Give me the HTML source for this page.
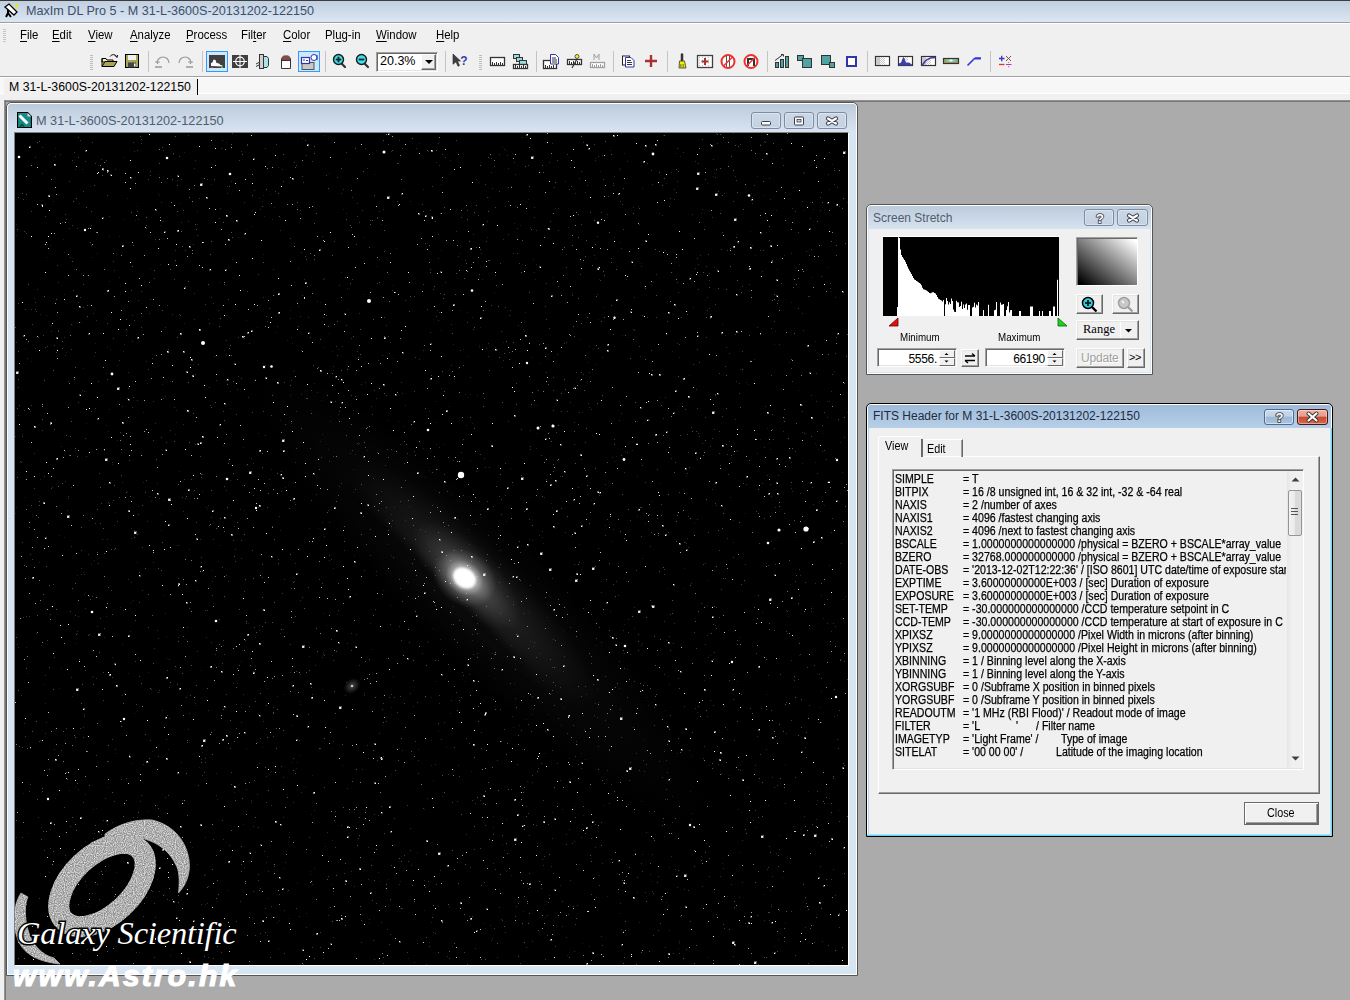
<!DOCTYPE html><html><head><meta charset="utf-8"><style>
*{margin:0;padding:0;box-sizing:border-box}
html,body{width:1350px;height:1000px;overflow:hidden;background:#ababab;font-family:"Liberation Sans",sans-serif;position:relative}
.a{position:absolute}
.t{position:absolute;white-space:nowrap;line-height:1}
#title{left:0;top:0;width:1350px;height:23px;background:linear-gradient(#c0cfe1,#dbe6f2);border-top:1px solid #3e3c3a;border-bottom:1px solid #a0a0a0}
#menu{left:0;top:23px;width:1350px;height:24px;background:#f0f0f0;border-top:1px solid #fff}
#tool{left:0;top:47px;width:1350px;height:30px;background:#f0f0f0;border-bottom:1px solid #a0a0a0}
#tabs{left:0;top:77px;width:1350px;height:23px;background:#f0f0f0;border-top:1px solid #fff}
.menu{font-size:12px;color:#000;transform:scaleX(.95);transform-origin:0 0}
.menu u{text-decoration:underline;text-decoration-thickness:1px;text-underline-offset:1.5px}
.sep{position:absolute;width:2px;background:linear-gradient(90deg,#c8c8c8 50%,#fff 50%)}
.grip{position:absolute;width:3px;background:repeating-linear-gradient(#c5c5c5 0 1px,transparent 1px 2px)}
.fx{font-size:12px;color:#000;transform:scaleX(.882);transform-origin:0 0;-webkit-text-stroke:.25px #000}
.btn{position:absolute;background:linear-gradient(#f7f7f7,#e2e2e2);border:1px solid #707070;border-radius:2px}
</style></head><body>
<div id="title" class="a"></div>
<svg class="a" style="left:2px;top:2px" width="18" height="18" viewBox="0 0 18 18">
<path d="M3 5 L7 2 L15 10 L12 13 Z" fill="#fff" stroke="#000" stroke-width="1.3"/>
<path d="M6 11 L4 15 M6 11 L9 15 M6 11 L6 8" stroke="#000" stroke-width="2"/>
<rect x="13" y="2" width="3" height="3" fill="#e8e800"/></svg>
<div class="t" style="left:26px;top:5px;font-size:12.6px;color:#3e4e68">MaxIm DL Pro 5 - M 31-L-3600S-20131202-122150</div>
<div id="menu" class="a"></div>
<div class="grip" style="left:3px;top:29px;height:14px"></div>
<div class="t menu" style="left:20px;top:29px"><u>F</u>ile</div>
<div class="t menu" style="left:52px;top:29px"><u>E</u>dit</div>
<div class="t menu" style="left:88px;top:29px"><u>V</u>iew</div>
<div class="t menu" style="left:130px;top:29px"><u>A</u>nalyze</div>
<div class="t menu" style="left:186px;top:29px"><u>P</u>rocess</div>
<div class="t menu" style="left:241px;top:29px">Fil<u>t</u>er</div>
<div class="t menu" style="left:283px;top:29px"><u>C</u>olor</div>
<div class="t menu" style="left:325px;top:29px">Pl<u>u</u>g-in</div>
<div class="t menu" style="left:376px;top:29px"><u>W</u>indow</div>
<div class="t menu" style="left:436px;top:29px"><u>H</u>elp</div>
<div id="tool" class="a"></div>
<div id="tabs" class="a"></div>
<svg class="a" style="left:0;top:47px" width="1350" height="30" viewBox="0 47 1350 30"><path d="M148.5 51V72" stroke="#c4c4c4" stroke-width="1"/><path d="M202.5 51V72" stroke="#c4c4c4" stroke-width="1"/><path d="M325.5 51V72" stroke="#c4c4c4" stroke-width="1"/><path d="M445.5 51V72" stroke="#c4c4c4" stroke-width="1"/><path d="M536.5 51V72" stroke="#c4c4c4" stroke-width="1"/><path d="M613.5 51V72" stroke="#c4c4c4" stroke-width="1"/><path d="M667.5 51V72" stroke="#c4c4c4" stroke-width="1"/><path d="M767.5 51V72" stroke="#c4c4c4" stroke-width="1"/><path d="M867.5 51V72" stroke="#c4c4c4" stroke-width="1"/><path d="M990.5 51V72" stroke="#c4c4c4" stroke-width="1"/><path d="M90 55.5h3" stroke="#bdbdbd" stroke-width="1"/><path d="M90 57.5h3" stroke="#bdbdbd" stroke-width="1"/><path d="M90 59.5h3" stroke="#bdbdbd" stroke-width="1"/><path d="M90 61.5h3" stroke="#bdbdbd" stroke-width="1"/><path d="M90 63.5h3" stroke="#bdbdbd" stroke-width="1"/><path d="M90 65.5h3" stroke="#bdbdbd" stroke-width="1"/><path d="M90 67.5h3" stroke="#bdbdbd" stroke-width="1"/><path d="M90 69.5h3" stroke="#bdbdbd" stroke-width="1"/><path d="M479 55.5h3" stroke="#bdbdbd" stroke-width="1"/><path d="M479 57.5h3" stroke="#bdbdbd" stroke-width="1"/><path d="M479 59.5h3" stroke="#bdbdbd" stroke-width="1"/><path d="M479 61.5h3" stroke="#bdbdbd" stroke-width="1"/><path d="M479 63.5h3" stroke="#bdbdbd" stroke-width="1"/><path d="M479 65.5h3" stroke="#bdbdbd" stroke-width="1"/><path d="M479 67.5h3" stroke="#bdbdbd" stroke-width="1"/><path d="M479 69.5h3" stroke="#bdbdbd" stroke-width="1"/><path d="M102 58.5h4l1 1.5h6v2h-11z" fill="#f4f2a0" stroke="#000" stroke-width="1"/><path d="M102 66.5l3-5h12l-3 5z" fill="#a8a458" stroke="#000" stroke-width="1"/><path d="M102 58.5v8" stroke="#000"/><path d="M110 56.5c2-2.5 5-2.5 6.5 0" stroke="#000" fill="none" stroke-width="1"/><path d="M115 55.5l2 2 .5-2.5" stroke="#000" fill="none"/><rect x="125.5" y="54.5" width="13" height="13" fill="#a8a458" stroke="#000"/><rect x="128" y="55" width="8" height="5" fill="#f0f0f0"/><rect x="128" y="62.5" width="8" height="5" fill="#444"/><rect x="134" y="63.5" width="1.5" height="3" fill="#fff"/><path d="M157 63a6 6 0 1 1 12 0" stroke="#9a9a9a" stroke-width="1.2" fill="none"/><path d="M155 62h5M157.5 62v2" stroke="#9a9a9a" stroke-width="1.2"/><path d="M155 67h7" stroke="#9a9a9a" stroke-width="1.5"/><path d="M179 63a6 6 0 1 1 12 0" stroke="#9a9a9a" stroke-width="1.2" fill="none"/><path d="M188 62h5M190.5 62v2" stroke="#9a9a9a" stroke-width="1.2"/><path d="M186 67h7" stroke="#9a9a9a" stroke-width="1.5"/><rect x="206.5" y="51.5" width="21" height="20" fill="#cce8ff" stroke="#3399ff"/><rect x="298.5" y="51.5" width="21" height="20" fill="#cce8ff" stroke="#3399ff"/><rect x="209" y="55" width="16" height="13" fill="#404040"/><path d="M211 66v-3l1.5-.5 1-3 2 .5 1 3 2.5.5 1.5 1.5 2 .5v1z" fill="#fff"/><path d="M211 67.5h2" stroke="#e33" /><path d="M221 67.5h2" stroke="#3c3"/><rect x="232" y="55" width="16" height="13" fill="#404040"/><circle cx="240" cy="61.5" r="4.3" stroke="#fff" fill="none" stroke-width="1.2"/><path d="M233 61.5h14M240 55v13" stroke="#fff" stroke-width="1"/><rect x="259.5" y="54.5" width="4" height="14" fill="#d0d0d0" stroke="#333"/><path d="M263.5 56.5h3.5l1.5 2v7l-1.5 2h-3.5z" fill="#a8e4ea" stroke="#333"/><path d="M256 64l3-1.5M256 66.5l3-1.5" stroke="#333"/><path d="M281.5 68.5v-10l2-2.5h5l2 2.5v10z" fill="#fff" stroke="#333"/><path d="M283.5 56h5l1.5 2v2h-8v-2z" fill="#8a4848"/><path d="M282 60.5h8" stroke="#333"/><rect x="302" y="62.5" width="12" height="7" fill="#c8c8c8" stroke="#555"/><rect x="301.5" y="57.5" width="8" height="6" fill="#fff" stroke="#3333aa" stroke-width="1.2"/><path d="M303 60h2M306 60.5h2" stroke="#3333aa"/><circle cx="314" cy="57.5" r="3" fill="#fff" stroke="#3333aa"/><path d="M317 55v5" stroke="#3333aa"/><path d="M341.5 63.5l3.5 3.5" stroke="#333" stroke-width="2.2" stroke-linecap="round"/><circle cx="338.5" cy="59.5" r="5" fill="#3ae0ee" stroke="#1a1a1a" stroke-width="1.4"/><path d="M335.7 59.5h5.6" stroke="#222" stroke-width="1.8"/><path d="M338.5 56.7v5.6" stroke="#222" stroke-width="1.8"/><path d="M364.5 63.5l3.5 3.5" stroke="#333" stroke-width="2.2" stroke-linecap="round"/><circle cx="361.5" cy="59.5" r="5" fill="#3ae0ee" stroke="#1a1a1a" stroke-width="1.4"/><path d="M358.7 59.5h5.6" stroke="#222" stroke-width="1.8"/><path d="M453 54l7.5 7h-3l2 4.5-1.5.8-2-4.5-3 2.5z" fill="#404040" stroke="#222" stroke-width=".6"/><text x="464" y="64.5" text-anchor="middle" font-family="Liberation Sans" font-weight="bold" font-size="12" fill="#3a3ab0">?</text><rect x="490.5" y="57.5" width="14" height="8" fill="#fff" stroke="#333" stroke-width="1.3"/><path d="M492.5 65v-3" stroke="#333"/><path d="M494.5 65v-2" stroke="#333"/><path d="M496.5 65v-3" stroke="#333"/><path d="M498.5 65v-2" stroke="#333"/><path d="M500.5 65v-3" stroke="#333"/><path d="M502.5 65v-2" stroke="#333"/><rect x="513.5" y="54.5" width="6" height="4" fill="#9adada" stroke="#333"/><rect x="516.5" y="57.5" width="6" height="4" fill="#9adada" stroke="#333"/><rect x="519.5" y="60.5" width="7" height="4" fill="#9adada" stroke="#333"/><rect x="513.5" y="64.5" width="14" height="4" fill="#fff" stroke="#333" stroke-width="1.3"/><path d="M515.5 68v-3" stroke="#333"/><path d="M517.5 68v-2" stroke="#333"/><path d="M519.5 68v-3" stroke="#333"/><path d="M521.5 68v-2" stroke="#333"/><path d="M523.5 68v-3" stroke="#333"/><path d="M525.5 68v-2" stroke="#333"/><rect x="543.5" y="60.5" width="13" height="8" fill="#fff" stroke="#333" stroke-width="1.3"/><path d="M545.5 68v-3" stroke="#333"/><path d="M547.5 68v-2" stroke="#333"/><path d="M549.5 68v-3" stroke="#333"/><path d="M551.5 68v-2" stroke="#333"/><path d="M553.5 68v-3" stroke="#333"/><path d="M550.5 54.5h5l3 3v6.5h-8z" fill="#fff" stroke="#3333aa"/><path d="M552 58h4M552 60h5M552 62h5" stroke="#333"/><rect x="567.5" y="59.5" width="14" height="5" fill="#fff" stroke="#333" stroke-width="1.3"/><path d="M569.5 64v-3" stroke="#333"/><path d="M571.5 64v-2" stroke="#333"/><path d="M573.5 64v-3" stroke="#333"/><path d="M575.5 64v-2" stroke="#333"/><path d="M577.5 64v-3" stroke="#333"/><path d="M579.5 64v-2" stroke="#333"/><path d="M572 68l5-9" stroke="#333" stroke-width="1.2"/><circle cx="577" cy="56.5" r="2" fill="#f0f030" stroke="#333" stroke-width=".8"/><rect x="590.5" y="62.5" width="14" height="5" fill="#fff" stroke="#a0a0a0" stroke-width="1.3"/><path d="M592.5 67v-3" stroke="#a0a0a0"/><path d="M594.5 67v-2" stroke="#a0a0a0"/><path d="M596.5 67v-3" stroke="#a0a0a0"/><path d="M598.5 67v-2" stroke="#a0a0a0"/><path d="M600.5 67v-3" stroke="#a0a0a0"/><path d="M602.5 67v-2" stroke="#a0a0a0"/><path d="M594 60v-6l2.5 4 2.5-4v6" stroke="#a0a0a0" fill="none"/><rect x="622.5" y="56" width="7" height="9" fill="#fff" stroke="#222"/><path d="M625.5 57.5h5.5l3 3v6.5h-8.5z" fill="#fff" stroke="#3333aa"/><path d="M627 60.5h4M627 62.5h5M627 64.5h5" stroke="#333"/><path d="M645 61h12M651 55v12" stroke="#a83232" stroke-width="2.4"/><path d="M682 54.5v6" stroke="#333" stroke-width="2.5" stroke-linecap="round"/><path d="M679.5 61h5l1.5 7h-7z" fill="#f0f000" stroke="#333" stroke-width=".8"/><path d="M680.5 64v3.5M682 64v3.5M683.5 64v3.5" stroke="#555" stroke-width=".6"/><rect x="697.5" y="55.5" width="15" height="12" fill="#fff" stroke="#404040" stroke-width="1.3"/><path d="M699 57.5h12M699 60h12M699 63h12M699 65.5h12" stroke="#aaa" stroke-dasharray="1 2" stroke-width=".8"/><path d="M701.5 61.5h7M705 58v7" stroke="#a83232" stroke-width="2"/><circle cx="728" cy="61.5" r="6.5" fill="#fff" stroke="#ee3030" stroke-width="2"/><path d="M726.5 56v11M729.5 56v11" stroke="#555" stroke-width="1"/><path d="M723.5 66l9-9" stroke="#ee3030" stroke-width="1.5"/><circle cx="751" cy="61.5" r="6.5" fill="#fff" stroke="#ee3030" stroke-width="2"/><path d="M748 66v-7h6v7" stroke="#333" stroke-width="2" fill="none"/><path d="M746.5 66l9-9" stroke="#ee3030" stroke-width="1.5"/><rect x="775.5" y="62.5" width="3" height="5" fill="#4fa3a3" stroke="#333"/><rect x="780.5" y="59.5" width="3" height="8" fill="#4fa3a3" stroke="#333"/><rect x="785.5" y="56.5" width="3" height="11" fill="#4fa3a3" stroke="#333"/><path d="M775 60.5l8-6M781 54.5h2.5v2" stroke="#333" fill="none"/><rect x="797.5" y="55.5" width="6" height="5" fill="#4fa3a3" stroke="#333"/><rect x="802.5" y="58.5" width="9" height="9" fill="#4fa3a3" stroke="#333"/><rect x="821.5" y="55.5" width="9" height="9" fill="#4fa3a3" stroke="#333"/><rect x="829.5" y="62.5" width="5" height="5" fill="#4fa3a3" stroke="#333"/><rect x="847" y="57" width="9" height="9" fill="#fff" stroke="#3333aa" stroke-width="2"/><defs><pattern id="chk" width="2" height="2" patternUnits="userSpaceOnUse"><rect width="2" height="2" fill="#fff"/><rect width="1" height="1" fill="#c8c8c8"/><rect x="1" y="1" width="1" height="1" fill="#c8c8c8"/></pattern></defs><rect x="875.5" y="56.5" width="14" height="9" fill="#fff" stroke="#333" stroke-width="1.2"/><rect x="876" y="57" width="4" height="8" fill="#c8c8c8"/><rect x="880" y="57" width="5" height="8" fill="url(#chk)"/><rect x="898.5" y="56.5" width="14" height="9" fill="#fff" stroke="#333" stroke-width="1.2"/><rect x="903" y="57" width="5" height="4" fill="url(#chk)"/><path d="M899 65.5v-2l2-1 2-5h1l2 5h3l3 2v1z" fill="#3e3ea8"/><rect x="921.5" y="56.5" width="14" height="9" fill="#fff" stroke="#333" stroke-width="1.2"/><rect x="922" y="57" width="4" height="8" fill="#c8c8c8"/><rect x="926" y="59" width="5" height="6" fill="url(#chk)"/><path d="M922 65.5c3-5 6-8 13-8" stroke="#3e3ea8" stroke-width="1.6" fill="none"/><rect x="943.5" y="58.5" width="15" height="5" fill="#a8a060" stroke="#333" stroke-width="1.2"/><path d="M946 59.5h3l1 2h-3z M953 59.5h3l-1 2h-3z" fill="#50e0f0"/><rect x="949.5" y="59.5" width="3" height="2" fill="#fff"/><path d="M967.5 65.5l7-7h6" stroke="#3535e0" stroke-width="1.6" fill="none"/><path d="M975 58.3h6" stroke="#3535e0" stroke-width="2"/><path d="M999 58.5h5.5M1001.7 55.7v5.5" stroke="#3535d0" stroke-width="1.3"/><path d="M1006 56l5 5M1011 56l-5 5" stroke="#8a4848" stroke-width="1"/><path d="M999 64.5h5.5" stroke="#e83030" stroke-width="1.3"/><path d="M1006 64.5h5.5" stroke="#a040c0" stroke-width="1"/><circle cx="1008.7" cy="62.5" r=".6" fill="#a040c0"/><circle cx="1008.7" cy="66.6" r=".6" fill="#a040c0"/></svg>
<div class="a" style="left:376px;top:52px;width:62px;height:20px;background:#fff;border:1px solid;border-color:#a0a0a0 #fff #fff #a0a0a0;box-shadow:inset 1px 1px #696969,inset -1px -1px #e3e3e3"></div>
<div class="t" style="left:380px;top:55px;font-size:12.5px;color:#000">20.3%</div>
<div class="a" style="left:421px;top:54px;width:15px;height:16px;background:#f0f0f0;border:1px solid;border-color:#fff #696969 #696969 #fff;box-shadow:inset -1px -1px #a0a0a0"></div>
<svg class="a" style="left:424px;top:59px" width="10" height="6"><path d="M1 1h8L5 5z" fill="#000"/></svg>
<div class="a" style="left:0;top:78px;width:1350px;height:16px;background:#f7f7f7;border-bottom:1px solid #fff"></div>
<div class="a" style="left:4px;top:78px;width:193px;height:17px;background:#f0f0f0"></div>
<div class="t" style="left:9px;top:81px;font-size:12.3px;color:#000">M 31-L-3600S-20131202-122150</div>
<div class="a" style="left:197px;top:79px;width:1px;height:16px;background:#000"></div>
<div class="a" style="left:0;top:95px;width:1350px;height:5px;background:#f0f0f0"></div>
<div class="a" style="left:0;top:95px;width:4px;height:905px;background:#f0f0f0"></div>
<div class="a" style="left:4px;top:100px;width:1346px;height:2px;background:linear-gradient(#a0a0a0,#696969)"></div>
<div class="a" style="left:4px;top:100px;width:2px;height:900px;background:linear-gradient(90deg,#a0a0a0,#696969)"></div>
<div class="a" style="left:6px;top:102px;width:852px;height:874px;border:1px solid #555;border-radius:5px 5px 0 0;background:#d7e4f2;box-shadow:inset 1px 1px 0 #fff,inset -1px -1px 0 #fff"></div>
<div class="a" style="left:8px;top:104px;width:848px;height:28px;border-radius:3px 3px 0 0;background:linear-gradient(#bccbdc,#d9e4f1)"></div>
<div class="a" style="left:14px;top:132px;width:835px;height:834px;border:1px solid;border-color:#808080 #fff #fff #808080"></div>
<div class="a" id="img" style="left:15px;top:133px;width:833px;height:832px;background:#000;overflow:hidden"><svg width="833" height="832" viewBox="0 0 833 832" style="display:block"><defs>
<radialGradient id="g1"><stop offset="0" stop-color="#fff" stop-opacity=".065"/><stop offset=".5" stop-color="#fff" stop-opacity=".025"/><stop offset="1" stop-color="#fff" stop-opacity="0"/></radialGradient>
<radialGradient id="g5"><stop offset="0" stop-color="#fff" stop-opacity=".32"/><stop offset=".45" stop-color="#fff" stop-opacity=".1"/><stop offset="1" stop-color="#fff" stop-opacity="0"/></radialGradient>
<radialGradient id="g2"><stop offset="0" stop-color="#fff" stop-opacity=".14"/><stop offset=".4" stop-color="#fff" stop-opacity=".055"/><stop offset="1" stop-color="#fff" stop-opacity="0"/></radialGradient>
<radialGradient id="g3"><stop offset="0" stop-color="#fff" stop-opacity="1"/><stop offset=".3" stop-color="#fff" stop-opacity=".6"/><stop offset=".6" stop-color="#fff" stop-opacity=".18"/><stop offset="1" stop-color="#fff" stop-opacity="0"/></radialGradient>
<radialGradient id="g4"><stop offset="0" stop-color="#fff" stop-opacity=".28"/><stop offset="1" stop-color="#fff" stop-opacity="0"/></radialGradient>
<filter id="bl2" x="-50%" y="-50%" width="200%" height="200%"><feGaussianBlur stdDeviation="3"/></filter><filter id="bl" x="-50%" y="-50%" width="200%" height="200%"><feGaussianBlur stdDeviation="1.2"/></filter>
</defs><g transform="translate(449.5 445) rotate(45)"><ellipse cx="25" cy="0" rx="320" ry="68" fill="url(#g1)"/><ellipse cx="10" cy="-3" rx="170" ry="40" fill="url(#g2)"/><ellipse cx="0" cy="-3" rx="70" ry="30" fill="url(#g5)"/><ellipse cx="-15" cy="22" rx="130" ry="5" fill="#000" opacity=".55" filter="url(#bl2)"/></g><g transform="translate(449.5 445) rotate(35)"><ellipse cx="0" cy="0" rx="34" ry="27" fill="url(#g3)"/><ellipse cx="0" cy="0" rx="12" ry="9.5" fill="#fff" filter="url(#bl)"/></g><circle cx="337" cy="553" r="1.3" fill="#fff" opacity=".7"/><ellipse cx="337" cy="553" rx="9" ry="7" fill="url(#g4)" transform="rotate(-40 337 553)"/><path fill="#fff" fill-opacity="0.118" d="M145 92h1v1h-1zM638 15h1v1h-1zM247 614h1v1h-1zM511 4h1v1h-1zM416 564h1v1h-1zM30 71h1v1h-1zM395 68h1v1h-1zM252 723h1v1h-1zM403 616h1v1h-1zM452 264h1v1h-1zM303 395h1v1h-1zM48 106h1v1h-1zM233 490h1v1h-1zM766 16h1v1h-1zM255 61h1v1h-1zM604 35h1v1h-1zM34 21h1v1h-1zM326 139h1v1h-1zM79 427h1v1h-1zM511 586h1v1h-1zM388 596h1v1h-1zM623 73h1v1h-1zM92 654h1v1h-1zM451 473h1v1h-1zM531 768h1v1h-1zM317 615h1v1h-1zM359 41h1v1h-1zM283 173h1v1h-1zM328 76h1v1h-1zM284 622h1v1h-1zM664 810h1v1h-1zM465 194h1v1h-1zM797 144h1v1h-1zM182 731h1v1h-1zM773 483h1v1h-1zM201 640h1v1h-1zM101 739h1v1h-1zM268 735h1v1h-1zM356 516h1v1h-1zM504 592h1v1h-1zM420 548h1v1h-1zM28 551h1v1h-1zM528 410h1v1h-1zM132 718h1v1h-1zM107 511h1v1h-1zM135 744h1v1h-1zM265 397h1v1h-1zM205 412h1v1h-1zM108 24h1v1h-1zM161 289h1v1h-1zM697 473h1v1h-1zM13 649h1v1h-1zM97 524h1v1h-1zM308 480h1v1h-1zM10 364h1v1h-1zM583 186h1v1h-1zM657 218h1v1h-1zM780 404h1v1h-1zM117 630h1v1h-1zM454 411h1v1h-1zM533 581h1v1h-1zM653 455h1v1h-1zM562 611h1v1h-1zM554 625h1v1h-1zM46 535h1v1h-1zM147 251h1v1h-1zM244 492h1v1h-1zM699 40h1v1h-1zM435 27h1v1h-1zM74 773h1v1h-1zM762 136h1v1h-1zM331 80h1v1h-1zM794 9h1v1h-1zM317 218h1v1h-1zM288 831h1v1h-1zM226 528h1v1h-1zM806 558h1v1h-1zM499 550h1v1h-1zM725 632h1v1h-1zM91 475h1v1h-1zM536 370h1v1h-1zM350 676h1v1h-1zM528 547h1v1h-1zM276 629h1v1h-1zM426 197h1v1h-1zM478 683h1v1h-1zM692 472h1v1h-1zM669 455h1v1h-1zM243 300h1v1h-1zM469 790h1v1h-1zM568 682h1v1h-1zM385 748h1v1h-1zM457 391h1v1h-1zM104 144h1v1h-1zM37 474h1v1h-1zM102 232h1v1h-1zM416 789h1v1h-1zM339 422h1v1h-1zM676 623h1v1h-1zM807 300h1v1h-1zM582 556h1v1h-1zM169 190h1v1h-1zM629 606h1v1h-1zM540 395h1v1h-1zM54 657h1v1h-1zM412 509h1v1h-1zM444 120h1v1h-1zM514 406h1v1h-1zM487 711h1v1h-1zM580 125h1v1h-1zM745 306h1v1h-1zM332 176h1v1h-1zM46 313h1v1h-1zM196 51h1v1h-1zM228 314h1v1h-1zM823 677h1v1h-1zM283 135h1v1h-1zM540 75h1v1h-1zM822 582h1v1h-1zM751 561h1v1h-1zM2 511h1v1h-1zM611 731h1v1h-1zM332 155h1v1h-1zM817 31h1v1h-1zM638 149h1v1h-1zM318 435h1v1h-1zM534 762h1v1h-1zM538 144h1v1h-1zM483 434h1v1h-1zM302 259h1v1h-1zM625 223h1v1h-1zM164 412h1v1h-1zM390 387h1v1h-1zM429 74h1v1h-1zM281 635h1v1h-1zM740 122h1v1h-1zM262 789h1v1h-1zM143 41h1v1h-1zM676 686h1v1h-1zM123 373h1v1h-1zM414 278h1v1h-1zM259 74h1v1h-1zM789 77h1v1h-1zM627 425h1v1h-1zM240 533h1v1h-1zM556 403h1v1h-1zM665 783h1v1h-1zM270 354h1v1h-1zM64 70h1v1h-1zM721 317h1v1h-1zM49 161h1v1h-1zM365 748h1v1h-1zM414 337h1v1h-1zM452 179h1v1h-1zM686 80h1v1h-1zM418 495h1v1h-1zM584 742h1v1h-1zM551 121h1v1h-1zM277 367h1v1h-1zM10 215h1v1h-1zM408 315h1v1h-1zM256 638h1v1h-1zM181 355h1v1h-1zM68 772h1v1h-1zM832 279h1v1h-1zM516 581h1v1h-1zM384 615h1v1h-1zM457 290h1v1h-1zM564 411h1v1h-1zM117 816h1v1h-1zM66 189h1v1h-1zM464 212h1v1h-1zM57 789h1v1h-1zM500 73h1v1h-1zM314 200h1v1h-1zM204 149h1v1h-1zM518 126h1v1h-1zM240 504h1v1h-1zM299 677h1v1h-1zM349 104h1v1h-1zM559 673h1v1h-1zM464 214h1v1h-1zM809 372h1v1h-1zM491 686h1v1h-1zM443 235h1v1h-1zM527 404h1v1h-1zM759 813h1v1h-1zM479 159h1v1h-1zM379 374h1v1h-1zM548 574h1v1h-1zM794 808h1v1h-1zM308 519h1v1h-1zM132 678h1v1h-1zM416 632h1v1h-1zM157 816h1v1h-1zM160 301h1v1h-1zM307 556h1v1h-1zM581 512h1v1h-1zM225 376h1v1h-1zM341 461h1v1h-1zM50 318h1v1h-1zM228 691h1v1h-1zM730 380h1v1h-1zM416 607h1v1h-1zM308 214h1v1h-1zM91 292h1v1h-1zM256 336h1v1h-1zM49 404h1v1h-1zM654 734h1v1h-1zM593 559h1v1h-1zM343 695h1v1h-1zM176 800h1v1h-1zM693 447h1v1h-1zM455 327h1v1h-1zM118 364h1v1h-1zM317 707h1v1h-1zM483 417h1v1h-1zM443 632h1v1h-1zM190 771h1v1h-1zM825 309h1v1h-1zM268 496h1v1h-1zM237 77h1v1h-1zM588 672h1v1h-1zM309 2h1v1h-1zM144 62h1v1h-1zM584 146h1v1h-1zM30 570h1v1h-1zM437 813h1v1h-1zM32 111h1v1h-1zM305 308h1v1h-1zM190 704h1v1h-1zM0 380h1v1h-1zM318 237h1v1h-1zM553 94h1v1h-1zM452 223h1v1h-1zM388 293h1v1h-1zM487 14h1v1h-1zM376 381h1v1h-1zM279 149h1v1h-1zM692 50h1v1h-1zM164 338h1v1h-1zM150 480h1v1h-1zM626 668h1v1h-1zM290 654h1v1h-1zM649 703h1v1h-1zM355 490h1v1h-1zM597 408h1v1h-1zM260 199h1v1h-1zM436 361h1v1h-1zM731 249h1v1h-1zM767 744h1v1h-1zM804 769h1v1h-1zM236 669h1v1h-1zM707 191h1v1h-1zM663 273h1v1h-1zM338 336h1v1h-1zM475 792h1v1h-1zM67 36h1v1h-1zM722 548h1v1h-1zM808 485h1v1h-1zM12 540h1v1h-1zM193 186h1v1h-1zM274 785h1v1h-1zM62 442h1v1h-1zM57 563h1v1h-1zM747 479h1v1h-1zM601 323h1v1h-1zM343 311h1v1h-1zM263 34h1v1h-1zM323 216h1v1h-1zM421 311h1v1h-1zM231 615h1v1h-1zM61 510h1v1h-1zM557 160h1v1h-1zM829 744h1v1h-1zM100 620h1v1h-1zM361 442h1v1h-1zM149 367h1v1h-1zM211 182h1v1h-1zM120 87h1v1h-1zM21 500h1v1h-1zM712 596h1v1h-1zM718 321h1v1h-1zM735 684h1v1h-1zM712 763h1v1h-1zM785 696h1v1h-1zM97 331h1v1h-1zM64 812h1v1h-1zM567 279h1v1h-1zM226 574h1v1h-1zM306 267h1v1h-1zM275 177h1v1h-1zM308 401h1v1h-1zM663 815h1v1h-1zM77 544h1v1h-1zM732 654h1v1h-1zM605 780h1v1h-1zM591 646h1v1h-1zM181 572h1v1h-1zM776 169h1v1h-1zM809 206h1v1h-1zM650 117h1v1h-1zM425 506h1v1h-1zM276 204h1v1h-1zM296 681h1v1h-1zM49 119h1v1h-1zM208 512h1v1h-1zM742 43h1v1h-1zM166 629h1v1h-1zM148 88h1v1h-1zM142 350h1v1h-1zM581 764h1v1h-1zM314 40h1v1h-1zM723 110h1v1h-1zM299 250h1v1h-1zM783 257h1v1h-1zM413 508h1v1h-1zM134 795h1v1h-1zM751 1h1v1h-1zM1 704h1v1h-1zM480 519h1v1h-1zM381 115h1v1h-1zM657 663h1v1h-1zM487 234h1v1h-1zM522 272h1v1h-1zM621 374h1v1h-1zM82 120h1v1h-1zM718 409h1v1h-1zM745 11h1v1h-1zM116 767h1v1h-1zM187 619h1v1h-1zM798 76h1v1h-1zM793 658h1v1h-1zM474 64h1v1h-1zM294 395h1v1h-1zM653 543h1v1h-1zM231 96h1v1h-1zM508 196h1v1h-1zM122 429h1v1h-1zM84 811h1v1h-1zM136 368h1v1h-1zM128 349h1v1h-1zM180 570h1v1h-1zM94 148h1v1h-1zM95 216h1v1h-1zM438 473h1v1h-1zM599 213h1v1h-1zM236 93h1v1h-1zM447 467h1v1h-1zM576 367h1v1h-1zM229 377h1v1h-1zM107 349h1v1h-1zM190 741h1v1h-1zM322 481h1v1h-1zM754 310h1v1h-1zM91 483h1v1h-1zM812 268h1v1h-1zM829 522h1v1h-1zM64 793h1v1h-1zM94 276h1v1h-1zM609 20h1v1h-1zM24 429h1v1h-1zM546 592h1v1h-1zM770 631h1v1h-1zM749 62h1v1h-1zM128 279h1v1h-1zM610 318h1v1h-1zM92 214h1v1h-1zM674 242h1v1h-1zM248 121h1v1h-1zM269 561h1v1h-1zM178 231h1v1h-1zM671 342h1v1h-1zM749 761h1v1h-1zM44 402h1v1h-1zM60 654h1v1h-1zM462 452h1v1h-1zM692 824h1v1h-1zM679 55h1v1h-1zM470 795h1v1h-1zM607 202h1v1h-1zM323 281h1v1h-1zM762 404h1v1h-1zM365 821h1v1h-1zM231 332h1v1h-1zM253 765h1v1h-1zM71 752h1v1h-1zM366 91h1v1h-1zM229 734h1v1h-1zM812 134h1v1h-1zM457 507h1v1h-1zM40 665h1v1h-1zM478 694h1v1h-1zM1 102h1v1h-1zM278 238h1v1h-1zM105 474h1v1h-1zM364 623h1v1h-1zM515 508h1v1h-1zM698 43h1v1h-1zM228 203h1v1h-1zM426 51h1v1h-1zM574 213h1v1h-1zM426 117h1v1h-1zM631 564h1v1h-1zM568 582h1v1h-1zM375 472h1v1h-1zM213 757h1v1h-1zM814 56h1v1h-1zM122 520h1v1h-1zM669 435h1v1h-1zM140 108h1v1h-1zM282 629h1v1h-1zM209 217h1v1h-1zM421 29h1v1h-1zM569 596h1v1h-1zM263 815h1v1h-1zM317 751h1v1h-1zM247 68h1v1h-1zM193 372h1v1h-1zM530 620h1v1h-1zM182 808h1v1h-1zM282 750h1v1h-1zM393 449h1v1h-1zM92 691h1v1h-1zM305 169h1v1h-1zM451 292h1v1h-1zM349 560h1v1h-1zM760 198h1v1h-1zM364 126h1v1h-1zM13 700h1v1h-1zM604 109h1v1h-1zM491 738h1v1h-1zM279 237h1v1h-1zM517 407h1v1h-1zM257 86h1v1h-1zM35 112h1v1h-1zM44 555h1v1h-1zM19 798h1v1h-1zM264 787h1v1h-1zM564 731h1v1h-1zM609 491h1v1h-1zM586 644h1v1h-1zM678 174h1v1h-1zM477 520h1v1h-1zM599 104h1v1h-1zM310 713h1v1h-1zM68 439h1v1h-1zM372 287h1v1h-1zM462 262h1v1h-1zM491 388h1v1h-1zM534 299h1v1h-1zM247 477h1v1h-1zM182 91h1v1h-1zM409 676h1v1h-1zM438 211h1v1h-1zM637 368h1v1h-1zM772 500h1v1h-1zM814 432h1v1h-1zM496 742h1v1h-1zM248 62h1v1h-1zM707 730h1v1h-1zM383 288h1v1h-1zM694 545h1v1h-1zM7 301h1v1h-1zM1 374h1v1h-1zM800 310h1v1h-1zM552 822h1v1h-1zM238 538h1v1h-1zM81 675h1v1h-1zM294 523h1v1h-1zM42 661h1v1h-1zM467 146h1v1h-1zM71 290h1v1h-1zM765 702h1v1h-1zM651 769h1v1h-1zM373 746h1v1h-1zM81 263h1v1h-1zM514 479h1v1h-1zM354 790h1v1h-1zM752 295h1v1h-1zM488 209h1v1h-1zM51 219h1v1h-1zM662 620h1v1h-1zM53 248h1v1h-1zM25 346h1v1h-1zM694 632h1v1h-1zM644 80h1v1h-1zM93 298h1v1h-1zM611 146h1v1h-1zM295 738h1v1h-1zM409 777h1v1h-1zM122 73h1v1h-1zM761 77h1v1h-1zM402 719h1v1h-1zM297 642h1v1h-1zM587 224h1v1h-1zM244 497h1v1h-1zM595 478h1v1h-1zM149 462h1v1h-1zM491 17h1v1h-1zM429 437h1v1h-1zM299 735h1v1h-1zM815 828h1v1h-1zM612 536h1v1h-1zM242 194h1v1h-1zM651 507h1v1h-1zM739 226h1v1h-1zM133 629h1v1h-1zM378 152h1v1h-1zM217 126h1v1h-1zM279 369h1v1h-1zM547 676h1v1h-1zM151 503h1v1h-1zM577 302h1v1h-1zM613 204h1v1h-1zM599 328h1v1h-1zM588 174h1v1h-1zM8 660h1v1h-1zM448 216h1v1h-1zM573 229h1v1h-1zM715 364h1v1h-1zM532 484h1v1h-1zM112 790h1v1h-1zM78 543h1v1h-1zM42 216h1v1h-1zM215 258h1v1h-1zM590 392h1v1h-1zM36 192h1v1h-1zM182 78h1v1h-1zM626 130h1v1h-1zM622 343h1v1h-1zM40 15h1v1h-1zM677 680h1v1h-1zM499 90h1v1h-1zM450 261h1v1h-1zM158 21h1v1h-1zM586 448h1v1h-1zM774 325h1v1h-1zM62 500h1v1h-1zM146 381h1v1h-1zM249 83h1v1h-1zM420 268h1v1h-1zM827 339h1v1h-1zM517 777h1v1h-1zM285 568h1v1h-1zM363 739h1v1h-1zM104 103h1v1h-1zM630 390h1v1h-1zM645 350h1v1h-1zM644 264h1v1h-1zM80 210h1v1h-1zM613 671h1v1h-1zM285 571h1v1h-1zM89 504h1v1h-1zM784 522h1v1h-1zM17 817h1v1h-1zM118 467h1v1h-1zM79 223h1v1h-1zM31 124h1v1h-1zM565 206h1v1h-1zM34 739h1v1h-1zM585 38h1v1h-1zM774 229h1v1h-1zM94 103h1v1h-1zM814 665h1v1h-1zM757 819h1v1h-1zM348 161h1v1h-1zM660 20h1v1h-1zM819 238h1v1h-1zM327 632h1v1h-1zM740 694h1v1h-1zM68 235h1v1h-1zM116 395h1v1h-1zM675 658h1v1h-1zM805 378h1v1h-1zM410 344h1v1h-1zM606 0h1v1h-1zM519 139h1v1h-1zM423 598h1v1h-1zM271 0h1v1h-1zM775 451h1v1h-1zM76 431h1v1h-1zM453 396h1v1h-1zM732 793h1v1h-1zM427 663h1v1h-1zM802 667h1v1h-1zM211 9h1v1h-1zM115 498h1v1h-1zM74 463h1v1h-1zM276 592h1v1h-1zM108 728h1v1h-1zM650 780h1v1h-1zM378 225h1v1h-1zM208 312h1v1h-1zM485 480h1v1h-1zM187 358h1v1h-1zM108 218h1v1h-1zM116 469h1v1h-1zM307 389h1v1h-1zM130 725h1v1h-1zM368 457h1v1h-1zM240 246h1v1h-1zM434 273h1v1h-1zM530 771h1v1h-1zM650 577h1v1h-1zM361 17h1v1h-1zM755 757h1v1h-1zM137 618h1v1h-1zM66 140h1v1h-1zM102 307h1v1h-1zM444 569h1v1h-1zM498 468h1v1h-1zM373 691h1v1h-1zM295 741h1v1h-1zM311 492h1v1h-1zM525 520h1v1h-1zM664 224h1v1h-1zM262 563h1v1h-1zM580 231h1v1h-1zM530 784h1v1h-1zM753 672h1v1h-1zM548 497h1v1h-1zM404 10h1v1h-1zM735 98h1v1h-1zM202 666h1v1h-1zM781 134h1v1h-1zM733 251h1v1h-1zM182 457h1v1h-1zM456 638h1v1h-1zM570 626h1v1h-1zM390 272h1v1h-1zM388 56h1v1h-1zM830 463h1v1h-1zM695 522h1v1h-1zM170 506h1v1h-1zM485 417h1v1h-1zM495 335h1v1h-1zM472 104h1v1h-1zM793 29h1v1h-1zM513 66h1v1h-1zM755 316h1v1h-1zM759 211h1v1h-1zM797 473h1v1h-1zM537 679h1v1h-1zM118 788h1v1h-1zM550 48h1v1h-1zM376 574h1v1h-1zM806 462h1v1h-1zM690 167h1v1h-1zM150 715h1v1h-1zM517 224h1v1h-1zM38 68h1v1h-1zM145 131h1v1h-1zM184 634h1v1h-1zM496 512h1v1h-1zM25 181h1v1h-1zM100 379h1v1h-1zM31 182h1v1h-1zM538 807h1v1h-1zM109 773h1v1h-1zM654 797h1v1h-1zM109 86h1v1h-1zM751 99h1v1h-1zM508 778h1v1h-1zM479 545h1v1h-1zM682 579h1v1h-1zM186 537h1v1h-1zM701 136h1v1h-1zM445 177h1v1h-1zM78 676h1v1h-1zM714 642h1v1h-1zM725 236h1v1h-1zM275 262h1v1h-1zM521 131h1v1h-1zM800 208h1v1h-1zM277 210h1v1h-1zM426 255h1v1h-1zM518 576h1v1h-1zM330 750h1v1h-1zM70 661h1v1h-1zM724 719h1v1h-1zM219 659h1v1h-1zM622 383h1v1h-1zM664 132h1v1h-1zM112 65h1v1h-1zM19 165h1v1h-1zM26 512h1v1h-1zM77 124h1v1h-1zM196 437h1v1h-1zM658 181h1v1h-1zM275 539h1v1h-1zM164 70h1v1h-1zM803 316h1v1h-1zM203 428h1v1h-1zM507 131h1v1h-1zM142 746h1v1h-1zM134 363h1v1h-1zM521 315h1v1h-1zM768 396h1v1h-1zM378 543h1v1h-1zM307 301h1v1h-1zM63 826h1v1h-1zM177 714h1v1h-1zM324 243h1v1h-1zM518 513h1v1h-1zM313 316h1v1h-1zM429 311h1v1h-1zM408 56h1v1h-1zM11 514h1v1h-1zM758 25h1v1h-1zM334 156h1v1h-1zM563 431h1v1h-1zM604 555h1v1h-1zM665 23h1v1h-1zM398 573h1v1h-1zM438 417h1v1h-1zM571 561h1v1h-1zM828 466h1v1h-1zM761 720h1v1h-1zM70 459h1v1h-1zM153 616h1v1h-1zM726 679h1v1h-1zM718 0h1v1h-1zM519 272h1v1h-1zM133 539h1v1h-1zM498 594h1v1h-1zM709 573h1v1h-1zM340 321h1v1h-1zM265 287h1v1h-1zM393 825h1v1h-1zM223 104h1v1h-1zM222 550h1v1h-1zM68 275h1v1h-1zM510 179h1v1h-1zM710 202h1v1h-1zM567 810h1v1h-1zM58 760h1v1h-1zM240 719h1v1h-1zM574 813h1v1h-1zM455 261h1v1h-1zM315 288h1v1h-1zM689 547h1v1h-1zM572 361h1v1h-1zM161 277h1v1h-1zM832 69h1v1h-1zM376 422h1v1h-1zM421 426h1v1h-1zM633 572h1v1h-1zM75 53h1v1h-1zM545 752h1v1h-1zM706 640h1v1h-1zM434 773h1v1h-1zM718 387h1v1h-1zM124 819h1v1h-1zM201 497h1v1h-1zM112 358h1v1h-1zM770 790h1v1h-1zM244 65h1v1h-1zM317 522h1v1h-1zM435 580h1v1h-1zM554 24h1v1h-1zM352 317h1v1h-1zM192 376h1v1h-1zM74 387h1v1h-1zM252 555h1v1h-1zM197 31h1v1h-1zM628 557h1v1h-1zM778 54h1v1h-1zM15 581h1v1h-1zM763 806h1v1h-1zM505 92h1v1h-1zM16 228h1v1h-1zM387 775h1v1h-1zM699 134h1v1h-1zM507 655h1v1h-1zM648 2h1v1h-1zM151 525h1v1h-1zM592 763h1v1h-1zM500 526h1v1h-1zM155 822h1v1h-1zM1 91h1v1h-1zM654 551h1v1h-1zM555 447h1v1h-1zM376 641h1v1h-1zM457 184h1v1h-1zM272 207h1v1h-1zM338 359h1v1h-1zM522 300h1v1h-1zM450 548h1v1h-1zM622 759h1v1h-1zM362 133h1v1h-1zM3 282h1v1h-1zM146 397h1v1h-1zM44 774h1v1h-1zM595 17h1v1h-1zM135 135h1v1h-1zM302 168h1v1h-1zM514 0h1v1h-1zM99 392h1v1h-1zM212 53h1v1h-1zM787 330h1v1h-1zM756 771h1v1h-1zM169 19h1v1h-1zM523 445h1v1h-1zM566 620h1v1h-1zM812 752h1v1h-1zM804 574h1v1h-1zM580 25h1v1h-1zM91 240h1v1h-1zM143 60h1v1h-1zM769 122h1v1h-1zM215 275h1v1h-1zM520 146h1v1h-1zM109 211h1v1h-1zM619 132h1v1h-1zM39 518h1v1h-1zM737 112h1v1h-1zM373 141h1v1h-1zM109 672h1v1h-1zM736 60h1v1h-1zM291 780h1v1h-1zM723 676h1v1h-1zM627 721h1v1h-1zM627 55h1v1h-1zM679 390h1v1h-1zM421 289h1v1h-1zM636 748h1v1h-1zM456 131h1v1h-1zM525 230h1v1h-1zM635 741h1v1h-1zM100 620h1v1h-1zM725 504h1v1h-1zM583 569h1v1h-1zM431 614h1v1h-1zM174 416h1v1h-1zM132 250h1v1h-1zM647 768h1v1h-1zM512 648h1v1h-1zM356 726h1v1h-1zM372 411h1v1h-1zM274 699h1v1h-1zM149 761h1v1h-1zM514 364h1v1h-1zM418 647h1v1h-1zM113 540h1v1h-1zM489 717h1v1h-1zM619 495h1v1h-1zM800 329h1v1h-1zM423 773h1v1h-1zM203 177h1v1h-1zM231 187h1v1h-1zM624 789h1v1h-1zM617 317h1v1h-1zM742 320h1v1h-1zM119 580h1v1h-1zM651 50h1v1h-1zM414 809h1v1h-1zM394 373h1v1h-1z"/><path fill="#fff" fill-opacity="0.176" d="M462 520h1v1h-1zM644 628h1v1h-1zM669 756h1v1h-1zM60 36h1v1h-1zM451 605h1v1h-1zM701 0h1v1h-1zM429 74h1v1h-1zM776 120h1v1h-1zM816 498h1v1h-1zM698 572h1v1h-1zM458 521h1v1h-1zM749 787h1v1h-1zM20 215h1v1h-1zM43 149h1v1h-1zM76 92h1v1h-1zM596 651h1v1h-1zM187 642h1v1h-1zM318 233h1v1h-1zM742 194h1v1h-1zM757 644h1v1h-1zM300 532h1v1h-1zM737 70h1v1h-1zM286 217h1v1h-1zM543 585h1v1h-1zM94 370h1v1h-1zM461 338h1v1h-1zM754 45h1v1h-1zM492 22h1v1h-1zM308 146h1v1h-1zM681 256h1v1h-1zM649 441h1v1h-1zM219 393h1v1h-1zM597 324h1v1h-1zM787 272h1v1h-1zM79 700h1v1h-1zM797 354h1v1h-1zM402 810h1v1h-1zM474 334h1v1h-1zM499 29h1v1h-1zM819 35h1v1h-1zM545 343h1v1h-1zM746 575h1v1h-1zM586 509h1v1h-1zM502 95h1v1h-1zM36 198h1v1h-1zM542 630h1v1h-1zM551 209h1v1h-1zM542 221h1v1h-1zM199 223h1v1h-1zM99 137h1v1h-1zM445 431h1v1h-1zM514 702h1v1h-1zM150 194h1v1h-1zM117 208h1v1h-1zM593 63h1v1h-1zM415 199h1v1h-1zM583 613h1v1h-1zM286 119h1v1h-1zM785 442h1v1h-1zM415 211h1v1h-1zM27 14h1v1h-1zM599 43h1v1h-1zM75 816h1v1h-1zM256 773h1v1h-1zM466 120h1v1h-1zM53 365h1v1h-1zM372 796h1v1h-1zM297 751h1v1h-1zM281 278h1v1h-1zM648 285h1v1h-1zM194 254h1v1h-1zM692 164h1v1h-1zM490 362h1v1h-1zM828 638h1v1h-1zM399 829h1v1h-1zM297 561h1v1h-1zM289 146h1v1h-1zM469 325h1v1h-1zM409 747h1v1h-1zM598 396h1v1h-1zM816 399h1v1h-1zM605 576h1v1h-1zM86 26h1v1h-1zM251 729h1v1h-1zM430 149h1v1h-1zM663 159h1v1h-1zM111 202h1v1h-1zM367 222h1v1h-1zM609 520h1v1h-1zM50 222h1v1h-1zM806 59h1v1h-1zM460 815h1v1h-1zM730 431h1v1h-1zM148 265h1v1h-1zM154 585h1v1h-1zM1 209h1v1h-1zM19 808h1v1h-1zM800 450h1v1h-1zM538 506h1v1h-1zM368 76h1v1h-1zM818 736h1v1h-1zM262 193h1v1h-1zM134 693h1v1h-1zM349 437h1v1h-1zM662 210h1v1h-1zM807 808h1v1h-1zM266 338h1v1h-1zM626 730h1v1h-1zM626 512h1v1h-1zM587 730h1v1h-1zM528 732h1v1h-1zM580 27h1v1h-1zM795 85h1v1h-1zM747 138h1v1h-1zM573 270h1v1h-1zM763 342h1v1h-1zM701 372h1v1h-1zM184 801h1v1h-1zM479 33h1v1h-1zM583 415h1v1h-1zM344 532h1v1h-1zM738 687h1v1h-1zM607 71h1v1h-1zM127 457h1v1h-1zM672 405h1v1h-1zM559 431h1v1h-1zM100 532h1v1h-1zM0 303h1v1h-1zM144 365h1v1h-1zM332 510h1v1h-1zM709 60h1v1h-1zM16 176h1v1h-1zM545 647h1v1h-1zM280 430h1v1h-1zM425 80h1v1h-1zM727 707h1v1h-1zM275 185h1v1h-1zM604 528h1v1h-1zM308 184h1v1h-1zM168 291h1v1h-1zM190 809h1v1h-1zM517 649h1v1h-1zM608 798h1v1h-1zM805 733h1v1h-1zM265 500h1v1h-1zM267 36h1v1h-1zM586 459h1v1h-1zM117 182h1v1h-1zM90 665h1v1h-1zM387 260h1v1h-1zM478 373h1v1h-1zM720 43h1v1h-1zM501 773h1v1h-1zM35 696h1v1h-1zM472 88h1v1h-1zM755 351h1v1h-1zM473 402h1v1h-1zM252 188h1v1h-1zM457 501h1v1h-1zM524 402h1v1h-1zM140 784h1v1h-1zM309 403h1v1h-1zM500 41h1v1h-1zM154 526h1v1h-1zM557 710h1v1h-1zM682 386h1v1h-1zM529 364h1v1h-1zM353 625h1v1h-1zM720 286h1v1h-1zM162 412h1v1h-1zM486 786h1v1h-1zM359 681h1v1h-1zM432 823h1v1h-1zM268 684h1v1h-1zM31 589h1v1h-1zM39 823h1v1h-1zM484 21h1v1h-1zM233 264h1v1h-1zM19 320h1v1h-1zM712 405h1v1h-1zM196 164h1v1h-1zM242 661h1v1h-1zM370 332h1v1h-1zM526 755h1v1h-1zM187 341h1v1h-1zM656 723h1v1h-1zM820 164h1v1h-1zM236 667h1v1h-1zM14 483h1v1h-1zM395 695h1v1h-1zM555 494h1v1h-1zM691 710h1v1h-1zM559 289h1v1h-1zM443 123h1v1h-1zM579 582h1v1h-1zM280 329h1v1h-1zM82 493h1v1h-1zM572 52h1v1h-1zM143 807h1v1h-1zM570 59h1v1h-1zM180 27h1v1h-1zM9 590h1v1h-1zM342 218h1v1h-1zM216 48h1v1h-1zM559 311h1v1h-1zM97 329h1v1h-1zM418 799h1v1h-1zM537 10h1v1h-1zM659 56h1v1h-1zM429 393h1v1h-1zM113 239h1v1h-1zM664 808h1v1h-1zM286 659h1v1h-1zM37 354h1v1h-1zM674 617h1v1h-1zM711 214h1v1h-1zM784 131h1v1h-1zM70 708h1v1h-1zM285 467h1v1h-1zM688 625h1v1h-1zM23 684h1v1h-1zM671 410h1v1h-1zM530 598h1v1h-1zM509 378h1v1h-1zM69 581h1v1h-1zM301 361h1v1h-1zM477 55h1v1h-1zM603 462h1v1h-1zM140 106h1v1h-1zM147 577h1v1h-1zM423 10h1v1h-1zM336 500h1v1h-1zM669 573h1v1h-1zM54 95h1v1h-1zM87 406h1v1h-1zM324 152h1v1h-1zM631 699h1v1h-1zM451 701h1v1h-1zM331 549h1v1h-1zM442 386h1v1h-1zM107 562h1v1h-1zM366 789h1v1h-1zM386 249h1v1h-1zM498 120h1v1h-1zM695 313h1v1h-1zM341 501h1v1h-1zM252 802h1v1h-1zM123 167h1v1h-1zM258 574h1v1h-1zM812 284h1v1h-1zM399 163h1v1h-1zM624 91h1v1h-1zM798 371h1v1h-1zM353 746h1v1h-1zM579 122h1v1h-1zM447 539h1v1h-1zM627 510h1v1h-1zM142 497h1v1h-1zM154 554h1v1h-1zM173 88h1v1h-1zM424 32h1v1h-1zM401 15h1v1h-1zM465 667h1v1h-1zM424 179h1v1h-1zM462 490h1v1h-1zM802 340h1v1h-1zM587 22h1v1h-1zM757 743h1v1h-1zM690 35h1v1h-1zM701 781h1v1h-1zM424 570h1v1h-1zM138 429h1v1h-1zM346 809h1v1h-1zM66 435h1v1h-1zM146 69h1v1h-1zM163 504h1v1h-1zM326 350h1v1h-1zM43 197h1v1h-1zM138 718h1v1h-1zM314 328h1v1h-1zM94 83h1v1h-1zM778 693h1v1h-1zM476 39h1v1h-1zM166 46h1v1h-1zM410 754h1v1h-1zM20 24h1v1h-1zM476 25h1v1h-1zM350 15h1v1h-1zM170 365h1v1h-1zM238 693h1v1h-1zM63 656h1v1h-1zM819 51h1v1h-1zM201 662h1v1h-1zM683 131h1v1h-1zM829 304h1v1h-1zM659 66h1v1h-1zM725 637h1v1h-1zM654 503h1v1h-1zM40 23h1v1h-1zM511 814h1v1h-1zM484 774h1v1h-1zM220 416h1v1h-1zM629 153h1v1h-1zM586 803h1v1h-1zM412 665h1v1h-1zM47 89h1v1h-1zM756 408h1v1h-1zM687 76h1v1h-1zM825 430h1v1h-1zM559 708h1v1h-1zM706 372h1v1h-1zM673 414h1v1h-1zM807 318h1v1h-1zM228 561h1v1h-1zM179 186h1v1h-1zM427 21h1v1h-1zM426 606h1v1h-1zM693 524h1v1h-1zM708 735h1v1h-1zM454 541h1v1h-1zM92 406h1v1h-1zM594 670h1v1h-1zM76 112h1v1h-1zM596 726h1v1h-1zM70 475h1v1h-1zM690 511h1v1h-1zM12 225h1v1h-1zM618 74h1v1h-1zM192 815h1v1h-1zM352 35h1v1h-1zM396 732h1v1h-1zM67 257h1v1h-1zM151 606h1v1h-1zM511 673h1v1h-1zM555 34h1v1h-1zM606 115h1v1h-1zM293 184h1v1h-1zM205 75h1v1h-1zM680 135h1v1h-1zM716 751h1v1h-1zM191 374h1v1h-1zM555 269h1v1h-1zM66 441h1v1h-1zM820 493h1v1h-1zM551 701h1v1h-1zM801 671h1v1h-1zM128 631h1v1h-1zM423 187h1v1h-1zM100 36h1v1h-1zM30 600h1v1h-1zM436 567h1v1h-1zM615 521h1v1h-1zM100 616h1v1h-1zM376 393h1v1h-1zM172 494h1v1h-1zM135 166h1v1h-1zM580 691h1v1h-1zM481 411h1v1h-1zM46 617h1v1h-1zM314 427h1v1h-1zM813 41h1v1h-1zM690 430h1v1h-1zM521 97h1v1h-1zM78 180h1v1h-1zM621 620h1v1h-1zM574 274h1v1h-1zM582 103h1v1h-1zM651 119h1v1h-1zM515 94h1v1h-1zM420 631h1v1h-1zM685 122h1v1h-1zM116 449h1v1h-1zM356 273h1v1h-1zM422 336h1v1h-1zM109 560h1v1h-1zM676 450h1v1h-1zM580 714h1v1h-1zM318 804h1v1h-1zM344 180h1v1h-1zM454 783h1v1h-1zM543 97h1v1h-1zM336 205h1v1h-1zM73 421h1v1h-1zM160 117h1v1h-1zM548 538h1v1h-1zM811 714h1v1h-1zM613 486h1v1h-1zM384 7h1v1h-1zM576 276h1v1h-1zM254 346h1v1h-1zM537 445h1v1h-1zM753 542h1v1h-1zM724 250h1v1h-1zM668 19h1v1h-1zM759 654h1v1h-1zM150 263h1v1h-1zM473 210h1v1h-1zM250 232h1v1h-1zM226 425h1v1h-1zM686 723h1v1h-1zM749 314h1v1h-1zM615 629h1v1h-1zM790 614h1v1h-1zM347 636h1v1h-1zM291 794h1v1h-1zM56 354h1v1h-1zM547 793h1v1h-1zM619 474h1v1h-1zM265 97h1v1h-1zM680 575h1v1h-1zM493 101h1v1h-1zM336 738h1v1h-1zM736 790h1v1h-1zM375 209h1v1h-1zM63 483h1v1h-1zM226 18h1v1h-1zM249 718h1v1h-1zM238 330h1v1h-1zM250 302h1v1h-1zM52 377h1v1h-1zM244 630h1v1h-1zM450 127h1v1h-1zM493 288h1v1h-1zM737 399h1v1h-1zM140 290h1v1h-1zM658 820h1v1h-1zM534 29h1v1h-1zM191 504h1v1h-1zM324 353h1v1h-1zM484 449h1v1h-1zM787 299h1v1h-1zM692 583h1v1h-1zM737 64h1v1h-1zM566 696h1v1h-1zM441 98h1v1h-1zM162 47h1v1h-1zM826 410h1v1h-1zM590 351h1v1h-1zM190 629h1v1h-1zM269 777h1v1h-1zM264 761h1v1h-1zM563 354h1v1h-1zM789 40h1v1h-1zM195 795h1v1h-1zM643 743h1v1h-1zM618 594h1v1h-1zM170 737h1v1h-1zM680 28h1v1h-1zM694 175h1v1h-1zM207 7h1v1h-1zM677 81h1v1h-1zM536 733h1v1h-1zM482 627h1v1h-1zM537 705h1v1h-1zM562 772h1v1h-1zM752 736h1v1h-1zM531 346h1v1h-1zM605 770h1v1h-1zM157 181h1v1h-1zM174 580h1v1h-1zM6 562h1v1h-1zM163 453h1v1h-1zM213 448h1v1h-1zM650 814h1v1h-1zM410 432h1v1h-1zM574 239h1v1h-1zM30 807h1v1h-1zM502 631h1v1h-1zM689 613h1v1h-1zM229 205h1v1h-1zM93 628h1v1h-1zM200 521h1v1h-1zM695 567h1v1h-1zM455 734h1v1h-1zM804 541h1v1h-1zM131 84h1v1h-1zM307 524h1v1h-1zM413 18h1v1h-1zM756 363h1v1h-1zM404 226h1v1h-1zM767 25h1v1h-1zM69 461h1v1h-1zM20 797h1v1h-1zM819 583h1v1h-1zM537 534h1v1h-1zM229 69h1v1h-1zM204 85h1v1h-1zM676 294h1v1h-1zM651 627h1v1h-1zM439 245h1v1h-1zM551 804h1v1h-1zM814 19h1v1h-1zM657 689h1v1h-1zM757 296h1v1h-1zM582 584h1v1h-1zM234 210h1v1h-1zM697 356h1v1h-1zM377 387h1v1h-1zM248 164h1v1h-1zM270 729h1v1h-1zM647 82h1v1h-1zM682 326h1v1h-1zM703 631h1v1h-1zM637 51h1v1h-1zM385 311h1v1h-1zM26 694h1v1h-1zM81 545h1v1h-1zM692 502h1v1h-1zM540 552h1v1h-1zM269 446h1v1h-1zM750 273h1v1h-1zM488 106h1v1h-1zM460 670h1v1h-1zM721 248h1v1h-1zM173 277h1v1h-1zM111 186h1v1h-1zM471 215h1v1h-1zM179 35h1v1h-1zM423 125h1v1h-1zM718 823h1v1h-1zM36 756h1v1h-1zM384 751h1v1h-1zM601 448h1v1h-1zM634 678h1v1h-1zM328 56h1v1h-1zM131 228h1v1h-1zM264 383h1v1h-1zM641 141h1v1h-1zM314 389h1v1h-1zM476 807h1v1h-1zM519 74h1v1h-1zM649 488h1v1h-1zM485 431h1v1h-1zM242 609h1v1h-1zM71 323h1v1h-1zM407 520h1v1h-1zM186 626h1v1h-1zM655 645h1v1h-1zM618 196h1v1h-1zM612 28h1v1h-1zM308 825h1v1h-1zM787 68h1v1h-1zM144 758h1v1h-1zM359 826h1v1h-1zM327 213h1v1h-1zM628 627h1v1h-1zM824 73h1v1h-1zM606 796h1v1h-1zM608 497h1v1h-1zM156 810h1v1h-1zM307 103h1v1h-1zM519 84h1v1h-1zM37 807h1v1h-1zM649 618h1v1h-1zM192 770h1v1h-1zM694 140h1v1h-1zM429 589h1v1h-1zM117 274h1v1h-1zM635 413h1v1h-1zM777 358h1v1h-1zM695 185h1v1h-1zM702 10h1v1h-1zM326 60h1v1h-1zM225 768h1v1h-1zM68 594h1v1h-1zM285 183h1v1h-1zM403 627h1v1h-1zM818 490h1v1h-1zM592 637h1v1h-1zM814 268h1v1h-1zM364 600h1v1h-1zM375 801h1v1h-1zM69 583h1v1h-1zM722 318h1v1h-1zM509 198h1v1h-1zM658 510h1v1h-1zM364 78h1v1h-1zM182 518h1v1h-1zM731 351h1v1h-1zM236 325h1v1h-1zM552 278h1v1h-1zM566 635h1v1h-1zM337 64h1v1h-1zM168 378h1v1h-1zM796 478h1v1h-1zM519 509h1v1h-1zM759 415h1v1h-1zM231 656h1v1h-1zM250 15h1v1h-1zM211 222h1v1h-1zM724 764h1v1h-1zM168 742h1v1h-1zM673 383h1v1h-1zM36 473h1v1h-1zM197 448h1v1h-1zM15 278h1v1h-1zM513 755h1v1h-1zM554 696h1v1h-1zM801 240h1v1h-1zM515 297h1v1h-1zM169 346h1v1h-1zM330 562h1v1h-1zM335 320h1v1h-1zM354 786h1v1h-1zM816 258h1v1h-1zM656 39h1v1h-1zM755 66h1v1h-1zM354 298h1v1h-1zM549 523h1v1h-1zM697 84h1v1h-1zM514 209h1v1h-1zM56 544h1v1h-1zM361 265h1v1h-1zM590 587h1v1h-1zM422 177h1v1h-1zM560 60h1v1h-1zM69 441h1v1h-1zM527 398h1v1h-1zM764 777h1v1h-1zM166 89h1v1h-1zM705 743h1v1h-1zM789 683h1v1h-1zM751 616h1v1h-1zM239 57h1v1h-1zM749 8h1v1h-1zM776 329h1v1h-1zM815 150h1v1h-1zM30 542h1v1h-1zM517 808h1v1h-1zM258 136h1v1h-1zM320 678h1v1h-1zM473 223h1v1h-1zM39 616h1v1h-1zM346 251h1v1h-1zM766 16h1v1h-1zM425 737h1v1h-1zM801 686h1v1h-1zM439 417h1v1h-1zM771 600h1v1h-1zM164 181h1v1h-1zM652 639h1v1h-1zM192 46h1v1h-1zM373 389h1v1h-1zM376 18h1v1h-1zM119 397h1v1h-1zM122 267h1v1h-1zM63 169h1v1h-1zM218 550h1v1h-1zM687 753h1v1h-1zM371 192h1v1h-1zM186 771h1v1h-1zM342 70h1v1h-1zM496 53h1v1h-1zM820 762h1v1h-1zM251 643h1v1h-1zM727 153h1v1h-1zM490 73h1v1h-1zM650 666h1v1h-1zM198 170h1v1h-1zM647 644h1v1h-1zM700 492h1v1h-1zM170 153h1v1h-1zM116 405h1v1h-1zM108 477h1v1h-1zM395 560h1v1h-1zM286 261h1v1h-1zM414 418h1v1h-1zM106 646h1v1h-1zM193 577h1v1h-1zM694 743h1v1h-1zM630 759h1v1h-1zM670 409h1v1h-1zM482 216h1v1h-1zM285 77h1v1h-1zM566 704h1v1h-1zM25 607h1v1h-1zM349 562h1v1h-1zM438 327h1v1h-1zM361 438h1v1h-1zM788 39h1v1h-1zM77 760h1v1h-1zM180 241h1v1h-1zM637 721h1v1h-1zM609 339h1v1h-1zM455 244h1v1h-1zM80 275h1v1h-1zM754 713h1v1h-1zM825 526h1v1h-1zM363 682h1v1h-1zM139 515h1v1h-1zM353 714h1v1h-1zM279 448h1v1h-1zM695 181h1v1h-1zM329 417h1v1h-1zM477 805h1v1h-1zM45 21h1v1h-1zM423 101h1v1h-1zM500 565h1v1h-1zM138 268h1v1h-1zM154 746h1v1h-1zM461 46h1v1h-1zM132 388h1v1h-1zM747 350h1v1h-1zM201 247h1v1h-1zM526 322h1v1h-1zM552 459h1v1h-1zM278 669h1v1h-1zM62 95h1v1h-1zM564 45h1v1h-1zM3 239h1v1h-1zM493 35h1v1h-1zM719 114h1v1h-1zM796 262h1v1h-1zM805 77h1v1h-1zM470 334h1v1h-1zM598 50h1v1h-1zM488 227h1v1h-1zM424 314h1v1h-1zM784 462h1v1h-1zM276 290h1v1h-1zM555 747h1v1h-1zM559 818h1v1h-1zM527 726h1v1h-1zM123 86h1v1h-1zM484 434h1v1h-1zM222 256h1v1h-1zM253 738h1v1h-1zM178 111h1v1h-1zM55 124h1v1h-1zM243 581h1v1h-1zM790 794h1v1h-1zM27 40h1v1h-1zM649 541h1v1h-1zM350 249h1v1h-1zM152 172h1v1h-1zM727 749h1v1h-1zM698 26h1v1h-1zM49 204h1v1h-1zM173 825h1v1h-1zM355 422h1v1h-1zM436 191h1v1h-1zM626 133h1v1h-1zM663 545h1v1h-1zM97 689h1v1h-1zM751 576h1v1h-1zM478 730h1v1h-1zM8 484h1v1h-1zM173 596h1v1h-1zM62 498h1v1h-1zM662 48h1v1h-1zM799 809h1v1h-1zM405 396h1v1h-1zM812 490h1v1h-1zM387 617h1v1h-1zM734 151h1v1h-1zM411 831h1v1h-1zM489 16h1v1h-1zM458 101h1v1h-1zM503 192h1v1h-1zM332 655h1v1h-1zM776 527h1v1h-1zM673 319h1v1h-1zM287 5h1v1h-1zM771 477h1v1h-1zM699 296h1v1h-1zM542 327h1v1h-1zM318 608h1v1h-1zM107 273h1v1h-1zM226 589h1v1h-1zM245 76h1v1h-1zM339 753h1v1h-1zM785 360h1v1h-1zM196 384h1v1h-1zM374 168h1v1h-1zM384 493h1v1h-1zM611 750h1v1h-1zM541 482h1v1h-1zM802 226h1v1h-1zM91 27h1v1h-1zM604 287h1v1h-1zM159 274h1v1h-1zM3 514h1v1h-1zM122 684h1v1h-1zM543 75h1v1h-1zM793 163h1v1h-1zM753 432h1v1h-1zM662 754h1v1h-1zM566 326h1v1h-1zM81 187h1v1h-1zM374 220h1v1h-1zM605 36h1v1h-1zM69 258h1v1h-1zM760 374h1v1h-1zM248 588h1v1h-1zM787 180h1v1h-1zM173 2h1v1h-1zM768 298h1v1h-1zM148 17h1v1h-1zM714 220h1v1h-1zM185 406h1v1h-1zM561 608h1v1h-1zM770 59h1v1h-1zM256 672h1v1h-1zM198 406h1v1h-1zM215 347h1v1h-1zM776 355h1v1h-1zM408 217h1v1h-1zM211 247h1v1h-1zM592 81h1v1h-1zM313 782h1v1h-1zM344 310h1v1h-1zM568 9h1v1h-1zM480 214h1v1h-1zM656 325h1v1h-1zM497 583h1v1h-1zM752 342h1v1h-1zM125 668h1v1h-1zM764 211h1v1h-1zM517 563h1v1h-1zM580 570h1v1h-1zM550 399h1v1h-1zM193 753h1v1h-1zM714 308h1v1h-1zM208 706h1v1h-1zM179 160h1v1h-1zM143 505h1v1h-1zM56 413h1v1h-1zM508 480h1v1h-1zM87 789h1v1h-1zM553 781h1v1h-1zM760 431h1v1h-1zM88 687h1v1h-1zM777 75h1v1h-1zM456 428h1v1h-1zM338 277h1v1h-1zM466 599h1v1h-1zM619 164h1v1h-1zM794 572h1v1h-1zM113 446h1v1h-1zM214 712h1v1h-1zM285 541h1v1h-1zM442 668h1v1h-1zM212 60h1v1h-1zM545 554h1v1h-1zM740 632h1v1h-1zM482 824h1v1h-1zM134 180h1v1h-1zM629 638h1v1h-1zM606 280h1v1h-1zM742 603h1v1h-1zM309 145h1v1h-1zM507 4h1v1h-1zM589 650h1v1h-1zM313 377h1v1h-1zM22 156h1v1h-1zM806 712h1v1h-1zM582 161h1v1h-1zM211 357h1v1h-1zM268 644h1v1h-1zM250 775h1v1h-1zM119 18h1v1h-1zM684 303h1v1h-1zM276 247h1v1h-1zM788 197h1v1h-1zM495 177h1v1h-1zM694 147h1v1h-1zM659 490h1v1h-1zM196 509h1v1h-1zM385 455h1v1h-1zM436 232h1v1h-1zM410 398h1v1h-1zM687 310h1v1h-1zM352 612h1v1h-1zM150 664h1v1h-1zM446 319h1v1h-1zM326 692h1v1h-1zM366 358h1v1h-1zM436 491h1v1h-1zM801 268h1v1h-1zM634 287h1v1h-1zM287 162h1v1h-1zM806 589h1v1h-1zM791 118h1v1h-1zM312 699h1v1h-1zM770 670h1v1h-1zM50 348h1v1h-1zM316 426h1v1h-1zM532 782h1v1h-1zM490 799h1v1h-1zM650 264h1v1h-1zM363 227h1v1h-1zM284 783h1v1h-1z"/><path fill="#fff" fill-opacity="0.235" d="M96 457h1v1h-1zM796 475h1v1h-1zM531 239h1v1h-1zM468 670h1v1h-1zM724 260h1v1h-1zM776 235h1v1h-1zM410 110h1v1h-1zM797 691h1v1h-1zM344 89h1v1h-1zM217 0h1v1h-1zM822 606h1v1h-1zM791 624h1v1h-1zM15 615h1v1h-1zM39 524h1v1h-1zM180 288h1v1h-1zM486 366h1v1h-1zM493 68h1v1h-1zM77 463h1v1h-1zM812 349h1v1h-1zM263 426h1v1h-1zM261 11h1v1h-1zM530 173h1v1h-1zM461 482h1v1h-1zM694 725h1v1h-1zM584 362h1v1h-1zM111 645h1v1h-1zM204 486h1v1h-1zM183 231h1v1h-1zM385 563h1v1h-1zM89 317h1v1h-1zM38 451h1v1h-1zM563 431h1v1h-1zM539 572h1v1h-1zM535 526h1v1h-1zM624 213h1v1h-1zM144 557h1v1h-1zM504 130h1v1h-1zM444 487h1v1h-1zM632 30h1v1h-1zM232 12h1v1h-1zM329 740h1v1h-1zM522 638h1v1h-1zM238 758h1v1h-1zM185 323h1v1h-1zM98 205h1v1h-1zM369 118h1v1h-1zM783 99h1v1h-1zM215 615h1v1h-1zM464 368h1v1h-1zM516 598h1v1h-1zM824 780h1v1h-1zM415 136h1v1h-1zM551 711h1v1h-1zM72 816h1v1h-1zM237 279h1v1h-1zM756 242h1v1h-1zM11 100h1v1h-1zM256 282h1v1h-1zM612 319h1v1h-1zM670 276h1v1h-1zM679 733h1v1h-1zM51 595h1v1h-1zM466 615h1v1h-1zM515 316h1v1h-1zM9 277h1v1h-1zM104 227h1v1h-1zM455 434h1v1h-1zM377 157h1v1h-1zM437 669h1v1h-1zM701 474h1v1h-1zM742 782h1v1h-1zM366 673h1v1h-1zM375 120h1v1h-1zM726 451h1v1h-1zM448 542h1v1h-1zM86 370h1v1h-1zM756 577h1v1h-1zM557 162h1v1h-1zM65 595h1v1h-1zM342 83h1v1h-1zM754 107h1v1h-1zM500 783h1v1h-1zM358 345h1v1h-1zM420 775h1v1h-1zM700 171h1v1h-1zM541 299h1v1h-1zM60 482h1v1h-1zM748 117h1v1h-1zM819 37h1v1h-1zM452 189h1v1h-1zM412 176h1v1h-1zM540 813h1v1h-1zM11 483h1v1h-1zM425 160h1v1h-1zM652 759h1v1h-1zM131 84h1v1h-1zM84 766h1v1h-1zM318 323h1v1h-1zM415 77h1v1h-1zM630 155h1v1h-1zM642 385h1v1h-1zM337 317h1v1h-1zM576 481h1v1h-1zM744 410h1v1h-1zM209 521h1v1h-1zM259 784h1v1h-1zM561 239h1v1h-1zM713 341h1v1h-1zM93 369h1v1h-1zM125 3h1v1h-1zM776 587h1v1h-1zM269 249h1v1h-1zM430 24h1v1h-1zM749 385h1v1h-1zM769 808h1v1h-1zM538 244h1v1h-1zM70 748h1v1h-1zM465 321h1v1h-1zM211 207h1v1h-1zM313 743h1v1h-1zM513 680h1v1h-1zM809 279h1v1h-1zM7 614h1v1h-1zM251 183h1v1h-1zM184 65h1v1h-1zM801 32h1v1h-1zM560 791h1v1h-1zM515 452h1v1h-1zM712 321h1v1h-1zM402 569h1v1h-1zM372 316h1v1h-1zM220 428h1v1h-1zM707 283h1v1h-1zM531 186h1v1h-1zM275 105h1v1h-1zM58 157h1v1h-1zM85 390h1v1h-1zM32 213h1v1h-1zM529 723h1v1h-1zM105 299h1v1h-1zM579 11h1v1h-1zM221 571h1v1h-1zM682 125h1v1h-1zM240 802h1v1h-1zM532 95h1v1h-1zM489 596h1v1h-1zM718 566h1v1h-1zM386 507h1v1h-1zM480 736h1v1h-1zM36 355h1v1h-1zM382 579h1v1h-1zM630 349h1v1h-1zM699 519h1v1h-1zM316 506h1v1h-1zM619 197h1v1h-1zM639 574h1v1h-1zM824 577h1v1h-1zM378 424h1v1h-1zM493 54h1v1h-1zM259 733h1v1h-1zM376 732h1v1h-1zM637 758h1v1h-1zM205 385h1v1h-1zM274 704h1v1h-1zM43 198h1v1h-1zM382 68h1v1h-1zM449 819h1v1h-1zM331 19h1v1h-1zM374 564h1v1h-1zM65 7h1v1h-1zM563 631h1v1h-1zM283 193h1v1h-1zM771 569h1v1h-1zM373 11h1v1h-1zM741 378h1v1h-1zM362 319h1v1h-1zM68 669h1v1h-1zM608 96h1v1h-1zM159 146h1v1h-1zM21 178h1v1h-1zM693 399h1v1h-1zM187 796h1v1h-1zM631 631h1v1h-1zM608 55h1v1h-1zM336 262h1v1h-1zM523 257h1v1h-1zM728 350h1v1h-1zM530 826h1v1h-1zM815 155h1v1h-1zM182 102h1v1h-1zM664 211h1v1h-1zM387 15h1v1h-1zM716 322h1v1h-1zM42 132h1v1h-1zM118 264h1v1h-1zM624 637h1v1h-1zM753 734h1v1h-1zM291 126h1v1h-1zM655 65h1v1h-1zM429 341h1v1h-1zM598 451h1v1h-1zM15 421h1v1h-1zM135 607h1v1h-1zM397 430h1v1h-1zM383 30h1v1h-1zM480 74h1v1h-1zM174 475h1v1h-1zM3 170h1v1h-1zM521 524h1v1h-1zM399 426h1v1h-1zM80 219h1v1h-1zM403 640h1v1h-1zM273 757h1v1h-1zM750 9h1v1h-1zM7 704h1v1h-1zM252 374h1v1h-1zM120 528h1v1h-1zM258 603h1v1h-1zM807 292h1v1h-1zM565 141h1v1h-1zM126 158h1v1h-1zM791 599h1v1h-1zM206 15h1v1h-1zM167 667h1v1h-1zM239 647h1v1h-1zM588 46h1v1h-1zM65 821h1v1h-1zM35 715h1v1h-1zM457 783h1v1h-1zM223 204h1v1h-1zM596 172h1v1h-1zM705 332h1v1h-1zM111 806h1v1h-1zM622 744h1v1h-1zM113 255h1v1h-1zM20 176h1v1h-1zM683 300h1v1h-1zM279 29h1v1h-1zM547 768h1v1h-1zM492 463h1v1h-1zM655 517h1v1h-1zM579 744h1v1h-1zM376 316h1v1h-1zM88 539h1v1h-1zM138 307h1v1h-1zM343 224h1v1h-1zM623 501h1v1h-1zM237 417h1v1h-1zM343 224h1v1h-1zM268 48h1v1h-1zM538 740h1v1h-1zM533 691h1v1h-1zM153 216h1v1h-1zM243 694h1v1h-1zM609 535h1v1h-1zM308 521h1v1h-1zM379 685h1v1h-1zM139 145h1v1h-1zM189 742h1v1h-1zM596 125h1v1h-1zM780 822h1v1h-1zM16 78h1v1h-1zM556 53h1v1h-1zM311 42h1v1h-1zM266 633h1v1h-1zM704 484h1v1h-1zM638 760h1v1h-1zM479 521h1v1h-1zM783 175h1v1h-1zM161 718h1v1h-1zM57 92h1v1h-1zM51 86h1v1h-1zM155 297h1v1h-1zM681 515h1v1h-1zM706 456h1v1h-1zM816 746h1v1h-1zM120 487h1v1h-1zM828 23h1v1h-1zM112 265h1v1h-1zM399 318h1v1h-1zM190 625h1v1h-1zM393 728h1v1h-1zM323 477h1v1h-1zM27 297h1v1h-1zM341 111h1v1h-1zM295 204h1v1h-1zM247 444h1v1h-1zM407 71h1v1h-1zM53 363h1v1h-1zM780 644h1v1h-1zM564 279h1v1h-1zM486 198h1v1h-1zM445 217h1v1h-1zM552 600h1v1h-1zM17 426h1v1h-1zM784 436h1v1h-1zM226 407h1v1h-1zM68 604h1v1h-1zM139 770h1v1h-1zM281 775h1v1h-1zM540 507h1v1h-1zM679 499h1v1h-1zM583 23h1v1h-1zM77 9h1v1h-1zM389 722h1v1h-1zM756 195h1v1h-1zM681 298h1v1h-1zM216 639h1v1h-1zM716 329h1v1h-1zM452 831h1v1h-1zM623 517h1v1h-1zM616 634h1v1h-1zM153 662h1v1h-1zM484 363h1v1h-1zM221 788h1v1h-1zM231 490h1v1h-1zM683 156h1v1h-1zM55 478h1v1h-1zM364 255h1v1h-1zM3 254h1v1h-1zM16 372h1v1h-1zM423 399h1v1h-1zM291 22h1v1h-1zM635 467h1v1h-1zM534 195h1v1h-1zM527 569h1v1h-1zM39 296h1v1h-1zM457 667h1v1h-1zM780 318h1v1h-1zM652 188h1v1h-1zM660 329h1v1h-1zM759 188h1v1h-1zM700 44h1v1h-1zM392 672h1v1h-1zM245 605h1v1h-1zM124 543h1v1h-1zM368 623h1v1h-1zM763 167h1v1h-1zM739 52h1v1h-1zM68 151h1v1h-1zM198 825h1v1h-1zM296 554h1v1h-1zM392 819h1v1h-1zM270 291h1v1h-1zM643 402h1v1h-1zM700 370h1v1h-1zM239 494h1v1h-1zM585 147h1v1h-1zM444 643h1v1h-1zM683 30h1v1h-1zM389 570h1v1h-1zM642 336h1v1h-1zM688 431h1v1h-1zM586 689h1v1h-1zM661 59h1v1h-1zM470 692h1v1h-1zM65 164h1v1h-1zM131 95h1v1h-1zM123 381h1v1h-1zM55 693h1v1h-1zM293 454h1v1h-1zM551 134h1v1h-1zM811 746h1v1h-1zM698 491h1v1h-1zM665 302h1v1h-1zM288 49h1v1h-1zM566 38h1v1h-1zM481 506h1v1h-1zM632 184h1v1h-1zM143 559h1v1h-1zM254 175h1v1h-1zM172 609h1v1h-1zM777 248h1v1h-1zM373 203h1v1h-1zM416 242h1v1h-1zM420 800h1v1h-1zM126 662h1v1h-1zM360 476h1v1h-1zM257 393h1v1h-1zM206 819h1v1h-1zM434 825h1v1h-1zM30 214h1v1h-1zM613 499h1v1h-1zM448 362h1v1h-1zM306 324h1v1h-1zM135 796h1v1h-1zM164 796h1v1h-1zM476 172h1v1h-1zM643 797h1v1h-1zM485 130h1v1h-1zM92 246h1v1h-1zM663 737h1v1h-1zM479 795h1v1h-1zM812 466h1v1h-1zM684 229h1v1h-1zM30 83h1v1h-1zM462 500h1v1h-1zM305 615h1v1h-1zM124 469h1v1h-1zM452 77h1v1h-1zM51 302h1v1h-1zM413 748h1v1h-1zM314 422h1v1h-1zM578 551h1v1h-1zM690 46h1v1h-1zM7 303h1v1h-1zM115 753h1v1h-1zM441 7h1v1h-1zM709 795h1v1h-1zM620 720h1v1h-1zM672 301h1v1h-1zM131 764h1v1h-1zM785 521h1v1h-1zM537 617h1v1h-1zM691 204h1v1h-1zM710 445h1v1h-1zM362 85h1v1h-1zM654 73h1v1h-1zM626 374h1v1h-1zM63 4h1v1h-1zM725 11h1v1h-1zM707 99h1v1h-1zM590 543h1v1h-1zM704 298h1v1h-1zM500 536h1v1h-1zM714 547h1v1h-1zM66 417h1v1h-1zM392 320h1v1h-1zM621 437h1v1h-1zM763 733h1v1h-1zM459 716h1v1h-1zM718 424h1v1h-1zM423 527h1v1h-1zM294 704h1v1h-1zM50 722h1v1h-1zM636 399h1v1h-1zM376 561h1v1h-1zM68 174h1v1h-1zM362 84h1v1h-1zM98 367h1v1h-1zM101 827h1v1h-1zM590 402h1v1h-1zM566 91h1v1h-1zM24 608h1v1h-1zM787 278h1v1h-1zM23 204h1v1h-1zM605 68h1v1h-1zM662 15h1v1h-1zM765 541h1v1h-1zM745 621h1v1h-1zM772 478h1v1h-1zM637 237h1v1h-1zM102 388h1v1h-1zM139 824h1v1h-1zM319 108h1v1h-1zM710 233h1v1h-1zM599 306h1v1h-1zM295 315h1v1h-1zM122 17h1v1h-1zM759 497h1v1h-1zM683 573h1v1h-1zM523 635h1v1h-1zM167 364h1v1h-1zM331 192h1v1h-1zM432 358h1v1h-1zM242 634h1v1h-1zM700 262h1v1h-1zM539 54h1v1h-1zM20 169h1v1h-1zM486 381h1v1h-1zM56 191h1v1h-1zM232 11h1v1h-1zM768 32h1v1h-1zM189 639h1v1h-1zM290 7h1v1h-1zM504 408h1v1h-1zM127 414h1v1h-1zM704 417h1v1h-1zM70 537h1v1h-1zM400 224h1v1h-1zM469 749h1v1h-1zM532 802h1v1h-1zM503 503h1v1h-1zM570 309h1v1h-1zM420 472h1v1h-1zM562 446h1v1h-1zM528 667h1v1h-1zM321 213h1v1h-1zM76 78h1v1h-1zM70 305h1v1h-1zM230 507h1v1h-1zM612 564h1v1h-1zM152 766h1v1h-1zM143 623h1v1h-1zM674 334h1v1h-1zM342 310h1v1h-1zM297 814h1v1h-1zM722 507h1v1h-1zM70 28h1v1h-1zM248 278h1v1h-1zM340 356h1v1h-1zM186 429h1v1h-1zM712 117h1v1h-1zM304 446h1v1h-1zM490 330h1v1h-1zM245 800h1v1h-1zM533 769h1v1h-1zM99 668h1v1h-1zM487 787h1v1h-1zM421 183h1v1h-1zM190 171h1v1h-1zM682 216h1v1h-1zM764 716h1v1h-1zM119 187h1v1h-1zM10 176h1v1h-1zM780 448h1v1h-1zM183 652h1v1h-1zM221 281h1v1h-1zM805 64h1v1h-1zM473 24h1v1h-1zM535 88h1v1h-1zM584 494h1v1h-1zM375 491h1v1h-1zM818 645h1v1h-1zM811 326h1v1h-1zM4 272h1v1h-1zM348 383h1v1h-1zM389 330h1v1h-1zM463 82h1v1h-1zM484 58h1v1h-1zM645 790h1v1h-1zM408 151h1v1h-1zM806 143h1v1h-1zM433 641h1v1h-1zM147 14h1v1h-1zM506 597h1v1h-1zM494 182h1v1h-1zM809 317h1v1h-1zM260 58h1v1h-1zM662 149h1v1h-1zM369 184h1v1h-1zM361 770h1v1h-1zM796 116h1v1h-1zM546 375h1v1h-1zM513 591h1v1h-1zM226 731h1v1h-1zM517 642h1v1h-1zM708 445h1v1h-1zM68 58h1v1h-1zM771 498h1v1h-1zM515 313h1v1h-1zM534 96h1v1h-1zM757 281h1v1h-1zM292 265h1v1h-1zM24 765h1v1h-1zM92 62h1v1h-1zM186 424h1v1h-1zM526 630h1v1h-1zM669 409h1v1h-1zM245 755h1v1h-1zM221 595h1v1h-1zM419 457h1v1h-1zM297 28h1v1h-1zM28 202h1v1h-1zM223 243h1v1h-1zM57 27h1v1h-1zM187 438h1v1h-1zM6 329h1v1h-1zM307 450h1v1h-1zM98 128h1v1h-1zM754 787h1v1h-1zM39 212h1v1h-1zM697 305h1v1h-1zM179 357h1v1h-1zM63 269h1v1h-1zM514 386h1v1h-1zM133 494h1v1h-1zM704 320h1v1h-1zM305 799h1v1h-1zM730 790h1v1h-1zM417 53h1v1h-1zM549 210h1v1h-1zM50 81h1v1h-1zM813 812h1v1h-1zM442 729h1v1h-1zM789 300h1v1h-1zM400 608h1v1h-1zM614 647h1v1h-1zM362 150h1v1h-1zM243 747h1v1h-1zM29 717h1v1h-1zM495 550h1v1h-1zM399 258h1v1h-1zM298 232h1v1h-1zM799 532h1v1h-1zM82 751h1v1h-1zM229 458h1v1h-1zM114 327h1v1h-1zM706 116h1v1h-1zM194 190h1v1h-1zM59 19h1v1h-1zM505 830h1v1h-1zM164 23h1v1h-1zM226 245h1v1h-1zM686 470h1v1h-1zM568 475h1v1h-1zM465 715h1v1h-1zM267 460h1v1h-1zM505 419h1v1h-1zM208 507h1v1h-1zM753 779h1v1h-1zM379 564h1v1h-1zM678 231h1v1h-1zM626 403h1v1h-1zM819 556h1v1h-1zM368 570h1v1h-1zM97 544h1v1h-1zM171 564h1v1h-1zM287 464h1v1h-1zM81 622h1v1h-1zM309 654h1v1h-1zM829 632h1v1h-1zM359 257h1v1h-1zM251 669h1v1h-1zM677 599h1v1h-1zM682 275h1v1h-1zM32 507h1v1h-1zM275 511h1v1h-1zM673 757h1v1h-1zM243 741h1v1h-1zM783 546h1v1h-1zM480 142h1v1h-1zM59 246h1v1h-1zM362 627h1v1h-1zM584 752h1v1h-1zM809 670h1v1h-1zM485 576h1v1h-1zM15 651h1v1h-1zM281 315h1v1h-1zM346 787h1v1h-1zM290 123h1v1h-1zM494 219h1v1h-1zM441 559h1v1h-1zM576 705h1v1h-1zM276 455h1v1h-1zM780 78h1v1h-1zM97 606h1v1h-1zM324 278h1v1h-1zM704 240h1v1h-1zM802 658h1v1h-1zM281 538h1v1h-1zM193 824h1v1h-1zM619 548h1v1h-1zM817 385h1v1h-1zM418 156h1v1h-1zM170 117h1v1h-1zM566 563h1v1h-1zM703 58h1v1h-1zM625 374h1v1h-1zM350 528h1v1h-1zM421 751h1v1h-1zM207 434h1v1h-1zM743 462h1v1h-1zM832 546h1v1h-1zM627 738h1v1h-1zM513 32h1v1h-1zM331 594h1v1h-1zM371 588h1v1h-1zM251 595h1v1h-1zM63 24h1v1h-1zM414 813h1v1h-1zM756 773h1v1h-1zM636 37h1v1h-1zM54 48h1v1h-1zM793 830h1v1h-1zM216 382h1v1h-1zM320 714h1v1h-1zM439 614h1v1h-1zM651 656h1v1h-1zM741 520h1v1h-1zM454 610h1v1h-1zM829 528h1v1h-1zM84 340h1v1h-1zM135 42h1v1h-1zM646 371h1v1h-1zM181 389h1v1h-1zM133 236h1v1h-1zM727 218h1v1h-1zM180 311h1v1h-1zM472 368h1v1h-1zM309 522h1v1h-1zM552 21h1v1h-1zM137 225h1v1h-1zM75 828h1v1h-1zM587 812h1v1h-1zM390 347h1v1h-1zM207 687h1v1h-1zM146 304h1v1h-1zM606 322h1v1h-1zM19 355h1v1h-1zM538 257h1v1h-1zM627 332h1v1h-1zM47 215h1v1h-1zM698 526h1v1h-1zM692 177h1v1h-1zM368 830h1v1h-1zM660 736h1v1h-1zM133 46h1v1h-1zM652 666h1v1h-1zM390 167h1v1h-1zM792 534h1v1h-1zM672 181h1v1h-1zM448 306h1v1h-1zM337 146h1v1h-1zM806 545h1v1h-1zM538 277h1v1h-1zM17 191h1v1h-1zM118 684h1v1h-1zM30 824h1v1h-1zM174 733h1v1h-1zM371 262h1v1h-1zM322 44h1v1h-1zM472 64h1v1h-1zM85 485h1v1h-1zM376 239h1v1h-1zM41 219h1v1h-1zM188 817h1v1h-1zM7 409h1v1h-1zM641 184h1v1h-1zM374 811h1v1h-1zM287 43h1v1h-1zM121 721h1v1h-1zM718 68h1v1h-1zM719 607h1v1h-1zM506 296h1v1h-1zM269 820h1v1h-1zM501 250h1v1h-1zM92 190h1v1h-1zM128 783h1v1h-1zM687 6h1v1h-1zM322 222h1v1h-1zM546 278h1v1h-1zM382 30h1v1h-1zM722 511h1v1h-1zM78 705h1v1h-1zM531 150h1v1h-1zM243 374h1v1h-1zM137 758h1v1h-1zM568 241h1v1h-1zM671 816h1v1h-1zM238 362h1v1h-1zM720 201h1v1h-1zM653 399h1v1h-1zM664 359h1v1h-1zM685 324h1v1h-1zM89 495h1v1h-1zM35 481h1v1h-1zM652 611h1v1h-1zM318 527h1v1h-1zM151 309h1v1h-1zM745 117h1v1h-1zM408 675h1v1h-1zM126 194h1v1h-1zM560 684h1v1h-1zM76 278h1v1h-1zM198 706h1v1h-1zM73 502h1v1h-1zM496 656h1v1h-1zM9 98h1v1h-1zM592 386h1v1h-1zM560 623h1v1h-1zM218 407h1v1h-1zM208 278h1v1h-1zM305 814h1v1h-1zM576 761h1v1h-1zM638 802h1v1h-1zM284 607h1v1h-1zM664 820h1v1h-1zM790 449h1v1h-1zM190 477h1v1h-1zM823 615h1v1h-1zM762 652h1v1h-1zM708 791h1v1h-1zM394 509h1v1h-1zM80 390h1v1h-1zM570 553h1v1h-1zM192 477h1v1h-1zM209 353h1v1h-1zM5 328h1v1h-1zM465 116h1v1h-1zM99 416h1v1h-1zM83 248h1v1h-1zM122 78h1v1h-1zM293 581h1v1h-1zM136 556h1v1h-1zM675 788h1v1h-1zM417 339h1v1h-1zM470 51h1v1h-1zM822 54h1v1h-1zM558 592h1v1h-1zM278 625h1v1h-1zM175 562h1v1h-1zM130 722h1v1h-1zM439 450h1v1h-1zM56 216h1v1h-1zM627 182h1v1h-1zM446 84h1v1h-1zM740 677h1v1h-1zM296 367h1v1h-1zM42 799h1v1h-1zM340 263h1v1h-1zM96 775h1v1h-1zM647 692h1v1h-1zM116 157h1v1h-1zM118 9h1v1h-1zM280 371h1v1h-1zM29 343h1v1h-1zM296 257h1v1h-1zM636 217h1v1h-1zM10 603h1v1h-1zM723 636h1v1h-1zM478 566h1v1h-1zM163 445h1v1h-1zM691 133h1v1h-1zM424 562h1v1h-1zM33 390h1v1h-1zM367 576h1v1h-1zM821 204h1v1h-1zM126 10h1v1h-1zM49 674h1v1h-1zM8 66h1v1h-1zM615 387h1v1h-1zM243 141h1v1h-1zM515 754h1v1h-1zM655 481h1v1h-1zM420 442h1v1h-1zM216 651h1v1h-1zM343 705h1v1h-1zM564 429h1v1h-1zM131 347h1v1h-1zM38 820h1v1h-1zM598 201h1v1h-1zM121 819h1v1h-1zM514 740h1v1h-1zM195 272h1v1h-1zM135 38h1v1h-1zM420 88h1v1h-1zM639 592h1v1h-1zM320 268h1v1h-1zM794 163h1v1h-1zM457 483h1v1h-1zM207 530h1v1h-1zM458 196h1v1h-1zM721 47h1v1h-1zM336 517h1v1h-1zM766 150h1v1h-1zM371 374h1v1h-1zM398 547h1v1h-1zM80 30h1v1h-1zM369 700h1v1h-1zM181 799h1v1h-1zM197 462h1v1h-1zM347 77h1v1h-1zM16 272h1v1h-1zM726 561h1v1h-1zM796 303h1v1h-1zM464 141h1v1h-1zM152 537h1v1h-1zM14 394h1v1h-1zM251 572h1v1h-1zM358 807h1v1h-1zM490 174h1v1h-1zM176 346h1v1h-1zM72 769h1v1h-1zM435 427h1v1h-1zM702 613h1v1h-1zM690 284h1v1h-1zM606 604h1v1h-1zM558 773h1v1h-1zM385 368h1v1h-1zM502 120h1v1h-1zM824 794h1v1h-1zM542 27h1v1h-1zM632 552h1v1h-1zM521 692h1v1h-1zM498 471h1v1h-1zM743 831h1v1h-1zM576 530h1v1h-1zM211 561h1v1h-1zM417 372h1v1h-1zM106 696h1v1h-1zM446 564h1v1h-1zM642 749h1v1h-1zM224 27h1v1h-1zM27 658h1v1h-1zM83 430h1v1h-1zM213 166h1v1h-1zM108 765h1v1h-1zM195 798h1v1h-1zM735 575h1v1h-1zM211 442h1v1h-1zM758 306h1v1h-1zM598 52h1v1h-1zM749 824h1v1h-1zM357 767h1v1h-1zM357 281h1v1h-1zM478 701h1v1h-1zM281 32h1v1h-1zM817 241h1v1h-1zM266 358h1v1h-1zM471 108h1v1h-1zM355 396h1v1h-1zM820 220h1v1h-1zM824 688h1v1h-1zM693 121h1v1h-1zM649 436h1v1h-1zM469 265h1v1h-1zM779 547h1v1h-1zM776 778h1v1h-1zM88 567h1v1h-1zM655 582h1v1h-1zM14 658h1v1h-1zM395 717h1v1h-1zM672 340h1v1h-1zM586 79h1v1h-1zM581 505h1v1h-1zM232 158h1v1h-1zM121 571h1v1h-1z"/><path fill="#fff" fill-opacity="0.275" d="M795 349h2v2h-2zM387 219h2v2h-2zM721 161h2v2h-2zM287 816h2v2h-2zM210 136h2v2h-2zM425 138h2v2h-2zM545 311h2v2h-2zM794 239h2v2h-2zM380 261h2v2h-2zM584 359h2v2h-2zM606 811h2v2h-2zM530 305h2v2h-2zM828 714h2v2h-2zM194 136h2v2h-2zM329 180h2v2h-2zM541 266h2v2h-2zM384 808h2v2h-2zM524 133h2v2h-2zM229 100h2v2h-2zM706 372h2v2h-2zM323 509h2v2h-2zM140 76h2v2h-2zM209 270h2v2h-2zM70 17h2v2h-2zM636 472h2v2h-2zM671 416h2v2h-2zM558 366h2v2h-2zM416 84h2v2h-2zM348 323h2v2h-2zM180 447h2v2h-2zM591 469h2v2h-2zM204 291h2v2h-2zM808 752h2v2h-2zM717 556h2v2h-2zM162 42h2v2h-2zM229 599h2v2h-2zM265 341h2v2h-2zM616 128h2v2h-2zM702 260h2v2h-2zM722 108h2v2h-2zM424 406h2v2h-2zM82 285h2v2h-2zM674 145h2v2h-2zM566 629h2v2h-2zM245 711h2v2h-2zM736 66h2v2h-2zM373 0h2v2h-2zM87 84h2v2h-2zM573 15h2v2h-2zM281 606h2v2h-2zM658 279h2v2h-2zM169 154h2v2h-2zM549 338h2v2h-2zM583 134h2v2h-2zM315 810h2v2h-2zM756 128h2v2h-2zM682 202h2v2h-2zM803 744h2v2h-2zM666 616h2v2h-2zM150 710h2v2h-2zM823 781h2v2h-2zM821 367h2v2h-2zM292 593h2v2h-2zM761 162h2v2h-2zM653 646h2v2h-2zM451 466h2v2h-2zM95 41h2v2h-2zM256 423h2v2h-2zM115 44h2v2h-2zM212 246h2v2h-2zM234 719h2v2h-2zM615 178h2v2h-2zM603 60h2v2h-2zM426 541h2v2h-2zM114 623h2v2h-2zM812 69h2v2h-2zM502 502h2v2h-2zM794 95h2v2h-2zM26 71h2v2h-2zM497 443h2v2h-2zM621 310h2v2h-2zM64 261h2v2h-2zM759 819h2v2h-2zM8 202h2v2h-2zM326 269h2v2h-2zM632 286h2v2h-2zM366 679h2v2h-2zM178 787h2v2h-2zM471 775h2v2h-2zM759 441h2v2h-2zM398 288h2v2h-2zM162 639h2v2h-2zM661 742h2v2h-2zM640 571h2v2h-2zM401 482h2v2h-2zM158 768h2v2h-2zM539 756h2v2h-2zM651 298h2v2h-2zM416 83h2v2h-2zM670 335h2v2h-2zM415 210h2v2h-2zM813 348h2v2h-2zM124 442h2v2h-2zM265 691h2v2h-2zM73 200h2v2h-2zM696 527h2v2h-2zM392 525h2v2h-2zM91 687h2v2h-2zM298 340h2v2h-2zM507 692h2v2h-2zM293 199h2v2h-2zM745 99h2v2h-2zM30 404h2v2h-2zM756 789h2v2h-2zM185 433h2v2h-2zM652 593h2v2h-2zM96 717h2v2h-2zM99 530h2v2h-2zM827 158h2v2h-2zM264 744h2v2h-2zM743 596h2v2h-2zM603 727h2v2h-2zM822 200h2v2h-2zM326 246h2v2h-2zM320 243h2v2h-2zM559 254h2v2h-2zM150 316h2v2h-2zM625 274h2v2h-2zM461 797h2v2h-2zM486 536h2v2h-2zM209 573h2v2h-2zM735 783h2v2h-2zM244 582h2v2h-2zM113 266h2v2h-2zM219 230h2v2h-2zM786 618h2v2h-2zM83 698h2v2h-2zM375 698h2v2h-2zM238 25h2v2h-2zM658 451h2v2h-2zM702 137h2v2h-2zM161 784h2v2h-2zM578 370h2v2h-2zM665 538h2v2h-2zM386 60h2v2h-2zM149 98h2v2h-2zM467 91h2v2h-2zM502 413h2v2h-2z"/><path fill="#fff" fill-opacity="0.314" d="M463 573h1v1h-1zM189 823h1v1h-1zM609 405h1v1h-1zM214 53h1v1h-1zM384 725h1v1h-1zM340 15h1v1h-1zM11 61h1v1h-1zM429 659h1v1h-1zM119 404h1v1h-1zM380 637h1v1h-1zM130 601h1v1h-1zM588 138h1v1h-1zM703 397h1v1h-1zM618 80h1v1h-1zM244 757h1v1h-1zM263 430h1v1h-1zM275 421h1v1h-1zM86 701h1v1h-1zM639 678h1v1h-1zM397 752h1v1h-1zM715 115h1v1h-1zM798 629h1v1h-1zM675 452h1v1h-1zM247 334h1v1h-1zM139 137h1v1h-1zM219 423h1v1h-1zM640 532h1v1h-1zM688 322h1v1h-1zM656 139h1v1h-1zM644 118h1v1h-1zM89 420h1v1h-1zM133 461h1v1h-1zM218 248h1v1h-1zM828 65h1v1h-1zM481 152h1v1h-1zM776 226h1v1h-1zM319 687h1v1h-1zM515 5h1v1h-1zM67 551h1v1h-1zM423 819h1v1h-1zM275 252h1v1h-1zM111 196h1v1h-1zM250 634h1v1h-1zM734 202h1v1h-1zM23 384h1v1h-1zM822 72h1v1h-1zM780 564h1v1h-1zM400 478h1v1h-1zM527 363h1v1h-1zM205 185h1v1h-1zM331 86h1v1h-1zM345 221h1v1h-1zM398 527h1v1h-1zM779 200h1v1h-1zM563 553h1v1h-1zM395 163h1v1h-1zM483 173h1v1h-1zM439 506h1v1h-1zM291 539h1v1h-1zM543 292h1v1h-1zM418 772h1v1h-1zM54 322h1v1h-1zM439 736h1v1h-1zM829 740h1v1h-1zM51 639h1v1h-1zM127 372h1v1h-1zM143 683h1v1h-1zM654 596h1v1h-1zM646 382h1v1h-1zM346 351h1v1h-1zM821 122h1v1h-1zM594 99h1v1h-1zM442 577h1v1h-1zM711 311h1v1h-1zM24 372h1v1h-1zM180 91h1v1h-1zM22 666h1v1h-1zM99 763h1v1h-1zM783 470h1v1h-1zM688 139h1v1h-1zM3 825h1v1h-1zM821 112h1v1h-1zM759 166h1v1h-1zM209 398h1v1h-1zM63 771h1v1h-1zM17 598h1v1h-1zM614 734h1v1h-1zM641 561h1v1h-1zM266 496h1v1h-1zM494 226h1v1h-1zM820 817h1v1h-1zM491 710h1v1h-1zM38 556h1v1h-1zM108 683h1v1h-1zM386 728h1v1h-1zM345 773h1v1h-1zM184 197h1v1h-1zM160 127h1v1h-1zM707 395h1v1h-1zM350 314h1v1h-1zM108 570h1v1h-1zM250 489h1v1h-1zM474 127h1v1h-1zM465 32h1v1h-1zM315 774h1v1h-1zM162 204h1v1h-1zM481 353h1v1h-1zM638 705h1v1h-1zM769 288h1v1h-1zM474 706h1v1h-1zM538 338h1v1h-1zM55 303h1v1h-1zM227 665h1v1h-1zM126 550h1v1h-1zM451 460h1v1h-1zM795 795h1v1h-1zM323 362h1v1h-1zM342 712h1v1h-1zM473 78h1v1h-1zM550 256h1v1h-1zM34 636h1v1h-1zM768 598h1v1h-1zM328 674h1v1h-1zM114 622h1v1h-1zM240 684h1v1h-1zM594 617h1v1h-1zM623 508h1v1h-1zM783 602h1v1h-1zM163 508h1v1h-1zM62 323h1v1h-1zM148 762h1v1h-1zM3 246h1v1h-1zM565 247h1v1h-1zM491 208h1v1h-1zM219 608h1v1h-1zM777 315h1v1h-1zM498 209h1v1h-1zM329 393h1v1h-1zM420 434h1v1h-1zM321 742h1v1h-1zM209 287h1v1h-1zM415 139h1v1h-1zM765 645h1v1h-1zM92 818h1v1h-1zM122 401h1v1h-1zM61 501h1v1h-1zM336 291h1v1h-1zM716 23h1v1h-1zM657 480h1v1h-1zM635 555h1v1h-1zM282 69h1v1h-1zM460 391h1v1h-1zM245 560h1v1h-1zM341 636h1v1h-1zM375 766h1v1h-1zM462 524h1v1h-1zM41 166h1v1h-1zM259 406h1v1h-1zM577 132h1v1h-1zM429 258h1v1h-1zM229 401h1v1h-1zM783 145h1v1h-1zM569 257h1v1h-1zM280 640h1v1h-1zM186 344h1v1h-1zM424 359h1v1h-1zM255 824h1v1h-1zM64 526h1v1h-1zM829 250h1v1h-1zM493 411h1v1h-1zM232 331h1v1h-1zM830 373h1v1h-1zM358 186h1v1h-1zM22 9h1v1h-1zM514 53h1v1h-1zM592 329h1v1h-1zM484 224h1v1h-1zM747 649h1v1h-1zM450 731h1v1h-1zM124 756h1v1h-1zM446 681h1v1h-1zM527 32h1v1h-1zM155 549h1v1h-1zM192 754h1v1h-1zM129 770h1v1h-1zM437 200h1v1h-1zM75 109h1v1h-1zM806 775h1v1h-1zM247 73h1v1h-1zM295 120h1v1h-1zM186 629h1v1h-1zM31 698h1v1h-1zM745 201h1v1h-1zM710 594h1v1h-1zM317 788h1v1h-1zM646 272h1v1h-1zM383 627h1v1h-1zM354 526h1v1h-1zM80 692h1v1h-1zM231 488h1v1h-1zM203 761h1v1h-1zM615 225h1v1h-1zM227 21h1v1h-1zM58 68h1v1h-1zM679 830h1v1h-1zM794 122h1v1h-1zM111 359h1v1h-1zM252 604h1v1h-1zM571 107h1v1h-1zM752 754h1v1h-1zM414 112h1v1h-1zM549 114h1v1h-1zM439 810h1v1h-1zM393 367h1v1h-1zM167 540h1v1h-1zM560 330h1v1h-1zM321 368h1v1h-1zM235 532h1v1h-1zM322 188h1v1h-1zM827 814h1v1h-1zM662 382h1v1h-1zM58 781h1v1h-1zM754 490h1v1h-1zM386 775h1v1h-1zM719 121h1v1h-1zM216 99h1v1h-1zM690 719h1v1h-1zM505 447h1v1h-1zM523 797h1v1h-1zM386 605h1v1h-1zM463 588h1v1h-1zM492 720h1v1h-1zM335 92h1v1h-1zM359 747h1v1h-1zM572 184h1v1h-1zM543 466h1v1h-1zM581 163h1v1h-1zM313 55h1v1h-1zM144 30h1v1h-1zM721 104h1v1h-1zM80 710h1v1h-1zM813 221h1v1h-1zM71 74h1v1h-1zM510 33h1v1h-1zM743 684h1v1h-1zM539 534h1v1h-1zM301 495h1v1h-1zM358 617h1v1h-1zM449 781h1v1h-1zM434 818h1v1h-1zM593 594h1v1h-1zM439 553h1v1h-1zM262 340h1v1h-1zM240 568h1v1h-1zM509 763h1v1h-1zM702 1h1v1h-1zM410 275h1v1h-1zM587 647h1v1h-1zM509 654h1v1h-1zM27 286h1v1h-1zM74 501h1v1h-1zM482 810h1v1h-1zM446 417h1v1h-1zM582 270h1v1h-1zM711 156h1v1h-1zM222 535h1v1h-1zM539 654h1v1h-1zM124 439h1v1h-1zM487 702h1v1h-1zM600 554h1v1h-1zM722 59h1v1h-1zM2 275h1v1h-1zM711 629h1v1h-1zM130 435h1v1h-1zM697 630h1v1h-1zM251 56h1v1h-1zM412 17h1v1h-1zM74 760h1v1h-1zM212 251h1v1h-1zM226 738h1v1h-1zM725 274h1v1h-1zM212 374h1v1h-1zM209 463h1v1h-1zM466 752h1v1h-1zM640 563h1v1h-1zM675 385h1v1h-1zM303 234h1v1h-1zM576 728h1v1h-1zM92 628h1v1h-1zM201 765h1v1h-1zM220 667h1v1h-1zM764 373h1v1h-1zM257 262h1v1h-1zM171 640h1v1h-1zM471 473h1v1h-1zM552 383h1v1h-1zM831 223h1v1h-1zM806 450h1v1h-1zM60 234h1v1h-1zM607 361h1v1h-1zM614 546h1v1h-1zM166 98h1v1h-1zM319 558h1v1h-1zM516 271h1v1h-1zM570 700h1v1h-1zM708 380h1v1h-1zM547 343h1v1h-1zM13 151h1v1h-1zM458 575h1v1h-1zM757 167h1v1h-1zM711 242h1v1h-1zM648 685h1v1h-1zM734 327h1v1h-1zM7 60h1v1h-1zM503 602h1v1h-1zM570 337h1v1h-1zM459 194h1v1h-1zM194 392h1v1h-1zM230 446h1v1h-1zM29 247h1v1h-1zM461 114h1v1h-1zM72 172h1v1h-1zM419 153h1v1h-1zM397 5h1v1h-1zM9 432h1v1h-1zM570 123h1v1h-1zM213 330h1v1h-1zM196 274h1v1h-1zM739 474h1v1h-1zM325 575h1v1h-1zM247 320h1v1h-1zM701 36h1v1h-1zM700 261h1v1h-1zM648 434h1v1h-1zM216 11h1v1h-1zM487 269h1v1h-1zM75 466h1v1h-1zM823 286h1v1h-1zM701 495h1v1h-1zM694 154h1v1h-1zM152 582h1v1h-1zM781 151h1v1h-1zM218 340h1v1h-1zM722 147h1v1h-1zM429 161h1v1h-1zM61 741h1v1h-1zM173 249h1v1h-1zM508 659h1v1h-1zM131 92h1v1h-1zM309 605h1v1h-1zM546 260h1v1h-1zM361 716h1v1h-1zM312 746h1v1h-1zM247 464h1v1h-1zM326 35h1v1h-1zM301 80h1v1h-1zM661 36h1v1h-1zM531 542h1v1h-1zM825 527h1v1h-1zM106 342h1v1h-1zM1 504h1v1h-1zM263 60h1v1h-1zM610 202h1v1h-1zM3 218h1v1h-1zM641 162h1v1h-1zM719 774h1v1h-1zM374 168h1v1h-1zM157 46h1v1h-1zM563 81h1v1h-1zM60 604h1v1h-1zM204 193h1v1h-1zM208 89h1v1h-1zM299 825h1v1h-1zM408 78h1v1h-1zM448 232h1v1h-1zM559 298h1v1h-1zM377 17h1v1h-1zM595 503h1v1h-1zM30 823h1v1h-1zM368 7h1v1h-1zM411 804h1v1h-1zM99 352h1v1h-1zM769 276h1v1h-1zM690 307h1v1h-1zM771 778h1v1h-1zM230 750h1v1h-1zM82 419h1v1h-1zM34 452h1v1h-1zM106 593h1v1h-1zM473 127h1v1h-1zM186 341h1v1h-1zM420 527h1v1h-1zM470 658h1v1h-1zM455 284h1v1h-1zM38 718h1v1h-1zM524 748h1v1h-1zM48 598h1v1h-1zM779 387h1v1h-1zM160 3h1v1h-1zM683 478h1v1h-1zM827 75h1v1h-1zM639 503h1v1h-1zM473 649h1v1h-1zM359 62h1v1h-1zM93 612h1v1h-1zM536 308h1v1h-1zM318 758h1v1h-1zM580 111h1v1h-1zM60 450h1v1h-1zM174 309h1v1h-1zM788 751h1v1h-1zM357 87h1v1h-1zM769 795h1v1h-1zM29 163h1v1h-1zM594 430h1v1h-1zM313 193h1v1h-1zM221 554h1v1h-1zM47 208h1v1h-1zM57 128h1v1h-1zM3 557h1v1h-1zM549 246h1v1h-1zM145 711h1v1h-1zM52 646h1v1h-1zM174 64h1v1h-1zM248 129h1v1h-1zM85 354h1v1h-1zM599 311h1v1h-1zM147 409h1v1h-1zM698 827h1v1h-1zM57 455h1v1h-1zM296 280h1v1h-1zM774 427h1v1h-1zM387 468h1v1h-1zM583 636h1v1h-1zM148 696h1v1h-1zM624 75h1v1h-1zM572 352h1v1h-1zM524 211h1v1h-1zM253 657h1v1h-1zM375 120h1v1h-1zM299 126h1v1h-1zM21 588h1v1h-1zM530 464h1v1h-1zM599 658h1v1h-1zM302 518h1v1h-1zM781 442h1v1h-1zM364 149h1v1h-1zM801 784h1v1h-1zM438 491h1v1h-1zM762 170h1v1h-1zM299 90h1v1h-1zM459 79h1v1h-1zM628 552h1v1h-1zM566 3h1v1h-1zM663 243h1v1h-1zM352 294h1v1h-1zM477 634h1v1h-1zM369 260h1v1h-1zM729 447h1v1h-1zM391 448h1v1h-1zM535 561h1v1h-1zM507 107h1v1h-1zM400 322h1v1h-1zM424 437h1v1h-1zM503 770h1v1h-1zM247 493h1v1h-1zM200 269h1v1h-1zM335 150h1v1h-1zM719 768h1v1h-1zM443 750h1v1h-1zM6 809h1v1h-1zM327 611h1v1h-1zM731 700h1v1h-1zM773 305h1v1h-1zM745 12h1v1h-1zM561 785h1v1h-1zM294 537h1v1h-1zM471 427h1v1h-1zM141 326h1v1h-1zM321 518h1v1h-1zM786 566h1v1h-1zM459 693h1v1h-1zM427 238h1v1h-1zM829 284h1v1h-1zM516 96h1v1h-1zM594 616h1v1h-1zM613 376h1v1h-1zM47 350h1v1h-1zM261 595h1v1h-1zM360 564h1v1h-1zM195 121h1v1h-1zM27 655h1v1h-1zM755 719h1v1h-1zM200 443h1v1h-1zM159 308h1v1h-1zM393 463h1v1h-1zM172 607h1v1h-1zM580 335h1v1h-1zM423 590h1v1h-1zM337 648h1v1h-1zM689 96h1v1h-1zM705 35h1v1h-1zM196 108h1v1h-1zM728 76h1v1h-1zM657 467h1v1h-1zM815 781h1v1h-1zM346 401h1v1h-1zM718 37h1v1h-1zM591 446h1v1h-1zM501 501h1v1h-1zM751 526h1v1h-1zM389 405h1v1h-1zM26 706h1v1h-1zM84 519h1v1h-1zM828 630h1v1h-1zM202 813h1v1h-1zM528 39h1v1h-1zM666 184h1v1h-1zM468 273h1v1h-1zM747 683h1v1h-1zM664 555h1v1h-1zM644 39h1v1h-1zM264 83h1v1h-1zM399 768h1v1h-1zM162 78h1v1h-1zM579 87h1v1h-1zM472 421h1v1h-1zM278 449h1v1h-1zM304 615h1v1h-1zM172 682h1v1h-1zM367 461h1v1h-1zM501 574h1v1h-1zM197 621h1v1h-1zM608 517h1v1h-1zM181 96h1v1h-1zM779 543h1v1h-1zM590 8h1v1h-1zM401 442h1v1h-1zM12 615h1v1h-1zM59 602h1v1h-1zM201 395h1v1h-1zM492 610h1v1h-1zM147 177h1v1h-1zM97 659h1v1h-1zM226 713h1v1h-1zM74 652h1v1h-1zM566 239h1v1h-1zM433 392h1v1h-1zM459 624h1v1h-1zM326 237h1v1h-1zM204 511h1v1h-1zM257 489h1v1h-1zM743 380h1v1h-1zM758 10h1v1h-1zM608 830h1v1h-1zM634 818h1v1h-1zM509 696h1v1h-1zM354 114h1v1h-1zM336 94h1v1h-1zM832 683h1v1h-1zM38 237h1v1h-1zM88 395h1v1h-1zM558 193h1v1h-1zM56 288h1v1h-1zM537 557h1v1h-1zM196 357h1v1h-1zM493 656h1v1h-1zM630 226h1v1h-1zM86 738h1v1h-1zM320 580h1v1h-1zM583 215h1v1h-1zM540 49h1v1h-1zM557 112h1v1h-1zM790 764h1v1h-1zM748 48h1v1h-1zM649 2h1v1h-1zM96 416h1v1h-1zM762 818h1v1h-1zM509 809h1v1h-1zM737 580h1v1h-1zM123 740h1v1h-1zM724 389h1v1h-1zM330 751h1v1h-1zM754 93h1v1h-1zM440 161h1v1h-1zM626 819h1v1h-1zM727 236h1v1h-1zM574 390h1v1h-1zM663 38h1v1h-1zM639 707h1v1h-1zM34 534h1v1h-1zM43 353h1v1h-1zM462 664h1v1h-1zM433 771h1v1h-1zM494 487h1v1h-1zM452 86h1v1h-1zM410 563h1v1h-1zM78 551h1v1h-1zM489 220h1v1h-1zM437 717h1v1h-1zM93 454h1v1h-1zM329 408h1v1h-1zM66 570h1v1h-1zM22 482h1v1h-1zM417 784h1v1h-1zM97 481h1v1h-1zM411 532h1v1h-1zM61 697h1v1h-1zM396 618h1v1h-1zM163 762h1v1h-1zM581 212h1v1h-1zM262 576h1v1h-1zM465 381h1v1h-1zM85 500h1v1h-1zM28 461h1v1h-1zM730 696h1v1h-1zM596 129h1v1h-1zM607 747h1v1h-1zM201 722h1v1h-1zM289 475h1v1h-1zM663 605h1v1h-1zM168 77h1v1h-1zM605 584h1v1h-1zM790 693h1v1h-1zM431 422h1v1h-1zM312 262h1v1h-1zM400 406h1v1h-1zM715 133h1v1h-1zM631 484h1v1h-1zM722 588h1v1h-1zM561 503h1v1h-1zM163 351h1v1h-1zM134 689h1v1h-1zM332 236h1v1h-1zM241 499h1v1h-1zM371 751h1v1h-1zM757 127h1v1h-1zM391 311h1v1h-1zM135 555h1v1h-1zM600 463h1v1h-1zM778 154h1v1h-1zM517 392h1v1h-1zM563 104h1v1h-1zM338 203h1v1h-1zM331 302h1v1h-1zM486 608h1v1h-1zM601 136h1v1h-1zM568 673h1v1h-1zM563 291h1v1h-1zM258 580h1v1h-1zM611 743h1v1h-1zM160 533h1v1h-1zM4 613h1v1h-1zM816 679h1v1h-1zM491 621h1v1h-1zM100 415h1v1h-1zM268 21h1v1h-1zM830 110h1v1h-1zM740 749h1v1h-1zM373 324h1v1h-1zM480 519h1v1h-1zM155 136h1v1h-1zM764 591h1v1h-1zM816 670h1v1h-1zM802 298h1v1h-1zM421 17h1v1h-1zM259 469h1v1h-1zM668 825h1v1h-1zM11 535h1v1h-1zM726 159h1v1h-1zM703 155h1v1h-1zM158 20h1v1h-1zM483 657h1v1h-1zM459 295h1v1h-1zM511 683h1v1h-1zM480 576h1v1h-1zM538 549h1v1h-1zM304 336h1v1h-1zM88 37h1v1h-1zM274 375h1v1h-1zM238 445h1v1h-1zM433 531h1v1h-1zM754 496h1v1h-1zM514 780h1v1h-1zM651 201h1v1h-1zM355 91h1v1h-1zM714 796h1v1h-1zM156 708h1v1h-1zM369 203h1v1h-1zM620 269h1v1h-1zM157 766h1v1h-1zM28 698h1v1h-1zM61 65h1v1h-1zM214 215h1v1h-1zM199 46h1v1h-1zM575 722h1v1h-1zM818 643h1v1h-1zM134 625h1v1h-1zM507 790h1v1h-1zM171 363h1v1h-1zM696 500h1v1h-1zM384 446h1v1h-1zM428 165h1v1h-1zM323 450h1v1h-1zM538 331h1v1h-1zM691 184h1v1h-1zM711 275h1v1h-1zM299 20h1v1h-1zM330 792h1v1h-1zM720 12h1v1h-1zM167 113h1v1h-1zM224 476h1v1h-1zM776 349h1v1h-1zM168 503h1v1h-1zM224 532h1v1h-1zM571 295h1v1h-1zM737 399h1v1h-1zM215 212h1v1h-1zM9 825h1v1h-1zM24 8h1v1h-1zM470 826h1v1h-1zM566 190h1v1h-1zM449 145h1v1h-1zM117 133h1v1h-1zM723 13h1v1h-1zM286 295h1v1h-1zM497 349h1v1h-1zM178 280h1v1h-1zM554 56h1v1h-1zM202 747h1v1h-1zM503 823h1v1h-1zM691 577h1v1h-1zM118 112h1v1h-1zM621 831h1v1h-1zM454 108h1v1h-1zM162 551h1v1h-1zM175 709h1v1h-1zM82 376h1v1h-1zM681 812h1v1h-1zM489 793h1v1h-1zM72 183h1v1h-1zM617 483h1v1h-1zM305 206h1v1h-1zM358 482h1v1h-1zM330 730h1v1h-1zM312 379h1v1h-1zM784 510h1v1h-1zM138 530h1v1h-1zM222 389h1v1h-1zM24 368h1v1h-1zM605 398h1v1h-1zM1 687h1v1h-1zM344 702h1v1h-1zM751 824h1v1h-1zM485 741h1v1h-1zM345 196h1v1h-1zM559 203h1v1h-1zM451 130h1v1h-1zM368 824h1v1h-1zM501 271h1v1h-1zM2 96h1v1h-1zM237 62h1v1h-1zM389 308h1v1h-1zM355 87h1v1h-1zM659 339h1v1h-1zM665 619h1v1h-1zM176 532h1v1h-1zM587 262h1v1h-1zM533 251h1v1h-1zM258 579h1v1h-1zM686 727h1v1h-1zM513 515h1v1h-1zM427 642h1v1h-1zM610 788h1v1h-1zM441 140h1v1h-1zM171 716h1v1h-1zM743 356h1v1h-1zM807 69h1v1h-1zM625 550h1v1h-1zM278 637h1v1h-1zM518 691h1v1h-1zM640 116h1v1h-1zM769 654h1v1h-1zM609 824h1v1h-1zM515 751h1v1h-1zM394 178h1v1h-1zM645 506h1v1h-1zM580 433h1v1h-1zM181 552h1v1h-1zM261 615h1v1h-1zM554 824h1v1h-1zM634 381h1v1h-1zM292 153h1v1h-1zM62 650h1v1h-1zM208 576h1v1h-1zM253 360h1v1h-1zM317 122h1v1h-1zM786 594h1v1h-1zM163 769h1v1h-1zM116 79h1v1h-1zM146 437h1v1h-1zM192 555h1v1h-1zM268 597h1v1h-1zM215 587h1v1h-1zM197 736h1v1h-1zM349 309h1v1h-1zM143 435h1v1h-1zM474 237h1v1h-1zM398 392h1v1h-1zM802 88h1v1h-1zM87 42h1v1h-1zM41 476h1v1h-1zM594 497h1v1h-1zM247 431h1v1h-1zM537 291h1v1h-1zM705 80h1v1h-1zM563 165h1v1h-1zM661 408h1v1h-1zM216 222h1v1h-1zM104 364h1v1h-1zM791 770h1v1h-1zM311 182h1v1h-1zM506 139h1v1h-1zM677 298h1v1h-1zM575 79h1v1h-1zM363 377h1v1h-1zM278 489h1v1h-1zM344 684h1v1h-1zM348 38h1v1h-1zM223 395h1v1h-1zM60 315h1v1h-1zM130 359h1v1h-1zM660 685h1v1h-1zM793 776h1v1h-1zM769 380h1v1h-1zM272 664h1v1h-1zM513 790h1v1h-1zM514 159h1v1h-1zM653 361h1v1h-1zM444 567h1v1h-1zM512 770h1v1h-1zM97 754h1v1h-1zM506 342h1v1h-1zM369 97h1v1h-1zM596 21h1v1h-1zM743 738h1v1h-1zM543 153h1v1h-1zM173 148h1v1h-1zM411 721h1v1h-1zM143 675h1v1h-1zM280 34h1v1h-1zM12 798h1v1h-1zM217 104h1v1h-1zM649 45h1v1h-1zM139 699h1v1h-1zM534 721h1v1h-1zM808 668h1v1h-1zM763 722h1v1h-1zM351 411h1v1h-1zM707 62h1v1h-1zM79 52h1v1h-1zM485 341h1v1h-1zM744 645h1v1h-1zM137 482h1v1h-1zM705 1h1v1h-1zM759 161h1v1h-1zM299 13h1v1h-1zM661 388h1v1h-1zM280 483h1v1h-1zM647 52h1v1h-1zM165 182h1v1h-1zM330 144h1v1h-1zM368 589h1v1h-1zM66 394h1v1h-1zM635 730h1v1h-1zM234 573h1v1h-1zM602 550h1v1h-1zM631 768h1v1h-1zM586 712h1v1h-1zM697 635h1v1h-1zM216 697h1v1h-1zM754 779h1v1h-1zM589 184h1v1h-1zM291 265h1v1h-1zM136 757h1v1h-1zM770 571h1v1h-1zM680 488h1v1h-1zM126 6h1v1h-1zM31 433h1v1h-1zM816 108h1v1h-1zM691 366h1v1h-1zM57 684h1v1h-1zM510 132h1v1h-1zM111 667h1v1h-1zM433 324h1v1h-1zM209 151h1v1h-1zM193 151h1v1h-1zM0 194h1v1h-1zM586 188h1v1h-1zM373 397h1v1h-1zM699 473h1v1h-1zM461 72h1v1h-1zM222 346h1v1h-1zM3 64h1v1h-1zM462 443h1v1h-1zM701 433h1v1h-1zM574 520h1v1h-1zM466 826h1v1h-1zM115 363h1v1h-1zM589 142h1v1h-1zM2 344h1v1h-1zM781 290h1v1h-1zM442 509h1v1h-1zM162 52h1v1h-1zM250 799h1v1h-1zM317 240h1v1h-1zM832 201h1v1h-1zM123 679h1v1h-1zM356 732h1v1h-1zM811 664h1v1h-1zM644 438h1v1h-1zM576 523h1v1h-1z"/><path fill="#fff" fill-opacity="0.353" d="M669 741h3v3h-3zM525 419h3v3h-3zM468 440h3v3h-3zM717 808h3v3h-3zM61 555h3v3h-3zM90 325h3v3h-3zM52 382h3v3h-3zM372 63h3v3h-3zM560 446h3v3h-3zM516 23h3v3h-3zM739 828h3v3h-3zM681 54h3v3h-3zM697 278h3v3h-3zM799 701h3v3h-3zM700 60h3v3h-3zM83 500h3v3h-3zM637 472h3v3h-3zM754 465h3v3h-3zM828 18h3v3h-3zM534 435h3v3h-3zM614 634h3v3h-3zM605 584h3v3h-3zM577 434h3v3h-3zM287 512h3v3h-3zM499 705h3v3h-3zM623 477h3v3h-3zM267 306h3v3h-3zM153 365h3v3h-3zM682 39h3v3h-3zM746 702h3v3h-3zM188 606h3v3h-3zM719 85h3v3h-3zM506 344h3v3h-3zM423 719h3v3h-3zM324 573h3v3h-3zM102 254h3v3h-3zM234 338h3v3h-3zM1 238h3v3h-3zM119 398h3v3h-3zM185 50h3v3h-3z"/><path fill="#fff" fill-opacity="0.392" d="M761 146h2v2h-2zM761 349h2v2h-2zM221 87h2v2h-2zM753 360h2v2h-2zM469 581h2v2h-2zM630 107h2v2h-2zM250 244h2v2h-2zM571 830h2v2h-2zM582 135h2v2h-2zM64 173h2v2h-2zM352 371h2v2h-2zM165 693h2v2h-2zM592 211h2v2h-2zM206 538h2v2h-2zM315 268h2v2h-2zM452 531h2v2h-2zM774 324h2v2h-2zM600 511h2v2h-2zM653 509h2v2h-2zM653 607h2v2h-2zM571 342h2v2h-2zM61 162h2v2h-2zM601 166h2v2h-2zM592 217h2v2h-2zM535 806h2v2h-2zM571 11h2v2h-2zM501 443h2v2h-2zM536 162h2v2h-2zM630 12h2v2h-2zM197 377h2v2h-2zM359 610h2v2h-2zM696 12h2v2h-2zM540 347h2v2h-2zM150 584h2v2h-2zM821 71h2v2h-2zM340 513h2v2h-2zM334 463h2v2h-2zM171 238h2v2h-2zM653 179h2v2h-2zM171 760h2v2h-2zM697 483h2v2h-2zM236 197h2v2h-2zM122 204h2v2h-2zM577 688h2v2h-2zM415 245h2v2h-2zM295 550h2v2h-2zM332 703h2v2h-2zM731 343h2v2h-2zM429 348h2v2h-2zM559 399h2v2h-2zM292 11h2v2h-2zM806 404h2v2h-2zM432 732h2v2h-2zM492 354h2v2h-2zM598 2h2v2h-2zM68 575h2v2h-2zM410 82h2v2h-2zM512 411h2v2h-2zM706 199h2v2h-2zM608 749h2v2h-2zM168 218h2v2h-2zM680 319h2v2h-2zM191 64h2v2h-2zM530 214h2v2h-2zM480 216h2v2h-2zM209 384h2v2h-2zM650 401h2v2h-2zM548 532h2v2h-2zM182 310h2v2h-2zM426 787h2v2h-2zM232 199h2v2h-2zM628 28h2v2h-2zM465 184h2v2h-2zM636 241h2v2h-2zM339 428h2v2h-2zM751 20h2v2h-2zM659 171h2v2h-2zM539 685h2v2h-2zM623 376h2v2h-2zM409 459h2v2h-2zM403 80h2v2h-2zM41 204h2v2h-2zM171 469h2v2h-2zM267 755h2v2h-2zM582 358h2v2h-2zM304 116h2v2h-2zM176 226h2v2h-2zM700 349h2v2h-2zM355 759h2v2h-2zM309 395h2v2h-2zM277 45h2v2h-2zM94 349h2v2h-2zM792 212h2v2h-2zM368 251h2v2h-2zM664 410h2v2h-2zM721 198h2v2h-2zM757 604h2v2h-2zM164 555h2v2h-2zM174 113h2v2h-2zM458 547h2v2h-2zM281 440h2v2h-2zM277 552h2v2h-2zM499 282h2v2h-2zM511 1h2v2h-2zM538 393h2v2h-2zM181 405h2v2h-2zM142 360h2v2h-2zM132 716h2v2h-2zM647 392h2v2h-2zM14 13h2v2h-2zM660 257h2v2h-2zM359 649h2v2h-2zM566 392h2v2h-2zM719 811h2v2h-2zM532 596h2v2h-2zM153 391h2v2h-2zM827 634h2v2h-2zM640 11h2v2h-2zM144 734h2v2h-2zM365 624h2v2h-2zM253 807h2v2h-2zM670 773h2v2h-2zM761 325h2v2h-2zM762 360h2v2h-2zM538 476h2v2h-2z"/><path fill="#fff" fill-opacity="0.471" d="M552 481h1v1h-1zM610 797h1v1h-1zM409 212h1v1h-1zM568 127h1v1h-1zM323 246h1v1h-1zM774 500h1v1h-1zM717 694h1v1h-1zM562 252h1v1h-1zM88 234h1v1h-1zM386 354h1v1h-1zM195 391h1v1h-1zM334 676h1v1h-1zM179 564h1v1h-1zM828 388h1v1h-1zM364 255h1v1h-1zM324 288h1v1h-1zM642 517h1v1h-1zM250 193h1v1h-1zM775 725h1v1h-1zM815 354h1v1h-1zM89 29h1v1h-1zM351 295h1v1h-1zM301 766h1v1h-1zM206 585h1v1h-1zM492 523h1v1h-1zM740 20h1v1h-1zM476 525h1v1h-1zM530 223h1v1h-1zM597 572h1v1h-1zM438 642h1v1h-1zM592 580h1v1h-1zM803 123h1v1h-1zM257 545h1v1h-1zM820 513h1v1h-1zM157 248h1v1h-1zM788 138h1v1h-1zM730 51h1v1h-1zM764 177h1v1h-1zM230 748h1v1h-1zM455 525h1v1h-1zM747 26h1v1h-1zM442 112h1v1h-1zM771 199h1v1h-1zM797 69h1v1h-1zM506 747h1v1h-1zM529 104h1v1h-1zM140 672h1v1h-1zM442 328h1v1h-1zM577 236h1v1h-1zM177 68h1v1h-1zM815 508h1v1h-1zM770 87h1v1h-1zM252 35h1v1h-1zM502 74h1v1h-1zM422 374h1v1h-1zM209 149h1v1h-1zM271 721h1v1h-1zM603 756h1v1h-1zM721 772h1v1h-1zM106 588h1v1h-1zM664 673h1v1h-1zM809 7h1v1h-1zM452 138h1v1h-1zM812 529h1v1h-1zM742 485h1v1h-1zM713 33h1v1h-1zM568 822h1v1h-1zM479 535h1v1h-1zM470 635h1v1h-1zM620 288h1v1h-1zM460 318h1v1h-1zM736 17h1v1h-1zM643 400h1v1h-1zM421 336h1v1h-1zM738 731h1v1h-1zM583 571h1v1h-1zM27 273h1v1h-1zM467 636h1v1h-1zM794 492h1v1h-1zM206 513h1v1h-1zM506 189h1v1h-1zM528 258h1v1h-1zM92 470h1v1h-1zM36 46h1v1h-1zM666 782h1v1h-1zM263 757h1v1h-1zM211 301h1v1h-1zM668 377h1v1h-1zM789 478h1v1h-1zM497 218h1v1h-1zM648 302h1v1h-1zM509 616h1v1h-1zM444 234h1v1h-1zM634 371h1v1h-1zM362 124h1v1h-1zM41 611h1v1h-1zM35 291h1v1h-1zM80 749h1v1h-1zM234 784h1v1h-1zM201 343h1v1h-1zM349 546h1v1h-1zM98 815h1v1h-1zM10 445h1v1h-1zM11 433h1v1h-1zM314 482h1v1h-1zM692 673h1v1h-1zM168 582h1v1h-1zM169 667h1v1h-1zM435 450h1v1h-1zM45 750h1v1h-1zM751 433h1v1h-1zM350 679h1v1h-1zM517 259h1v1h-1zM453 351h1v1h-1zM455 562h1v1h-1zM294 514h1v1h-1zM89 136h1v1h-1zM422 711h1v1h-1zM321 323h1v1h-1zM11 771h1v1h-1zM63 467h1v1h-1zM316 495h1v1h-1zM229 517h1v1h-1zM390 594h1v1h-1zM529 790h1v1h-1zM299 122h1v1h-1zM597 729h1v1h-1zM251 784h1v1h-1zM319 191h1v1h-1zM13 208h1v1h-1zM385 22h1v1h-1zM786 242h1v1h-1zM685 583h1v1h-1zM460 364h1v1h-1zM656 700h1v1h-1zM328 470h1v1h-1zM339 487h1v1h-1zM354 21h1v1h-1zM105 307h1v1h-1zM705 641h1v1h-1zM229 352h1v1h-1zM575 651h1v1h-1zM793 585h1v1h-1zM210 16h1v1h-1zM140 364h1v1h-1zM496 54h1v1h-1zM259 731h1v1h-1zM57 612h1v1h-1zM81 99h1v1h-1zM35 486h1v1h-1zM680 460h1v1h-1zM821 210h1v1h-1zM570 222h1v1h-1zM787 383h1v1h-1zM558 255h1v1h-1zM201 534h1v1h-1zM519 572h1v1h-1zM132 757h1v1h-1zM684 89h1v1h-1zM319 517h1v1h-1zM742 512h1v1h-1zM55 322h1v1h-1zM817 273h1v1h-1zM619 676h1v1h-1zM655 168h1v1h-1zM134 810h1v1h-1zM48 628h1v1h-1zM468 177h1v1h-1zM339 676h1v1h-1zM354 541h1v1h-1zM689 627h1v1h-1zM403 463h1v1h-1zM197 691h1v1h-1zM768 738h1v1h-1zM475 21h1v1h-1zM282 76h1v1h-1zM241 610h1v1h-1zM106 122h1v1h-1zM283 559h1v1h-1zM85 32h1v1h-1zM581 490h1v1h-1zM276 288h1v1h-1zM21 382h1v1h-1zM386 46h1v1h-1zM479 27h1v1h-1zM667 273h1v1h-1zM588 476h1v1h-1zM811 554h1v1h-1zM87 741h1v1h-1zM189 45h1v1h-1zM603 61h1v1h-1zM145 84h1v1h-1zM120 708h1v1h-1zM381 318h1v1h-1zM560 92h1v1h-1zM168 446h1v1h-1zM779 146h1v1h-1zM49 510h1v1h-1zM16 32h1v1h-1zM451 72h1v1h-1zM809 471h1v1h-1zM372 139h1v1h-1zM22 499h1v1h-1zM689 319h1v1h-1zM205 717h1v1h-1zM144 44h1v1h-1zM60 691h1v1h-1zM2 780h1v1h-1zM371 1h1v1h-1zM92 39h1v1h-1zM61 136h1v1h-1zM503 611h1v1h-1zM295 749h1v1h-1zM89 443h1v1h-1zM156 69h1v1h-1zM54 250h1v1h-1zM170 426h1v1h-1zM604 741h1v1h-1zM522 713h1v1h-1zM536 20h1v1h-1zM275 558h1v1h-1zM237 41h1v1h-1zM27 509h1v1h-1zM427 44h1v1h-1zM549 474h1v1h-1zM177 117h1v1h-1zM661 146h1v1h-1zM177 120h1v1h-1zM809 446h1v1h-1zM769 804h1v1h-1zM689 474h1v1h-1zM373 525h1v1h-1zM301 670h1v1h-1zM198 473h1v1h-1zM811 158h1v1h-1zM345 724h1v1h-1zM820 325h1v1h-1zM146 49h1v1h-1zM713 9h1v1h-1zM814 77h1v1h-1zM266 299h1v1h-1zM467 513h1v1h-1zM316 678h1v1h-1zM736 164h1v1h-1zM603 433h1v1h-1zM761 58h1v1h-1zM141 222h1v1h-1zM126 180h1v1h-1zM548 654h1v1h-1zM514 14h1v1h-1zM824 37h1v1h-1zM618 206h1v1h-1zM712 435h1v1h-1zM428 389h1v1h-1zM561 79h1v1h-1zM321 787h1v1h-1zM336 57h1v1h-1zM699 756h1v1h-1zM380 159h1v1h-1zM725 511h1v1h-1zM601 505h1v1h-1zM154 755h1v1h-1zM759 598h1v1h-1zM529 329h1v1h-1zM424 4h1v1h-1zM234 828h1v1h-1zM19 434h1v1h-1zM82 590h1v1h-1zM361 361h1v1h-1zM597 350h1v1h-1zM279 113h1v1h-1zM762 798h1v1h-1zM496 385h1v1h-1zM679 402h1v1h-1zM370 773h1v1h-1zM713 645h1v1h-1zM385 205h1v1h-1zM8 689h1v1h-1zM801 693h1v1h-1zM521 362h1v1h-1zM396 291h1v1h-1zM354 293h1v1h-1zM557 102h1v1h-1zM512 768h1v1h-1zM530 495h1v1h-1zM287 27h1v1h-1zM218 515h1v1h-1zM382 259h1v1h-1zM442 464h1v1h-1zM647 586h1v1h-1zM817 764h1v1h-1zM575 248h1v1h-1zM144 106h1v1h-1zM708 4h1v1h-1zM463 124h1v1h-1zM736 820h1v1h-1zM653 824h1v1h-1zM272 71h1v1h-1zM11 376h1v1h-1zM470 671h1v1h-1zM443 21h1v1h-1zM326 164h1v1h-1zM36 598h1v1h-1zM561 611h1v1h-1zM446 77h1v1h-1zM88 722h1v1h-1zM795 720h1v1h-1zM414 129h1v1h-1zM556 604h1v1h-1zM796 792h1v1h-1zM24 447h1v1h-1zM500 711h1v1h-1zM287 830h1v1h-1zM542 673h1v1h-1zM694 713h1v1h-1zM393 496h1v1h-1zM345 649h1v1h-1zM19 802h1v1h-1zM201 517h1v1h-1zM575 379h1v1h-1zM600 719h1v1h-1zM698 830h1v1h-1zM70 643h1v1h-1zM1 611h1v1h-1zM515 561h1v1h-1zM444 259h1v1h-1zM144 16h1v1h-1zM264 771h1v1h-1zM359 373h1v1h-1zM547 116h1v1h-1zM538 80h1v1h-1zM179 52h1v1h-1zM468 260h1v1h-1zM55 202h1v1h-1zM768 284h1v1h-1zM647 763h1v1h-1zM656 283h1v1h-1zM304 428h1v1h-1zM302 235h1v1h-1zM41 373h1v1h-1zM127 573h1v1h-1zM708 482h1v1h-1zM68 382h1v1h-1zM548 142h1v1h-1zM512 493h1v1h-1zM118 830h1v1h-1zM633 310h1v1h-1zM231 681h1v1h-1zM81 464h1v1h-1zM258 162h1v1h-1zM284 539h1v1h-1zM232 802h1v1h-1zM297 160h1v1h-1zM437 238h1v1h-1zM98 120h1v1h-1zM583 692h1v1h-1zM534 765h1v1h-1zM603 386h1v1h-1zM90 733h1v1h-1zM561 731h1v1h-1zM234 649h1v1h-1zM817 99h1v1h-1zM155 367h1v1h-1zM538 792h1v1h-1zM152 45h1v1h-1zM808 639h1v1h-1zM807 368h1v1h-1zM506 666h1v1h-1zM172 508h1v1h-1zM776 96h1v1h-1zM365 659h1v1h-1zM270 674h1v1h-1zM37 731h1v1h-1zM275 367h1v1h-1zM278 709h1v1h-1zM504 446h1v1h-1zM305 500h1v1h-1zM428 521h1v1h-1zM399 623h1v1h-1zM496 385h1v1h-1zM406 651h1v1h-1zM755 383h1v1h-1zM689 542h1v1h-1zM72 618h1v1h-1zM294 408h1v1h-1zM326 782h1v1h-1zM514 243h1v1h-1zM804 112h1v1h-1zM723 421h1v1h-1zM605 649h1v1h-1zM444 137h1v1h-1zM687 730h1v1h-1zM679 717h1v1h-1zM494 735h1v1h-1zM760 603h1v1h-1zM291 716h1v1h-1zM543 782h1v1h-1zM176 427h1v1h-1zM118 791h1v1h-1zM649 691h1v1h-1zM527 782h1v1h-1zM404 308h1v1h-1zM810 359h1v1h-1zM677 530h1v1h-1zM388 522h1v1h-1zM12 523h1v1h-1zM176 478h1v1h-1zM196 599h1v1h-1zM756 297h1v1h-1zM106 316h1v1h-1zM684 15h1v1h-1zM772 458h1v1h-1zM734 661h1v1h-1zM179 365h1v1h-1zM185 438h1v1h-1zM764 369h1v1h-1zM480 521h1v1h-1zM471 617h1v1h-1zM134 149h1v1h-1zM798 154h1v1h-1zM433 548h1v1h-1zM367 820h1v1h-1zM25 467h1v1h-1zM404 513h1v1h-1zM447 284h1v1h-1zM258 356h1v1h-1zM613 448h1v1h-1zM533 300h1v1h-1zM427 789h1v1h-1zM419 323h1v1h-1zM257 394h1v1h-1zM543 326h1v1h-1z"/><path fill="#fff" fill-opacity="0.510" d="M644 241h2v2h-2zM33 62h2v2h-2zM514 750h2v2h-2zM112 729h2v2h-2zM689 556h2v2h-2zM41 325h2v2h-2zM113 502h2v2h-2zM35 689h2v2h-2zM330 747h2v2h-2zM502 681h2v2h-2zM470 579h2v2h-2zM319 374h2v2h-2zM305 237h2v2h-2zM66 799h2v2h-2zM445 769h2v2h-2zM92 37h2v2h-2zM92 157h2v2h-2zM653 820h2v2h-2zM195 533h2v2h-2zM17 444h2v2h-2zM165 200h2v2h-2zM162 97h2v2h-2zM188 791h2v2h-2zM618 764h2v2h-2zM718 113h2v2h-2zM678 693h2v2h-2zM332 693h2v2h-2zM577 819h2v2h-2zM439 384h2v2h-2zM187 303h2v2h-2zM151 544h2v2h-2zM733 789h2v2h-2zM213 728h2v2h-2zM755 112h2v2h-2zM101 552h2v2h-2zM321 497h2v2h-2zM112 716h2v2h-2zM238 539h2v2h-2zM173 356h2v2h-2zM244 317h2v2h-2zM290 149h2v2h-2zM476 312h2v2h-2zM468 662h2v2h-2zM366 625h2v2h-2zM177 242h2v2h-2zM796 284h2v2h-2zM553 582h2v2h-2zM565 321h2v2h-2zM232 501h2v2h-2zM528 688h2v2h-2zM571 694h2v2h-2zM94 541h2v2h-2zM816 705h2v2h-2zM472 375h2v2h-2zM345 379h2v2h-2zM186 612h2v2h-2zM326 785h2v2h-2zM804 769h2v2h-2zM438 171h2v2h-2zM40 626h2v2h-2zM695 183h2v2h-2zM207 606h2v2h-2zM244 510h2v2h-2zM281 582h2v2h-2zM244 372h2v2h-2zM411 707h2v2h-2zM640 301h2v2h-2zM705 619h2v2h-2zM107 289h2v2h-2zM727 646h2v2h-2zM458 611h2v2h-2zM707 312h2v2h-2zM522 564h2v2h-2zM262 249h2v2h-2zM174 828h2v2h-2zM211 602h2v2h-2zM213 106h2v2h-2zM743 533h2v2h-2zM260 688h2v2h-2zM499 666h2v2h-2zM510 202h2v2h-2zM668 245h2v2h-2zM541 377h2v2h-2zM227 203h2v2h-2zM788 701h2v2h-2zM533 95h2v2h-2zM267 344h2v2h-2zM263 179h2v2h-2zM498 523h2v2h-2zM704 626h2v2h-2zM582 546h2v2h-2zM670 595h2v2h-2zM402 339h2v2h-2zM416 17h2v2h-2zM426 418h2v2h-2zM789 604h2v2h-2zM511 375h2v2h-2zM344 735h2v2h-2zM597 504h2v2h-2zM298 659h2v2h-2zM211 82h2v2h-2zM455 785h2v2h-2zM39 31h2v2h-2zM752 279h2v2h-2zM263 160h2v2h-2zM776 464h2v2h-2zM152 218h2v2h-2zM369 204h2v2h-2zM184 196h2v2h-2zM673 263h2v2h-2zM248 476h2v2h-2zM374 673h2v2h-2zM535 351h2v2h-2zM185 691h2v2h-2zM247 787h2v2h-2zM185 309h2v2h-2zM65 684h2v2h-2zM147 716h2v2h-2zM699 598h2v2h-2zM785 271h2v2h-2zM268 317h2v2h-2zM431 277h2v2h-2zM798 408h2v2h-2zM301 800h2v2h-2zM545 565h2v2h-2zM87 35h2v2h-2zM35 289h2v2h-2zM456 423h2v2h-2zM131 628h2v2h-2zM734 135h2v2h-2zM219 653h2v2h-2zM554 648h2v2h-2zM107 112h2v2h-2zM19 293h2v2h-2zM611 637h2v2h-2zM216 401h2v2h-2zM28 369h2v2h-2zM296 564h2v2h-2zM801 376h2v2h-2zM561 440h2v2h-2zM151 625h2v2h-2zM163 450h2v2h-2zM278 365h2v2h-2zM455 115h2v2h-2zM172 277h2v2h-2zM735 114h2v2h-2zM113 377h2v2h-2z"/><path fill="#fff" fill-opacity="0.627" d="M369 562h1v1h-1zM538 228h1v1h-1zM138 166h1v1h-1zM574 180h1v1h-1zM605 272h1v1h-1zM377 712h1v1h-1zM306 454h1v1h-1zM214 326h1v1h-1zM741 306h1v1h-1zM267 542h1v1h-1zM733 815h1v1h-1zM530 59h1v1h-1zM230 650h1v1h-1zM736 779h1v1h-1zM736 157h1v1h-1zM698 271h1v1h-1zM43 622h1v1h-1zM402 111h1v1h-1zM434 242h1v1h-1zM794 521h1v1h-1zM175 469h1v1h-1zM147 321h1v1h-1zM172 123h1v1h-1zM535 472h1v1h-1zM239 790h1v1h-1zM366 368h1v1h-1zM264 595h1v1h-1zM727 732h1v1h-1zM729 783h1v1h-1zM82 99h1v1h-1zM590 52h1v1h-1zM32 476h1v1h-1zM676 365h1v1h-1zM807 221h1v1h-1zM160 719h1v1h-1zM228 306h1v1h-1zM447 311h1v1h-1zM17 414h1v1h-1zM537 801h1v1h-1zM576 827h1v1h-1zM14 276h1v1h-1zM406 105h1v1h-1zM370 643h1v1h-1zM720 524h1v1h-1zM744 383h1v1h-1zM695 11h1v1h-1zM607 739h1v1h-1zM302 103h1v1h-1zM77 385h1v1h-1zM561 498h1v1h-1zM14 389h1v1h-1zM511 465h1v1h-1zM9 526h1v1h-1zM590 339h1v1h-1zM558 775h1v1h-1zM240 247h1v1h-1zM787 348h1v1h-1zM320 466h1v1h-1zM525 293h1v1h-1zM63 317h1v1h-1zM100 761h1v1h-1zM39 100h1v1h-1zM223 395h1v1h-1zM170 523h1v1h-1zM365 230h1v1h-1zM355 550h1v1h-1zM690 39h1v1h-1zM697 437h1v1h-1zM201 515h1v1h-1zM585 115h1v1h-1zM797 810h1v1h-1zM325 274h1v1h-1zM633 382h1v1h-1zM665 419h1v1h-1zM282 170h1v1h-1zM435 479h1v1h-1zM793 395h1v1h-1zM319 9h1v1h-1zM500 216h1v1h-1zM426 80h1v1h-1zM167 704h1v1h-1zM816 518h1v1h-1zM50 610h1v1h-1zM341 825h1v1h-1zM22 404h1v1h-1zM346 524h1v1h-1zM142 334h1v1h-1zM661 124h1v1h-1zM129 122h1v1h-1zM269 503h1v1h-1zM763 776h1v1h-1zM595 576h1v1h-1zM277 533h1v1h-1zM502 106h1v1h-1zM767 468h1v1h-1zM209 443h1v1h-1zM611 439h1v1h-1zM108 302h1v1h-1zM669 360h1v1h-1zM485 760h1v1h-1zM639 401h1v1h-1zM674 814h1v1h-1zM467 684h1v1h-1zM831 351h1v1h-1zM610 81h1v1h-1zM131 296h1v1h-1zM552 169h1v1h-1zM193 455h1v1h-1zM259 543h1v1h-1zM77 111h1v1h-1zM511 369h1v1h-1zM505 653h1v1h-1zM720 497h1v1h-1zM285 85h1v1h-1zM259 740h1v1h-1zM277 71h1v1h-1zM754 306h1v1h-1zM554 201h1v1h-1zM757 587h1v1h-1zM611 673h1v1h-1zM323 260h1v1h-1zM731 323h1v1h-1zM216 14h1v1h-1zM256 70h1v1h-1zM64 189h1v1h-1zM59 244h1v1h-1zM777 89h1v1h-1zM57 820h1v1h-1zM713 722h1v1h-1zM49 742h1v1h-1zM480 568h1v1h-1zM199 547h1v1h-1zM481 670h1v1h-1zM81 316h1v1h-1zM595 383h1v1h-1zM381 740h1v1h-1zM412 255h1v1h-1zM642 309h1v1h-1zM106 177h1v1h-1zM308 107h1v1h-1zM46 380h1v1h-1zM409 450h1v1h-1zM696 77h1v1h-1zM117 109h1v1h-1zM654 700h1v1h-1zM236 525h1v1h-1zM2 679h1v1h-1zM232 385h1v1h-1zM565 126h1v1h-1zM276 478h1v1h-1zM315 599h1v1h-1zM234 359h1v1h-1zM128 201h1v1h-1zM774 391h1v1h-1zM361 540h1v1h-1zM238 394h1v1h-1zM561 188h1v1h-1zM534 560h1v1h-1zM341 237h1v1h-1zM341 695h1v1h-1zM36 343h1v1h-1zM801 22h1v1h-1zM11 206h1v1h-1zM363 320h1v1h-1zM829 354h1v1h-1zM322 787h1v1h-1zM146 266h1v1h-1zM171 451h1v1h-1zM656 130h1v1h-1zM296 748h1v1h-1zM411 444h1v1h-1zM5 485h1v1h-1zM174 56h1v1h-1zM483 393h1v1h-1zM14 460h1v1h-1zM41 595h1v1h-1zM371 755h1v1h-1zM584 427h1v1h-1zM249 548h1v1h-1zM785 388h1v1h-1zM185 340h1v1h-1zM129 267h1v1h-1zM555 202h1v1h-1zM463 548h1v1h-1zM280 243h1v1h-1zM642 267h1v1h-1zM527 795h1v1h-1zM592 116h1v1h-1zM337 612h1v1h-1zM6 423h1v1h-1zM120 50h1v1h-1zM646 766h1v1h-1zM563 645h1v1h-1zM739 641h1v1h-1zM113 284h1v1h-1zM399 582h1v1h-1zM723 624h1v1h-1zM431 107h1v1h-1zM458 129h1v1h-1zM637 228h1v1h-1zM78 517h1v1h-1zM426 750h1v1h-1zM149 594h1v1h-1zM447 722h1v1h-1zM545 779h1v1h-1zM583 603h1v1h-1zM415 315h1v1h-1zM488 724h1v1h-1zM82 421h1v1h-1zM701 222h1v1h-1zM539 334h1v1h-1zM113 789h1v1h-1zM110 364h1v1h-1zM463 146h1v1h-1zM4 230h1v1h-1zM27 271h1v1h-1zM494 450h1v1h-1zM115 303h1v1h-1zM246 421h1v1h-1zM506 468h1v1h-1zM415 379h1v1h-1zM631 380h1v1h-1zM104 271h1v1h-1zM18 814h1v1h-1zM138 419h1v1h-1zM750 324h1v1h-1zM394 149h1v1h-1zM279 539h1v1h-1zM546 162h1v1h-1zM828 485h1v1h-1zM42 179h1v1h-1zM622 575h1v1h-1zM111 300h1v1h-1zM111 602h1v1h-1zM498 25h1v1h-1zM206 582h1v1h-1zM614 118h1v1h-1zM522 356h1v1h-1zM137 699h1v1h-1zM41 61h1v1h-1zM213 610h1v1h-1zM129 298h1v1h-1zM596 290h1v1h-1zM693 788h1v1h-1zM50 89h1v1h-1zM200 32h1v1h-1zM589 63h1v1h-1zM499 430h1v1h-1zM312 356h1v1h-1zM364 370h1v1h-1zM762 610h1v1h-1zM297 689h1v1h-1zM71 618h1v1h-1zM551 782h1v1h-1zM715 117h1v1h-1zM470 168h1v1h-1zM668 150h1v1h-1zM373 435h1v1h-1zM195 601h1v1h-1zM688 775h1v1h-1zM19 396h1v1h-1zM240 536h1v1h-1zM204 610h1v1h-1zM346 443h1v1h-1zM73 142h1v1h-1zM735 228h1v1h-1zM656 617h1v1h-1zM369 584h1v1h-1zM280 349h1v1h-1zM275 128h1v1h-1zM711 431h1v1h-1zM391 737h1v1h-1zM787 136h1v1h-1zM42 225h1v1h-1zM213 789h1v1h-1zM440 324h1v1h-1zM654 314h1v1h-1zM355 159h1v1h-1zM531 248h1v1h-1zM144 172h1v1h-1zM736 228h1v1h-1zM766 54h1v1h-1zM528 210h1v1h-1zM819 6h1v1h-1zM767 125h1v1h-1zM146 221h1v1h-1zM368 164h1v1h-1zM247 758h1v1h-1zM635 620h1v1h-1zM644 534h1v1h-1zM279 455h1v1h-1zM51 699h1v1h-1zM341 674h1v1h-1zM598 186h1v1h-1zM687 567h1v1h-1zM196 7h1v1h-1zM829 520h1v1h-1zM236 728h1v1h-1zM519 267h1v1h-1zM126 322h1v1h-1zM68 142h1v1h-1zM253 167h1v1h-1zM535 341h1v1h-1zM663 379h1v1h-1zM627 817h1v1h-1zM142 636h1v1h-1zM155 461h1v1h-1zM792 357h1v1h-1zM597 254h1v1h-1zM242 172h1v1h-1zM437 177h1v1h-1zM33 626h1v1h-1zM297 73h1v1h-1zM143 698h1v1h-1zM362 460h1v1h-1zM792 697h1v1h-1zM570 47h1v1h-1zM305 355h1v1h-1zM3 781h1v1h-1zM343 280h1v1h-1zM165 534h1v1h-1zM382 616h1v1h-1zM354 687h1v1h-1zM483 405h1v1h-1zM588 823h1v1h-1zM512 750h1v1h-1zM557 401h1v1h-1zM771 242h1v1h-1zM694 348h1v1h-1zM182 810h1v1h-1zM20 470h1v1h-1zM344 212h1v1h-1zM81 633h1v1h-1zM283 416h1v1h-1zM73 95h1v1h-1zM702 784h1v1h-1zM352 545h1v1h-1zM53 274h1v1h-1zM350 685h1v1h-1zM777 227h1v1h-1zM471 133h1v1h-1zM454 764h1v1h-1zM146 198h1v1h-1zM39 691h1v1h-1zM705 335h1v1h-1zM678 254h1v1h-1zM623 90h1v1h-1zM608 186h1v1h-1zM529 683h1v1h-1zM531 326h1v1h-1zM636 148h1v1h-1zM707 605h1v1h-1zM553 773h1v1h-1zM666 514h1v1h-1zM113 168h1v1h-1zM749 524h1v1h-1zM152 680h1v1h-1zM832 357h1v1h-1zM357 578h1v1h-1zM532 0h1v1h-1zM452 787h1v1h-1zM805 589h1v1h-1zM389 299h1v1h-1zM487 151h1v1h-1zM774 570h1v1h-1zM314 610h1v1h-1zM670 204h1v1h-1zM333 233h1v1h-1zM774 315h1v1h-1zM345 781h1v1h-1zM792 773h1v1h-1zM736 4h1v1h-1zM335 763h1v1h-1zM48 324h1v1h-1zM663 537h1v1h-1zM224 600h1v1h-1zM407 158h1v1h-1zM703 770h1v1h-1zM607 667h1v1h-1zM546 512h1v1h-1zM82 822h1v1h-1zM377 3h1v1h-1zM611 263h1v1h-1zM500 787h1v1h-1zM17 793h1v1h-1zM380 805h1v1h-1zM413 285h1v1h-1zM389 629h1v1h-1zM485 608h1v1h-1zM637 348h1v1h-1zM166 572h1v1h-1zM663 705h1v1h-1zM99 163h1v1h-1zM768 256h1v1h-1zM569 335h1v1h-1zM526 751h1v1h-1zM382 530h1v1h-1zM505 739h1v1h-1zM11 346h1v1h-1zM732 539h1v1h-1zM724 831h1v1h-1zM32 642h1v1h-1zM745 82h1v1h-1zM772 0h1v1h-1zM679 148h1v1h-1zM342 45h1v1h-1zM721 634h1v1h-1zM830 560h1v1h-1zM260 639h1v1h-1zM206 96h1v1h-1zM245 442h1v1h-1zM276 484h1v1h-1zM632 617h1v1h-1zM188 109h1v1h-1zM59 716h1v1h-1zM472 735h1v1h-1zM257 34h1v1h-1zM136 245h1v1h-1zM445 775h1v1h-1zM40 170h1v1h-1zM770 333h1v1h-1zM167 775h1v1h-1zM11 43h1v1h-1zM531 459h1v1h-1zM741 490h1v1h-1zM53 121h1v1h-1zM256 708h1v1h-1zM760 379h1v1h-1zM230 578h1v1h-1zM692 142h1v1h-1zM93 646h1v1h-1zM382 228h1v1h-1zM652 776h1v1h-1z"/><path fill="#fff" fill-opacity="0.784" d="M561 116h1v1h-1zM566 135h1v1h-1zM152 105h1v1h-1zM560 414h1v1h-1zM531 633h1v1h-1zM40 54h1v1h-1zM32 280h1v1h-1zM22 71h1v1h-1zM758 626h1v1h-1zM153 739h1v1h-1zM333 257h1v1h-1zM682 139h1v1h-1zM642 7h1v1h-1zM620 721h1v1h-1zM275 44h1v1h-1zM814 708h1v1h-1zM208 394h1v1h-1zM631 269h1v1h-1zM456 134h1v1h-1zM585 419h1v1h-1zM29 415h1v1h-1zM229 506h1v1h-1zM508 750h1v1h-1zM803 48h1v1h-1zM505 724h1v1h-1zM757 753h1v1h-1zM551 368h1v1h-1zM297 209h1v1h-1zM51 645h1v1h-1zM602 667h1v1h-1zM553 629h1v1h-1zM313 728h1v1h-1zM593 183h1v1h-1zM817 436h1v1h-1zM468 727h1v1h-1zM341 611h1v1h-1zM13 549h1v1h-1zM181 284h1v1h-1zM828 249h1v1h-1zM412 116h1v1h-1zM644 828h1v1h-1zM709 499h1v1h-1zM534 48h1v1h-1zM125 641h1v1h-1zM315 24h1v1h-1zM630 153h1v1h-1zM477 707h1v1h-1zM787 307h1v1h-1zM511 75h1v1h-1zM400 781h1v1h-1zM372 822h1v1h-1zM51 688h1v1h-1zM223 693h1v1h-1zM383 72h1v1h-1zM32 783h1v1h-1zM313 815h1v1h-1zM419 469h1v1h-1zM672 746h1v1h-1zM159 266h1v1h-1zM152 725h1v1h-1zM787 13h1v1h-1zM609 747h1v1h-1zM418 468h1v1h-1zM73 462h1v1h-1zM121 82h1v1h-1zM653 275h1v1h-1zM361 548h1v1h-1zM277 525h1v1h-1zM200 76h1v1h-1zM7 649h1v1h-1zM191 650h1v1h-1zM554 631h1v1h-1zM83 786h1v1h-1zM452 432h1v1h-1zM594 394h1v1h-1zM616 176h1v1h-1zM342 414h1v1h-1zM590 603h1v1h-1zM783 456h1v1h-1zM503 764h1v1h-1zM346 751h1v1h-1zM754 466h1v1h-1zM337 101h1v1h-1zM201 241h1v1h-1zM544 471h1v1h-1zM121 711h1v1h-1zM505 525h1v1h-1zM717 446h1v1h-1zM546 214h1v1h-1zM324 625h1v1h-1zM74 766h1v1h-1zM734 677h1v1h-1zM536 218h1v1h-1zM762 474h1v1h-1zM61 420h1v1h-1zM761 525h1v1h-1zM623 239h1v1h-1zM58 352h1v1h-1zM233 176h1v1h-1zM438 107h1v1h-1zM341 266h1v1h-1zM256 528h1v1h-1zM287 218h1v1h-1zM518 170h1v1h-1zM229 203h1v1h-1zM353 230h1v1h-1zM110 49h1v1h-1zM439 536h1v1h-1zM69 533h1v1h-1zM779 698h1v1h-1zM531 348h1v1h-1zM349 130h1v1h-1zM460 496h1v1h-1zM312 465h1v1h-1zM797 431h1v1h-1zM813 690h1v1h-1zM403 736h1v1h-1zM729 479h1v1h-1zM201 222h1v1h-1zM97 503h1v1h-1zM455 382h1v1h-1zM453 526h1v1h-1zM38 335h1v1h-1zM120 521h1v1h-1zM89 316h1v1h-1zM589 22h1v1h-1zM805 312h1v1h-1zM465 796h1v1h-1zM783 137h1v1h-1zM514 210h1v1h-1zM749 363h1v1h-1zM250 33h1v1h-1zM340 134h1v1h-1zM110 40h1v1h-1zM611 548h1v1h-1zM581 704h1v1h-1zM589 87h1v1h-1zM343 226h1v1h-1zM439 36h1v1h-1zM610 313h1v1h-1zM45 90h1v1h-1zM155 414h1v1h-1zM563 181h1v1h-1zM229 256h1v1h-1zM575 189h1v1h-1zM643 211h1v1h-1zM133 299h1v1h-1zM249 449h1v1h-1zM187 134h1v1h-1zM269 281h1v1h-1zM602 664h1v1h-1zM124 145h1v1h-1zM113 650h1v1h-1zM180 401h1v1h-1zM346 11h1v1h-1zM630 433h1v1h-1zM716 313h1v1h-1zM437 595h1v1h-1zM256 184h1v1h-1zM435 76h1v1h-1zM441 814h1v1h-1zM131 174h1v1h-1zM364 777h1v1h-1zM16 309h1v1h-1zM49 317h1v1h-1zM427 59h1v1h-1zM275 796h1v1h-1zM575 355h1v1h-1zM386 197h1v1h-1zM745 200h1v1h-1zM579 766h1v1h-1zM333 114h1v1h-1zM253 444h1v1h-1zM348 691h1v1h-1zM33 579h1v1h-1zM596 613h1v1h-1zM245 808h1v1h-1zM724 787h1v1h-1zM203 393h1v1h-1zM320 649h1v1h-1zM81 523h1v1h-1zM415 217h1v1h-1zM312 240h1v1h-1zM218 541h1v1h-1zM230 46h1v1h-1zM586 821h1v1h-1zM165 348h1v1h-1zM409 752h1v1h-1zM576 681h1v1h-1zM497 234h1v1h-1zM811 651h1v1h-1zM249 350h1v1h-1zM566 246h1v1h-1zM241 370h1v1h-1zM462 335h1v1h-1zM62 734h1v1h-1zM194 75h1v1h-1zM815 781h1v1h-1zM751 573h1v1h-1zM140 806h1v1h-1zM236 2h1v1h-1zM719 318h1v1h-1zM458 575h1v1h-1zM480 756h1v1h-1zM32 724h1v1h-1zM224 511h1v1h-1zM202 304h1v1h-1zM389 488h1v1h-1zM184 132h1v1h-1zM29 637h1v1h-1zM0 569h1v1h-1zM209 310h1v1h-1zM608 799h1v1h-1zM542 148h1v1h-1zM33 413h1v1h-1zM565 363h1v1h-1zM278 581h1v1h-1zM578 745h1v1h-1zM15 614h1v1h-1zM253 194h1v1h-1zM558 16h1v1h-1zM602 335h1v1h-1zM612 143h1v1h-1zM575 595h1v1h-1zM282 196h1v1h-1zM676 796h1v1h-1zM496 375h1v1h-1zM148 244h1v1h-1zM506 659h1v1h-1zM63 636h1v1h-1zM685 325h1v1h-1zM461 557h1v1h-1zM610 401h1v1h-1zM302 352h1v1h-1zM184 361h1v1h-1zM642 69h1v1h-1zM61 33h1v1h-1zM3 809h1v1h-1zM764 430h1v1h-1zM780 399h1v1h-1zM304 464h1v1h-1zM337 576h1v1h-1zM243 346h1v1h-1zM44 703h1v1h-1zM176 322h1v1h-1zM785 808h1v1h-1zM442 725h1v1h-1zM506 567h1v1h-1zM262 360h1v1h-1zM224 57h1v1h-1zM455 680h1v1h-1zM130 94h1v1h-1zM547 484h1v1h-1zM507 672h1v1h-1zM769 651h1v1h-1zM50 640h1v1h-1zM532 244h1v1h-1zM221 513h1v1h-1zM344 302h1v1h-1zM404 20h1v1h-1zM412 325h1v1h-1zM524 39h1v1h-1zM762 112h1v1h-1zM329 198h1v1h-1zM324 787h1v1h-1zM38 728h1v1h-1zM726 198h1v1h-1zM722 296h1v1h-1zM297 408h1v1h-1zM53 142h1v1h-1zM437 636h1v1h-1zM33 115h1v1h-1zM400 465h1v1h-1zM679 105h1v1h-1zM63 751h1v1h-1zM661 121h1v1h-1zM384 773h1v1h-1zM493 214h1v1h-1zM408 809h1v1h-1zM752 1h1v1h-1zM764 331h1v1h-1zM375 129h1v1h-1zM790 368h1v1h-1zM652 121h1v1h-1zM505 206h1v1h-1zM513 560h1v1h-1zM22 203h1v1h-1zM570 598h1v1h-1zM319 773h1v1h-1zM223 537h1v1h-1zM198 750h1v1h-1zM572 778h1v1h-1zM555 153h1v1h-1zM451 719h1v1h-1zM114 192h1v1h-1zM500 21h1v1h-1zM30 111h1v1h-1zM225 292h1v1h-1zM598 60h1v1h-1zM744 333h1v1h-1zM231 761h1v1h-1zM757 30h1v1h-1zM625 558h1v1h-1zM780 698h1v1h-1zM383 161h1v1h-1zM495 72h1v1h-1zM619 596h1v1h-1zM633 388h1v1h-1zM7 762h1v1h-1zM724 353h1v1h-1zM358 625h1v1h-1zM120 248h1v1h-1zM330 274h1v1h-1zM754 346h1v1h-1zM353 328h1v1h-1zM320 683h1v1h-1zM294 74h1v1h-1zM456 368h1v1h-1zM660 527h1v1h-1zM422 140h1v1h-1zM544 744h1v1h-1zM221 250h1v1h-1zM197 774h1v1h-1zM76 172h1v1h-1zM471 128h1v1h-1zM109 670h1v1h-1zM56 392h1v1h-1zM210 111h1v1h-1zM465 824h1v1h-1zM682 199h1v1h-1zM289 165h1v1h-1zM214 818h1v1h-1zM739 297h1v1h-1zM231 482h1v1h-1zM825 261h1v1h-1zM410 605h1v1h-1zM419 173h1v1h-1zM564 370h1v1h-1zM609 45h1v1h-1zM612 519h1v1h-1zM255 599h1v1h-1zM786 639h1v1h-1zM708 102h1v1h-1zM359 719h1v1h-1zM642 382h1v1h-1zM137 357h1v1h-1zM87 556h1v1h-1zM719 546h1v1h-1zM811 207h1v1h-1zM22 34h1v1h-1zM399 766h1v1h-1zM135 99h1v1h-1zM541 482h1v1h-1zM116 317h1v1h-1zM114 322h1v1h-1zM534 305h1v1h-1zM475 655h1v1h-1zM786 800h1v1h-1zM568 737h1v1h-1zM361 73h1v1h-1zM242 634h1v1h-1zM245 357h1v1h-1zM753 183h1v1h-1zM430 16h1v1h-1zM542 648h1v1h-1zM363 650h1v1h-1zM571 386h1v1h-1zM448 161h1v1h-1zM799 123h1v1h-1zM586 86h1v1h-1zM367 87h1v1h-1zM409 87h1v1h-1zM209 785h1v1h-1zM328 397h1v1h-1zM555 83h1v1h-1zM453 98h1v1h-1zM276 152h1v1h-1zM441 346h1v1h-1zM252 318h1v1h-1zM221 129h1v1h-1zM444 328h1v1h-1zM182 365h1v1h-1zM366 184h1v1h-1zM258 784h1v1h-1zM626 326h1v1h-1zM441 824h1v1h-1zM724 560h1v1h-1zM172 756h1v1h-1zM116 368h1v1h-1zM553 259h1v1h-1zM149 701h1v1h-1zM346 233h1v1h-1zM208 172h1v1h-1zM643 733h1v1h-1zM390 11h1v1h-1zM669 742h2v2h-2zM525 420h2v2h-2zM468 441h2v2h-2zM717 809h2v2h-2zM61 556h2v2h-2zM90 326h2v2h-2zM52 383h2v2h-2zM372 64h2v2h-2zM560 447h2v2h-2zM516 24h2v2h-2zM739 829h2v2h-2zM681 55h2v2h-2zM697 279h2v2h-2zM799 702h2v2h-2zM700 61h2v2h-2zM83 501h2v2h-2zM637 473h2v2h-2zM754 466h2v2h-2zM828 19h2v2h-2zM534 436h2v2h-2zM614 635h2v2h-2zM605 585h2v2h-2zM577 435h2v2h-2zM287 513h2v2h-2zM499 706h2v2h-2zM623 478h2v2h-2zM267 307h2v2h-2zM153 366h2v2h-2zM682 40h2v2h-2zM746 703h2v2h-2zM188 607h2v2h-2zM719 86h2v2h-2zM506 345h2v2h-2zM423 720h2v2h-2zM324 574h2v2h-2zM102 255h2v2h-2zM234 339h2v2h-2zM1 239h2v2h-2zM119 399h2v2h-2zM185 51h2v2h-2z"/><path fill="#fff" fill-opacity="0.941" d="M643 359h1v1h-1zM64 528h1v1h-1zM485 335h1v1h-1zM444 579h1v1h-1zM239 355h1v1h-1zM417 103h1v1h-1zM217 717h1v1h-1zM69 784h1v1h-1zM217 332h1v1h-1zM214 222h1v1h-1zM325 726h1v1h-1zM360 403h1v1h-1zM175 234h1v1h-1zM310 594h1v1h-1zM220 171h1v1h-1zM521 541h1v1h-1zM30 139h1v1h-1zM740 306h1v1h-1zM539 824h1v1h-1zM309 567h1v1h-1zM114 253h1v1h-1zM813 349h1v1h-1zM792 74h1v1h-1zM599 108h1v1h-1zM167 461h1v1h-1zM74 275h1v1h-1zM505 71h1v1h-1zM809 151h1v1h-1zM459 799h1v1h-1zM267 416h1v1h-1zM115 129h1v1h-1zM436 399h1v1h-1zM689 707h1v1h-1zM616 821h1v1h-1zM13 275h1v1h-1zM134 1h1v1h-1zM632 515h1v1h-1zM303 326h1v1h-1zM786 415h1v1h-1zM629 183h1v1h-1zM27 73h1v1h-1zM220 50h1v1h-1zM421 476h1v1h-1zM653 319h1v1h-1zM698 803h1v1h-1zM714 530h1v1h-1zM310 171h1v1h-1zM270 87h1v1h-1zM16 103h1v1h-1zM472 611h1v1h-1zM477 290h1v1h-1zM777 502h1v1h-1zM334 694h1v1h-1zM145 87h1v1h-1zM110 150h1v1h-1zM581 300h1v1h-1zM356 250h1v1h-1zM368 346h1v1h-1zM466 173h1v1h-1zM239 171h1v1h-1zM756 82h1v1h-1zM827 827h1v1h-1zM627 557h1v1h-1zM816 459h1v1h-1zM289 164h1v1h-1zM496 426h1v1h-1zM634 240h1v1h-1zM613 740h1v1h-1zM260 22h1v1h-1zM290 343h1v1h-1zM91 813h1v1h-1zM393 139h1v1h-1zM91 418h1v1h-1zM346 370h1v1h-1zM750 80h1v1h-1zM553 584h1v1h-1zM153 744h1v1h-1zM30 743h1v1h-1zM115 27h1v1h-1zM568 697h1v1h-1zM522 625h1v1h-1zM410 237h1v1h-1zM695 266h1v1h-1zM557 355h1v1h-1zM816 565h1v1h-1zM240 79h1v1h-1zM190 264h1v1h-1zM83 39h1v1h-1zM390 193h1v1h-1zM237 50h1v1h-1zM512 217h1v1h-1zM633 101h1v1h-1zM150 813h1v1h-1zM722 301h1v1h-1zM7 169h1v1h-1zM239 81h1v1h-1zM10 585h1v1h-1zM509 330h1v1h-1zM4 291h1v1h-1zM621 580h1v1h-1zM715 386h1v1h-1zM605 696h1v1h-1zM351 674h1v1h-1zM150 388h1v1h-1zM328 433h1v1h-1zM746 143h1v1h-1zM209 182h1v1h-1zM34 77h1v1h-1zM538 381h1v1h-1zM562 659h1v1h-1zM480 139h1v1h-1zM365 493h1v1h-1zM161 111h1v1h-1zM525 112h1v1h-1zM485 402h1v1h-1zM515 5h1v1h-1zM137 230h1v1h-1zM769 65h1v1h-1zM290 330h1v1h-1zM253 570h1v1h-1zM436 290h1v1h-1zM372 225h1v1h-1zM45 715h1v1h-1zM663 185h1v1h-1zM332 445h1v1h-1zM147 452h1v1h-1zM11 338h1v1h-1zM330 783h1v1h-1zM224 142h1v1h-1zM317 252h1v1h-1zM682 21h1v1h-1zM308 819h1v1h-1zM392 329h1v1h-1zM798 629h1v1h-1zM557 676h1v1h-1zM73 603h1v1h-1zM594 519h1v1h-1zM29 806h1v1h-1zM567 580h1v1h-1zM187 109h1v1h-1zM378 297h1v1h-1zM161 132h1v1h-1zM288 309h1v1h-1zM82 264h1v1h-1zM170 316h1v1h-1zM442 345h1v1h-1zM594 559h1v1h-1zM74 319h1v1h-1zM103 330h1v1h-1zM739 250h1v1h-1zM272 273h1v1h-1zM504 230h1v1h-1zM497 615h1v1h-1zM610 758h1v1h-1zM159 72h1v1h-1zM555 688h1v1h-1zM266 53h1v1h-1zM532 9h1v1h-1zM228 728h1v1h-1zM309 424h1v1h-1zM521 722h1v1h-1zM636 703h1v1h-1zM736 790h1v1h-1zM734 133h1v1h-1zM464 114h1v1h-1zM711 698h1v1h-1zM426 474h1v1h-1zM735 689h1v1h-1zM132 587h1v1h-1zM400 437h1v1h-1zM522 777h1v1h-1zM52 536h1v1h-1zM428 262h1v1h-1zM31 329h1v1h-1zM318 755h1v1h-1zM27 607h1v1h-1zM444 363h1v1h-1zM651 200h1v1h-1zM53 491h1v1h-1zM457 49h1v1h-1zM309 191h1v1h-1zM225 157h1v1h-1zM731 622h1v1h-1zM458 361h1v1h-1zM482 92h1v1h-1zM680 718h1v1h-1zM49 166h1v1h-1zM809 25h1v1h-1zM644 362h1v1h-1zM373 401h1v1h-1zM88 200h1v1h-1zM715 662h1v1h-1zM691 771h1v1h-1zM602 2h1v1h-1zM397 385h1v1h-1zM42 217h1v1h-1zM465 570h1v1h-1zM799 27h1v1h-1zM573 479h1v1h-1zM503 429h1v1h-1zM339 103h1v1h-1zM117 690h1v1h-1zM509 138h1v1h-1zM667 116h1v1h-1zM423 243h1v1h-1zM157 232h1v1h-1zM746 489h1v1h-1zM506 709h1v1h-1zM374 390h1v1h-1zM154 11h1v1h-1zM96 304h1v1h-1zM91 474h1v1h-1zM218 367h1v1h-1zM258 269h1v1h-1zM524 620h1v1h-1zM153 131h1v1h-1zM417 665h1v1h-1zM332 144h1v1h-1zM499 258h1v1h-1zM184 13h1v1h-1zM750 667h1v1h-1zM110 561h1v1h-1zM141 614h1v1h-1zM31 109h1v1h-1zM292 251h1v1h-1zM348 619h1v1h-1zM90 227h1v1h-1zM222 604h1v1h-1zM36 100h1v1h-1zM241 377h1v1h-1zM691 728h1v1h-1zM143 115h1v1h-1zM425 378h1v1h-1zM487 690h1v1h-1zM94 372h1v1h-1zM649 67h1v1h-1zM574 604h1v1h-1zM294 823h1v1h-1zM291 826h1v1h-1zM418 674h1v1h-1zM528 590h1v1h-1zM168 494h1v1h-1zM384 71h1v1h-1zM694 221h1v1h-1zM120 482h1v1h-1zM379 734h1v1h-1zM164 787h1v1h-1zM282 652h1v1h-1zM96 179h1v1h-1zM586 267h1v1h-1zM271 357h1v1h-1zM196 34h1v1h-1zM497 254h1v1h-1zM87 697h1v1h-1zM538 110h1v1h-1zM192 567h1v1h-1zM401 314h1v1h-1zM538 603h1v1h-1zM292 423h1v1h-1zM93 539h1v1h-1zM172 385h1v1h-1zM255 189h1v1h-1zM46 504h1v1h-1zM289 116h1v1h-1zM134 412h1v1h-1zM446 589h1v1h-1zM744 352h1v1h-1zM374 536h1v1h-1zM178 586h1v1h-1zM577 114h1v1h-1zM263 145h1v1h-1zM814 98h1v1h-1zM556 27h1v1h-1zM105 186h1v1h-1zM648 119h1v1h-1zM565 441h1v1h-1zM752 87h1v1h-1zM237 125h1v1h-1zM178 342h1v1h-1zM430 448h1v1h-1zM616 823h1v1h-1zM246 107h1v1h-1zM595 196h1v1h-1zM260 633h1v1h-1zM398 363h1v1h-1zM801 34h1v1h-1zM237 518h1v1h-1zM605 535h1v1h-1zM364 825h1v1h-1zM790 476h1v1h-1zM671 178h1v1h-1zM163 452h1v1h-1zM277 298h1v1h-1zM648 781h1v1h-1zM445 34h1v1h-1zM309 108h1v1h-1zM76 250h1v1h-1zM203 811h1v1h-1zM549 298h1v1h-1zM352 261h1v1h-1zM333 456h1v1h-1zM650 760h1v1h-1zM681 141h1v1h-1zM509 692h1v1h-1zM166 820h1v1h-1zM755 272h1v1h-1zM420 775h1v1h-1zM356 205h1v1h-1zM584 301h1v1h-1zM105 588h1v1h-1zM426 223h1v1h-1zM334 285h1v1h-1zM708 571h1v1h-1zM307 722h1v1h-1zM597 556h1v1h-1zM44 657h1v1h-1zM188 437h1v1h-1zM735 668h1v1h-1zM138 417h1v1h-1zM771 705h1v1h-1zM737 586h1v1h-1zM24 217h1v1h-1zM578 542h1v1h-1zM521 592h1v1h-1zM200 15h1v1h-1zM311 412h1v1h-1zM19 343h1v1h-1zM38 520h1v1h-1zM427 281h1v1h-1zM268 656h1v1h-1zM75 95h1v1h-1zM252 544h1v1h-1zM167 670h1v1h-1zM123 39h1v1h-1zM664 98h1v1h-1zM60 647h1v1h-1zM459 597h1v1h-1zM779 667h1v1h-1zM831 777h1v1h-1zM559 34h1v1h-1zM110 476h1v1h-1zM328 249h1v1h-1zM617 304h1v1h-1zM669 560h1v1h-1zM37 473h1v1h-1zM221 578h1v1h-1zM125 647h1v1h-1zM725 574h1v1h-1zM189 252h1v1h-1zM149 416h1v1h-1zM184 623h1v1h-1zM209 673h1v1h-1zM573 778h1v1h-1zM251 400h1v1h-1zM375 275h1v1h-1zM414 758h1v1h-1zM115 55h1v1h-1zM309 181h1v1h-1zM621 311h1v1h-1zM188 785h1v1h-1zM33 340h1v1h-1zM200 89h1v1h-1zM157 731h1v1h-1zM58 595h1v1h-1zM802 694h1v1h-1zM467 216h1v1h-1zM558 82h1v1h-1zM37 190h1v1h-1zM754 587h1v1h-1zM315 99h1v1h-1zM784 57h1v1h-1zM274 790h1v1h-1zM623 115h1v1h-1zM395 416h1v1h-1zM153 601h1v1h-1zM819 397h1v1h-1zM353 342h1v1h-1zM580 774h1v1h-1zM408 452h1v1h-1zM684 691h1v1h-1zM419 743h1v1h-1zM776 10h1v1h-1zM675 605h1v1h-1zM610 142h1v1h-1zM53 639h1v1h-1zM228 465h1v1h-1zM717 742h1v1h-1zM110 158h1v1h-1zM595 381h1v1h-1zM755 470h1v1h-1zM760 788h1v1h-1zM790 806h1v1h-1zM71 276h1v1h-1zM684 569h1v1h-1zM709 763h1v1h-1zM361 712h1v1h-1zM398 747h1v1h-1zM126 152h1v1h-1zM45 492h1v1h-1zM379 159h1v1h-1zM349 791h1v1h-1zM472 684h1v1h-1zM611 407h1v1h-1zM643 49h1v1h-1zM426 179h1v1h-1zM415 290h1v1h-1zM448 496h1v1h-1zM651 41h1v1h-1zM166 715h1v1h-1zM103 196h1v1h-1zM496 628h1v1h-1zM575 64h1v1h-1zM298 405h1v1h-1zM575 467h1v1h-1zM456 301h1v1h-1zM33 103h1v1h-1zM156 371h1v1h-1zM699 618h1v1h-1zM214 793h1v1h-1zM82 40h1v1h-1zM115 311h1v1h-1zM682 648h1v1h-1zM118 382h1v1h-1zM451 137h1v1h-1zM696 542h1v1h-1zM743 476h1v1h-1zM523 623h1v1h-1zM633 268h1v1h-1zM439 243h1v1h-1zM253 636h1v1h-1zM621 10h1v1h-1zM125 527h1v1h-1zM47 422h1v1h-1zM18 826h1v1h-1zM803 586h1v1h-1zM175 224h1v1h-1zM593 660h1v1h-1zM714 330h1v1h-1zM140 805h1v1h-1zM697 474h1v1h-1z"/><path fill="#fff" fill-opacity="1.000" d="M796 349h1v1h-1zM644 241h1v1h-1zM34 63h1v1h-1zM514 751h1v1h-1zM112 729h1v1h-1zM387 219h1v1h-1zM721 161h1v1h-1zM762 147h1v1h-1zM689 556h1v1h-1zM288 817h1v1h-1zM762 350h1v1h-1zM42 325h1v1h-1zM113 503h1v1h-1zM221 87h1v1h-1zM35 690h1v1h-1zM210 137h1v1h-1zM754 360h1v1h-1zM426 139h1v1h-1zM545 311h1v1h-1zM795 240h1v1h-1zM380 261h1v1h-1zM585 359h1v1h-1zM607 811h1v1h-1zM331 748h1v1h-1zM502 682h1v1h-1zM470 580h1v1h-1zM319 375h1v1h-1zM470 581h1v1h-1zM530 306h1v1h-1zM631 108h1v1h-1zM251 245h1v1h-1zM305 237h1v1h-1zM66 799h1v1h-1zM572 830h1v1h-1zM829 714h1v1h-1zM446 770h1v1h-1zM92 37h1v1h-1zM195 136h1v1h-1zM93 157h1v1h-1zM330 181h1v1h-1zM654 821h1v1h-1zM583 136h1v1h-1zM64 173h1v1h-1zM542 267h1v1h-1zM384 808h1v1h-1zM196 533h1v1h-1zM353 372h1v1h-1zM525 134h1v1h-1zM230 100h1v1h-1zM18 444h1v1h-1zM165 693h1v1h-1zM593 211h1v1h-1zM165 200h1v1h-1zM163 97h1v1h-1zM206 538h1v1h-1zM316 269h1v1h-1zM453 532h1v1h-1zM774 324h1v1h-1zM188 791h1v1h-1zM618 764h1v1h-1zM601 512h1v1h-1zM706 372h1v1h-1zM719 113h1v1h-1zM679 694h1v1h-1zM323 509h1v1h-1zM332 694h1v1h-1zM140 76h1v1h-1zM653 509h1v1h-1zM209 270h1v1h-1zM578 820h1v1h-1zM440 384h1v1h-1zM187 303h1v1h-1zM654 608h1v1h-1zM152 544h1v1h-1zM734 790h1v1h-1zM571 343h1v1h-1zM61 163h1v1h-1zM601 167h1v1h-1zM214 728h1v1h-1zM592 217h1v1h-1zM536 806h1v1h-1zM71 17h1v1h-1zM637 473h1v1h-1zM671 417h1v1h-1zM756 113h1v1h-1zM572 12h1v1h-1zM501 444h1v1h-1zM101 552h1v1h-1zM536 163h1v1h-1zM559 366h1v1h-1zM630 12h1v1h-1zM417 85h1v1h-1zM197 378h1v1h-1zM360 611h1v1h-1zM349 323h1v1h-1zM321 497h1v1h-1zM180 447h1v1h-1zM592 469h1v1h-1zM696 12h1v1h-1zM540 347h1v1h-1zM151 584h1v1h-1zM822 71h1v1h-1zM205 291h1v1h-1zM341 514h1v1h-1zM335 463h1v1h-1zM809 752h1v1h-1zM112 716h1v1h-1zM172 239h1v1h-1zM718 556h1v1h-1zM238 540h1v1h-1zM653 179h1v1h-1zM172 760h1v1h-1zM163 43h1v1h-1zM173 357h1v1h-1zM245 317h1v1h-1zM290 150h1v1h-1zM477 313h1v1h-1zM229 599h1v1h-1zM266 341h1v1h-1zM617 129h1v1h-1zM702 260h1v1h-1zM723 108h1v1h-1zM697 484h1v1h-1zM236 198h1v1h-1zM123 204h1v1h-1zM424 406h1v1h-1zM469 663h1v1h-1zM577 689h1v1h-1zM83 285h1v1h-1zM675 145h1v1h-1zM567 630h1v1h-1zM246 712h1v1h-1zM416 245h1v1h-1zM295 550h1v1h-1zM366 626h1v1h-1zM737 66h1v1h-1zM373 1h1v1h-1zM332 704h1v1h-1zM732 343h1v1h-1zM87 85h1v1h-1zM429 348h1v1h-1zM574 15h1v1h-1zM281 607h1v1h-1zM178 243h1v1h-1zM560 400h1v1h-1zM292 12h1v1h-1zM806 404h1v1h-1zM658 280h1v1h-1zM796 284h1v1h-1zM433 732h1v1h-1zM169 155h1v1h-1zM549 338h1v1h-1zM554 582h1v1h-1zM566 322h1v1h-1zM492 355h1v1h-1zM233 501h1v1h-1zM529 689h1v1h-1zM598 2h1v1h-1zM571 695h1v1h-1zM95 541h1v1h-1zM68 576h1v1h-1zM817 706h1v1h-1zM584 134h1v1h-1zM316 811h1v1h-1zM756 129h1v1h-1zM682 203h1v1h-1zM472 376h1v1h-1zM803 745h1v1h-1zM346 380h1v1h-1zM187 612h1v1h-1zM666 616h1v1h-1zM326 785h1v1h-1zM804 769h1v1h-1zM151 711h1v1h-1zM438 172h1v1h-1zM410 83h1v1h-1zM40 626h1v1h-1zM696 183h1v1h-1zM208 606h1v1h-1zM823 782h1v1h-1zM244 510h1v1h-1zM512 411h1v1h-1zM821 368h1v1h-1zM293 593h1v1h-1zM282 583h1v1h-1zM244 372h1v1h-1zM412 708h1v1h-1zM641 301h1v1h-1zM762 163h1v1h-1zM705 619h1v1h-1zM707 199h1v1h-1zM654 646h1v1h-1zM107 289h1v1h-1zM728 647h1v1h-1zM458 611h1v1h-1zM452 466h1v1h-1zM96 42h1v1h-1zM707 312h1v1h-1zM609 750h1v1h-1zM523 564h1v1h-1zM256 423h1v1h-1zM262 249h1v1h-1zM175 829h1v1h-1zM168 218h1v1h-1zM680 320h1v1h-1zM115 44h1v1h-1zM211 602h1v1h-1zM213 106h1v1h-1zM191 64h1v1h-1zM212 246h1v1h-1zM530 215h1v1h-1zM235 720h1v1h-1zM616 179h1v1h-1zM604 60h1v1h-1zM426 541h1v1h-1zM744 533h1v1h-1zM480 216h1v1h-1zM114 623h1v1h-1zM260 688h1v1h-1zM209 384h1v1h-1zM813 69h1v1h-1zM502 503h1v1h-1zM794 96h1v1h-1zM650 402h1v1h-1zM27 72h1v1h-1zM500 666h1v1h-1zM498 443h1v1h-1zM622 311h1v1h-1zM65 262h1v1h-1zM548 533h1v1h-1zM510 202h1v1h-1zM669 245h1v1h-1zM759 820h1v1h-1zM541 378h1v1h-1zM183 311h1v1h-1zM227 203h1v1h-1zM788 702h1v1h-1zM9 202h1v1h-1zM533 95h1v1h-1zM327 269h1v1h-1zM632 287h1v1h-1zM426 787h1v1h-1zM366 679h1v1h-1zM178 788h1v1h-1zM233 199h1v1h-1zM472 776h1v1h-1zM760 442h1v1h-1zM629 28h1v1h-1zM465 185h1v1h-1zM399 288h1v1h-1zM163 639h1v1h-1zM636 241h1v1h-1zM268 345h1v1h-1zM339 428h1v1h-1zM751 20h1v1h-1zM659 171h1v1h-1zM264 179h1v1h-1zM661 743h1v1h-1zM540 686h1v1h-1zM640 571h1v1h-1zM401 483h1v1h-1zM499 524h1v1h-1zM158 768h1v1h-1zM540 757h1v1h-1zM624 376h1v1h-1zM651 299h1v1h-1zM417 84h1v1h-1zM409 460h1v1h-1zM403 80h1v1h-1zM42 205h1v1h-1zM705 627h1v1h-1zM670 335h1v1h-1zM415 211h1v1h-1zM582 546h1v1h-1zM814 349h1v1h-1zM171 469h1v1h-1zM124 442h1v1h-1zM265 691h1v1h-1zM671 596h1v1h-1zM267 756h1v1h-1zM402 340h1v1h-1zM583 359h1v1h-1zM304 117h1v1h-1zM74 200h1v1h-1zM416 17h1v1h-1zM176 226h1v1h-1zM701 349h1v1h-1zM427 419h1v1h-1zM697 528h1v1h-1zM392 525h1v1h-1zM790 605h1v1h-1zM511 376h1v1h-1zM355 760h1v1h-1zM92 687h1v1h-1zM345 736h1v1h-1zM597 504h1v1h-1zM309 396h1v1h-1zM299 659h1v1h-1zM277 45h1v1h-1zM298 340h1v1h-1zM211 82h1v1h-1zM507 693h1v1h-1zM456 785h1v1h-1zM293 200h1v1h-1zM39 31h1v1h-1zM745 99h1v1h-1zM94 349h1v1h-1zM793 212h1v1h-1zM368 251h1v1h-1zM752 279h1v1h-1zM30 405h1v1h-1zM263 161h1v1h-1zM757 789h1v1h-1zM776 465h1v1h-1zM152 218h1v1h-1zM186 433h1v1h-1zM652 593h1v1h-1zM369 205h1v1h-1zM664 410h1v1h-1zM184 196h1v1h-1zM96 718h1v1h-1zM673 263h1v1h-1zM249 477h1v1h-1zM721 198h1v1h-1zM100 531h1v1h-1zM827 158h1v1h-1zM264 744h1v1h-1zM744 596h1v1h-1zM374 674h1v1h-1zM757 604h1v1h-1zM604 727h1v1h-1zM165 555h1v1h-1zM535 352h1v1h-1zM823 200h1v1h-1zM174 113h1v1h-1zM186 692h1v1h-1zM458 547h1v1h-1zM326 246h1v1h-1zM248 788h1v1h-1zM321 243h1v1h-1zM281 441h1v1h-1zM560 255h1v1h-1zM185 310h1v1h-1zM278 552h1v1h-1zM151 317h1v1h-1zM65 685h1v1h-1zM148 716h1v1h-1zM625 274h1v1h-1zM699 599h1v1h-1zM461 798h1v1h-1zM785 271h1v1h-1zM268 318h1v1h-1zM487 536h1v1h-1zM499 282h1v1h-1zM431 278h1v1h-1zM209 573h1v1h-1zM736 783h1v1h-1zM798 409h1v1h-1zM302 800h1v1h-1zM244 582h1v1h-1zM546 566h1v1h-1zM512 1h1v1h-1zM113 266h1v1h-1zM538 393h1v1h-1zM220 231h1v1h-1zM87 36h1v1h-1zM36 290h1v1h-1zM456 423h1v1h-1zM132 628h1v1h-1zM182 406h1v1h-1zM142 360h1v1h-1zM133 716h1v1h-1zM735 135h1v1h-1zM647 392h1v1h-1zM786 619h1v1h-1zM219 653h1v1h-1zM555 649h1v1h-1zM83 698h1v1h-1zM376 698h1v1h-1zM107 113h1v1h-1zM238 26h1v1h-1zM19 293h1v1h-1zM14 14h1v1h-1zM612 638h1v1h-1zM658 451h1v1h-1zM703 138h1v1h-1zM216 401h1v1h-1zM161 785h1v1h-1zM660 258h1v1h-1zM29 370h1v1h-1zM360 650h1v1h-1zM297 564h1v1h-1zM566 393h1v1h-1zM719 811h1v1h-1zM532 596h1v1h-1zM579 370h1v1h-1zM665 538h1v1h-1zM153 392h1v1h-1zM387 60h1v1h-1zM828 635h1v1h-1zM801 377h1v1h-1zM640 11h1v1h-1zM144 735h1v1h-1zM366 624h1v1h-1zM149 99h1v1h-1zM253 808h1v1h-1zM562 441h1v1h-1zM468 91h1v1h-1zM671 774h1v1h-1zM151 625h1v1h-1zM164 451h1v1h-1zM279 365h1v1h-1zM456 115h1v1h-1zM502 414h1v1h-1zM762 325h1v1h-1zM172 277h1v1h-1zM762 360h1v1h-1zM735 114h1v1h-1zM114 378h1v1h-1zM539 476h1v1h-1zM670 742h1v1h-1zM526 420h1v1h-1zM469 441h1v1h-1zM718 809h1v1h-1zM62 556h1v1h-1zM91 326h1v1h-1zM53 383h1v1h-1zM373 64h1v1h-1zM561 447h1v1h-1zM517 24h1v1h-1zM740 829h1v1h-1zM682 55h1v1h-1zM698 279h1v1h-1zM800 702h1v1h-1zM701 61h1v1h-1zM84 501h1v1h-1zM638 473h1v1h-1zM755 466h1v1h-1zM829 19h1v1h-1zM535 436h1v1h-1zM615 635h1v1h-1zM606 585h1v1h-1zM578 435h1v1h-1zM288 513h1v1h-1zM500 706h1v1h-1zM624 478h1v1h-1zM268 307h1v1h-1zM154 366h1v1h-1zM683 40h1v1h-1zM747 703h1v1h-1zM189 607h1v1h-1zM720 86h1v1h-1zM507 345h1v1h-1zM424 720h1v1h-1zM325 574h1v1h-1zM103 255h1v1h-1zM235 339h1v1h-1zM2 239h1v1h-1zM120 399h1v1h-1zM186 51h1v1h-1z"/><circle cx="446" cy="342" r="3.2" fill="#fff"/><circle cx="791" cy="396" r="2.6" fill="#fff"/><circle cx="188" cy="210" r="2" fill="#fff"/><circle cx="354" cy="168" r="2" fill="#fff"/><circle cx="538" cy="293" r="1.6" fill="#fff"/><circle cx="523" cy="295" r="1.5" fill="#fff"/><circle cx="764" cy="397" r="1.6" fill="#fff"/><circle cx="369" cy="19" r="1.5" fill="#fff"/><circle cx="215" cy="41" r="1.3" fill="#fff"/><circle cx="152" cy="25" r="1.3" fill="#fff"/><circle cx="4" cy="24" r="1.3" fill="#fff"/><circle cx="97" cy="241" r="1.4" fill="#fff"/><circle cx="249" cy="234" r="1.2" fill="#fff"/><circle cx="256.5" cy="233.5" r="1.3" fill="#fff"/><circle cx="212" cy="346" r="1.3" fill="#fff"/><circle cx="70" cy="97" r="1.2" fill="#fff"/><circle cx="413" cy="297" r="1.3" fill="#fff"/><circle cx="241" cy="375" r="1.2" fill="#fff"/><circle cx="638" cy="21" r="1.4" fill="#fff"/><circle cx="734" cy="62.5" r="1.3" fill="#fff"/><circle cx="457" cy="157.60000000000002" r="1.3" fill="#fff"/><circle cx="599.5" cy="184.7" r="1.2" fill="#fff"/><circle cx="512" cy="230" r="1.2" fill="#fff"/><circle cx="609" cy="326.5" r="1.4" fill="#fff"/><circle cx="753" cy="410" r="1.3" fill="#fff"/><circle cx="583" cy="89.69999999999999" r="1.2" fill="#fff"/><circle cx="822" cy="327" r="1.2" fill="#fff"/><circle cx="77" cy="479" r="1.3" fill="#fff"/><circle cx="201" cy="488" r="1.3" fill="#fff"/><circle cx="109" cy="586" r="1.2" fill="#fff"/><circle cx="33" cy="666" r="1.2" fill="#fff"/><circle cx="610" cy="513" r="1.3" fill="#fff"/><circle cx="717" cy="529" r="1.2" fill="#fff"/><circle cx="821" cy="564" r="1.2" fill="#fff"/><circle cx="675" cy="692" r="1.2" fill="#fff"/></svg></div>
<div class="t" style="left:36px;top:114.5px;font-size:12.7px;color:#515c6e">M 31-L-3600S-20131202-122150</div>
<div class="a" style="left:751px;top:112px;width:30px;height:17px;border:1px solid #7d8ca3;border-radius:3px;background:linear-gradient(#cad7e6,#c3d1e2);box-shadow:inset 0 0 0 1px rgba(255,255,255,.35)"></div>
<svg class="a" style="left:759.0px;top:114.5px" width="14" height="12"><rect x="2.5" y="6.5" width="9" height="3.5" rx="1" fill="#fff" stroke="#3a3a4a" stroke-width="1"/></svg>
<div class="a" style="left:784px;top:112px;width:30px;height:17px;border:1px solid #7d8ca3;border-radius:3px;background:linear-gradient(#cad7e6,#c3d1e2);box-shadow:inset 0 0 0 1px rgba(255,255,255,.35)"></div>
<svg class="a" style="left:792.0px;top:113.5px" width="14" height="14"><rect x="2.5" y="3" width="9" height="8" rx="1" fill="#fff" stroke="#3a3a4a" stroke-width="1"/><rect x="5" y="5.5" width="4" height="2.5" fill="#c8d4e2" stroke="#3a3a4a" stroke-width=".8"/></svg>
<div class="a" style="left:817px;top:112px;width:30px;height:17px;border:1px solid #7d8ca3;border-radius:3px;background:linear-gradient(#cad7e6,#c3d1e2);box-shadow:inset 0 0 0 1px rgba(255,255,255,.35)"></div>
<svg class="a" style="left:825.0px;top:114.5px" width="14" height="12"><path d="M3 3.5l8 5M11 3.5l-8 5" stroke="#3a3a4a" stroke-width="4.2" stroke-linecap="round"/><path d="M3 3.5l8 5M11 3.5l-8 5" stroke="#fff" stroke-width="2.2" stroke-linecap="round"/></svg>
<svg class="a" style="left:17px;top:112px" width="15" height="16"><path d="M.5 .5h10l4 4v11H.5z" fill="#178a8a" stroke="#000" stroke-width="1.2"/><path d="M10.5 .8l3.8 3.8h-3.8z" fill="#ddd"/><path d="M2.5 3.5l8 8" stroke="#fff" stroke-width="3"/><path d="M5 12l-2 3M5 12l2 3" stroke="#053" stroke-width="1.5"/></svg>
<svg class="a" style="left:15px;top:800px" width="240" height="166" viewBox="15 800 240 166">
<defs><filter id="nz" x="0" y="0" width="100%" height="100%"><feTurbulence type="fractalNoise" baseFrequency=".9" numOctaves="1" seed="3" result="n"/><feColorMatrix in="n" type="matrix" values="0 0 0 0 1  0 0 0 0 1  0 0 0 0 1  2.2 0 0 0 -.7" result="m"/><feComposite in="m" in2="SourceGraphic" operator="in"/></filter>
<clipPath id="imgclip"><rect x="15" y="800" width="240" height="165"/></clipPath></defs>
<g clip-path="url(#imgclip)">
<g fill="#8c8c8c" stroke="#8c8c8c"><ellipse cx="102" cy="885" rx="52" ry="30" transform="rotate(-43 102 885)" fill="none" stroke="#8c8c8c" stroke-width="21"/>
<path d="M105 834 C120 823 137 819 152 820 C170 824 186 838 189 860 C191 875 185 886 178.5 893 C180 880 179 870 176 865 C170 852 160 844 145 839 C133 835 120 835 105 840Z" fill="#8c8c8c"/>
<path d="M21 893 C13 905 12 925 18 940 C24 955 40 962 60 964 L54 958 C42 955 32 945 28 930 C24 915 25 903 28 897Z" fill="#8c8c8c"/></g>
<g filter="url(#nz)" opacity=".8"><ellipse cx="102" cy="885" rx="52" ry="30" transform="rotate(-43 102 885)" fill="none" stroke="#fff" stroke-width="21"/>
<path d="M105 834 C120 823 137 819 152 820 C170 824 186 838 189 860 C191 875 185 886 178.5 893 C180 880 179 870 176 865 C170 852 160 844 145 839 C133 835 120 835 105 840Z" fill="#fff"/>
<path d="M21 893 C13 905 12 925 18 940 C24 955 40 962 60 964 L54 958 C42 955 32 945 28 930 C24 915 25 903 28 897Z" fill="#fff"/>
</g></g></svg>
<div class="t" style="left:17px;top:917px;font-family:Liberation Serif,serif;font-style:italic;font-size:32.5px;color:#fff;-webkit-text-stroke:3px #000;paint-order:stroke fill;letter-spacing:-.2px">Galaxy Scientific</div>
<div class="t" style="left:13px;top:961px;font-weight:bold;font-style:italic;font-size:30px;color:#fff;-webkit-text-stroke:1.2px #fff;letter-spacing:2.2px">www.Astro.hk</div>
<div class="a" style="left:866px;top:204px;width:287px;height:171px;border:1px solid #555;border-radius:5px 5px 0 0;background:#d7e4f2;box-shadow:inset 1px 1px 0 #fff,inset -1px -1px 0 #fff"></div>
<div class="a" style="left:868px;top:206px;width:283px;height:25px;border-radius:3px 3px 0 0;background:linear-gradient(#bccbdc,#d9e4f1)"></div>
<div class="a" style="left:869px;top:229px;width:281px;height:143px;background:#f0f0f0"></div>
<div class="t" style="left:873px;top:212px;font-size:12px;color:#515c6e">Screen Stretch</div>
<div class="a" style="left:1084px;top:209px;width:30px;height:17px;border:1px solid #7d8ca3;border-radius:3px;background:linear-gradient(#cad7e6,#c3d1e2);box-shadow:inset 0 0 0 1px rgba(255,255,255,.35)"></div>
<svg class="a" style="left:1093.0px;top:210.5px" width="14" height="14"><text x="7" y="12" text-anchor="middle" font-family="Liberation Sans" font-weight="bold" font-size="13" fill="#fff" stroke="#3a3a4a" stroke-width="1.6" paint-order="stroke">?</text></svg>
<div class="a" style="left:1117px;top:209px;width:31px;height:17px;border:1px solid #7d8ca3;border-radius:3px;background:linear-gradient(#cad7e6,#c3d1e2);box-shadow:inset 0 0 0 1px rgba(255,255,255,.35)"></div>
<svg class="a" style="left:1125.5px;top:211.5px" width="14" height="12"><path d="M3 3.5l8 5M11 3.5l-8 5" stroke="#3a3a4a" stroke-width="4.2" stroke-linecap="round"/><path d="M3 3.5l8 5M11 3.5l-8 5" stroke="#fff" stroke-width="2.2" stroke-linecap="round"/></svg>
<svg class="a" style="left:883px;top:237px" width="176" height="79"><rect width="176" height="79" fill="#000"/><path fill="#fff" d="M14 70.0V79h1V70.0zM15 0.3V79h1V0.3zM16 1.0V79h1V1.0zM17 12.4V79h1V12.4zM18 17.9V79h1V17.9zM19 20.1V79h1V20.1zM20 21.5V79h1V21.5zM21 23.0V79h1V23.0zM22 24.7V79h1V24.7zM23 26.9V79h1V26.9zM24 29.6V79h1V29.6zM25 31.8V79h1V31.8zM26 33.5V79h1V33.5zM27 35.2V79h1V35.2zM28 37.0V79h1V37.0zM29 39.0V79h1V39.0zM30 41.0V79h1V41.0zM31 42.4V79h1V42.4zM32 43.1V79h1V43.1zM33 43.9V79h1V43.9zM34 44.6V79h1V44.6zM35 45.3V79h1V45.3zM36 46.0V79h1V46.0zM37 46.7V79h1V46.7zM38 48.2V79h1V48.2zM39 50.8V79h1V50.8zM40 52.2V79h1V52.2zM41 52.6V79h1V52.6zM42 53.1V79h1V53.1zM43 53.5V79h1V53.5zM44 54.2V79h1V54.2zM45 55.1V79h1V55.1zM46 56.1V79h1V56.1zM47 56.3V79h1V56.3zM48 55.8V79h1V55.8zM49 55.3V79h1V55.3zM50 55.3V79h1V55.3zM51 55.9V79h1V55.9zM52 56.5V79h1V56.5zM53 58.1V79h1V58.1zM54 60.0V79h1V60.0zM55 61.8V79h1V61.8zM56 62.2V79h1V62.2zM57 63.1V79h1V63.1zM58 63.5V79h1V63.5zM59 64.5V79h1V64.5zM60 63.1V79h1V63.1zM62 67.2V79h1V67.2zM63 61.0V79h1V61.0zM64 64.0V79h1V64.0zM65 67.4V79h1V67.4zM66 65.3V79h1V65.3zM67 67.1V79h1V67.1zM68 61.6V79h1V61.6zM69 64.1V79h1V64.1zM70 72.6V79h1V72.6zM71 74.7V79h1V74.7zM72 74.9V79h1V74.9zM73 63.8V79h1V63.8zM74 65.2V79h1V65.2zM75 65.6V79h1V65.6zM76 70.1V79h1V70.1zM77 69.0V79h1V69.0zM78 64.8V79h1V64.8zM79 72.1V79h1V72.1zM80 67.5V79h1V67.5zM81 70.9V79h1V70.9zM82 67.4V79h1V67.4zM83 66.6V79h1V66.6zM84 72.7V79h1V72.7zM85 68.0V79h1V68.0zM86 68.1V79h1V68.1zM89 70.5V79h1V70.5zM90 69.8V79h1V69.8zM91 65.7V79h1V65.7zM92 70.4V79h1V70.4zM93 67.4V79h1V67.4zM94 68.4V79h1V68.4zM95 65.1V79h1V65.1zM100 73.1V79h1V73.1zM105 67.8V79h1V67.8zM111 73.3V79h1V73.3zM112 72.8V79h1V72.8zM113 65.0V79h1V65.0zM117 65.5V79h1V65.5zM118 67.7V79h1V67.7zM119 67.6V79h1V67.6zM120 67.0V79h1V67.0zM123 73.0V79h1V73.0zM124 69.3V79h1V69.3zM125 65.1V79h1V65.1zM126 75.6V79h1V75.6zM127 73.3V79h1V73.3zM128 73.1V79h1V73.1zM136 73.9V79h1V73.9zM137 73.9V79h1V73.9zM147 69.6V79h1V69.6zM148 69.6V79h1V69.6zM149 69.6V79h1V69.6zM156 73.9V79h1V73.9zM159 73.9V79h1V73.9zM166 73.9V79h1V73.9zM167 73.9V79h1V73.9zM170 69.6V79h1V69.6zM171 69.6V79h1V69.6zM174 42.8V79h1V42.8z"/></svg>
<div class="a" style="left:882px;top:236px;width:178px;height:1px;background:#fff"></div>
<svg class="a" style="left:886px;top:316px" width="186" height="12"><path d="M12 2V10H3Z" fill="#e01010" stroke="#600" stroke-width=".8"/><path d="M172 2V10H181Z" fill="#20d020" stroke="#060" stroke-width=".8"/></svg>
<div class="t" style="left:900px;top:332px;font-size:11.5px;color:#000;transform:scaleX(.85);transform-origin:0 0">Minimum</div>
<div class="t" style="left:998px;top:332px;font-size:11.5px;color:#000;transform:scaleX(.85);transform-origin:0 0">Maximum</div>
<div class="a" style="left:877px;top:348px;width:80px;height:19px;background:#fff;border:1px solid;border-color:#a0a0a0 #fff #fff #a0a0a0;box-shadow:inset 1px 1px #696969,inset -1px -1px #e3e3e3"></div>
<div class="t" style="right:413px;top:353px;font-size:12px;color:#000;letter-spacing:-.3px">5556.</div>
<div class="a" style="left:939px;top:350px;width:16px;height:8px;background:#f0f0f0;border:1px solid;border-color:#fff #696969 #696969 #fff"></div>
<svg class="a" style="left:941px;top:350px" width="11" height="8"><path d="M3.5 5h4L5.5 3z" fill="#000"/></svg>
<div class="a" style="left:939px;top:358px;width:16px;height:8px;background:#f0f0f0;border:1px solid;border-color:#fff #696969 #696969 #fff"></div>
<svg class="a" style="left:941px;top:358px" width="11" height="8"><path d="M3.5 2.5h4L5.5 4.5z" fill="#000"/></svg>
<div class="a" style="left:985px;top:348px;width:80px;height:19px;background:#fff;border:1px solid;border-color:#a0a0a0 #fff #fff #a0a0a0;box-shadow:inset 1px 1px #696969,inset -1px -1px #e3e3e3"></div>
<div class="t" style="right:305px;top:353px;font-size:12px;color:#000;letter-spacing:-.3px">66190</div>
<div class="a" style="left:1047px;top:350px;width:16px;height:8px;background:#f0f0f0;border:1px solid;border-color:#fff #696969 #696969 #fff"></div>
<svg class="a" style="left:1049px;top:350px" width="11" height="8"><path d="M3.5 5h4L5.5 3z" fill="#000"/></svg>
<div class="a" style="left:1047px;top:358px;width:16px;height:8px;background:#f0f0f0;border:1px solid;border-color:#fff #696969 #696969 #fff"></div>
<svg class="a" style="left:1049px;top:358px" width="11" height="8"><path d="M3.5 2.5h4L5.5 4.5z" fill="#000"/></svg>
<div class="a" style="left:961px;top:349px;width:18px;height:18px;background:#f0f0f0;border:1px solid;border-color:#fff #696969 #696969 #fff;box-shadow:inset -1px -1px #a0a0a0,inset 1px 1px #e3e3e3;"></div>
<svg class="a" style="left:963px;top:351px" width="14" height="14"><path d="M2 5h10M9 2.5l3 2.5M2 9.5h10M2 9.5l3 2.5" stroke="#000" stroke-width="1.3" fill="none"/></svg>
<div class="a" style="left:1076px;top:237px;width:62px;height:49px;border:1px solid;border-color:#a0a0a0 #fff #fff #a0a0a0;box-shadow:inset 1px 1px #696969;background:linear-gradient(to top right,#000 5%,#fff 95%)"></div>
<div class="a" style="left:1076px;top:294px;width:27px;height:20px;background:#f0f0f0;border:1px solid;border-color:#fff #696969 #696969 #fff;box-shadow:inset -1px -1px #a0a0a0,inset 1px 1px #e3e3e3;"></div>
<svg class="a" style="left:1081px;top:296px" width="18" height="17"><circle cx="7" cy="7" r="5.5" fill="#30d0e0" stroke="#000" stroke-width="1.5"/><path d="M4 7h6M7 4v6" stroke="#000" stroke-width="1.6"/><path d="M11 11l4.5 4.5" stroke="#000" stroke-width="2.4"/></svg>
<div class="a" style="left:1112px;top:294px;width:27px;height:20px;background:#f0f0f0;border:1px solid;border-color:#fff #696969 #696969 #fff;box-shadow:inset -1px -1px #a0a0a0,inset 1px 1px #e3e3e3;"></div>
<svg class="a" style="left:1117px;top:296px" width="18" height="17"><circle cx="7" cy="7" r="5.5" fill="#c8c8c8" stroke="#a0a0a0" stroke-width="1.5"/><path d="M11 11l4.5 4.5" stroke="#a0a0a0" stroke-width="2.4"/><path d="M5 5l2 2" stroke="#fff" stroke-width="1.5"/></svg>
<div class="a" style="left:1076px;top:320px;width:63px;height:20px;background:#f0f0f0;border:1px solid;border-color:#fff #696969 #696969 #fff;box-shadow:inset -1px -1px #a0a0a0,inset 1px 1px #e3e3e3;"></div>
<div class="a" style="left:1120px;top:322px;width:1px;height:16px;background:#a0a0a0;border-right:1px solid #fff"></div>
<div class="t" style="left:1083px;top:323px;font-family:Liberation Serif,serif;font-size:12.5px;color:#000">Range</div>
<svg class="a" style="left:1124px;top:326px" width="10" height="8"><path d="M1 3h7L4.5 6.5z" fill="#000"/></svg>
<div class="a" style="left:1076px;top:348px;width:48px;height:20px;background:#f0f0f0;border:1px solid;border-color:#fff #696969 #696969 #fff;box-shadow:inset -1px -1px #a0a0a0,inset 1px 1px #e3e3e3;"></div>
<div class="t" style="left:1081px;top:352px;font-size:12px;color:#a0a0a0;text-shadow:1px 1px #fff;letter-spacing:-.2px">Update</div>
<div class="a" style="left:1127px;top:348px;width:18px;height:20px;background:#f0f0f0;border:1px solid;border-color:#fff #696969 #696969 #fff;box-shadow:inset -1px -1px #a0a0a0,inset 1px 1px #e3e3e3;"></div>
<div class="t" style="left:1129px;top:352px;font-size:11px;color:#000;letter-spacing:-.5px">&gt;&gt;</div>
<div class="a" style="left:866px;top:403px;width:467px;height:434px;border:1px solid #000;border-radius:5px 5px 0 0;background:#b9d1ea;box-shadow:inset 1px 1px 0 #fff,inset -1px -1px 0 #fff"></div>
<div class="a" style="left:868px;top:405px;width:463px;height:25px;border-radius:3px 3px 0 0;background:linear-gradient(#9fbbd9,#b9d1ea)"></div>
<div class="a" style="left:869px;top:428px;width:461px;height:406px;background:#f0f0f0"></div>
<div class="t" style="left:873px;top:410px;font-size:12px;color:#1e2b40">FITS Header for M 31-L-3600S-20131202-122150</div>
<div class="a" style="left:1264px;top:409px;width:30px;height:16px;border:1px solid #4e6a8e;border-radius:3px;background:linear-gradient(#c9d9ec 0,#c0d2e8 45%,#9db7d6 50%,#a9c3df 100%);box-shadow:inset 0 0 0 1px rgba(255,255,255,.5)"></div>
<svg class="a" style="left:1273px;top:410px" width="13" height="14"><text x="6.5" y="11.5" text-anchor="middle" font-family="Liberation Sans" font-weight="bold" font-size="13" fill="#fff" stroke="#333" stroke-width="1.6" paint-order="stroke">?</text></svg>
<div class="a" style="left:1297px;top:409px;width:31px;height:16px;border:1px solid #4a1515;border-radius:3px;background:linear-gradient(#eeb3a5 0,#e49c8c 45%,#c74a2d 50%,#d36a50 100%);box-shadow:inset 0 0 0 1px rgba(255,255,255,.4)"></div>
<svg class="a" style="left:1305px;top:410px" width="15" height="14"><path d="M3.5 3.5l8 7M11.5 3.5l-8 7" stroke="#333" stroke-width="4" stroke-linecap="round"/><path d="M3.5 3.5l8 7M11.5 3.5l-8 7" stroke="#fff" stroke-width="2.2" stroke-linecap="round"/></svg>
<div class="a" style="left:878px;top:456px;width:442px;height:338px;border:1px solid;border-color:#fff #696969 #696969 #fff;box-shadow:inset -1px -1px #a0a0a0"></div>
<div class="a" style="left:878px;top:436px;width:44px;height:22px;background:#f0f0f0;border-left:1px solid #fff;border-top:1px solid #fff;border-radius:2px 0 0 0"></div>
<div class="a" style="left:921px;top:439px;width:2px;height:18px;background:#696969;border-right:0"></div>
<div class="a" style="left:923px;top:439px;width:40px;height:18px;border-top:1px solid #fff;border-right:1px solid #696969;box-shadow:inset -1px 0 #a0a0a0"></div>
<div class="t" style="left:885px;top:440px;font-size:12px;color:#000;transform:scaleX(.9);transform-origin:0 0">View</div>
<div class="t" style="left:927px;top:443px;font-size:12px;color:#000;transform:scaleX(.9);transform-origin:0 0">Edit</div>
<div class="a" style="left:892px;top:469px;width:412px;height:301px;border:1px solid;border-color:#a0a0a0 #fff #fff #a0a0a0;box-shadow:inset 1px 1px #696969,inset -1px -1px #e3e3e3;background:#f0f0f0"></div>
<div class="a" style="left:1287px;top:471px;width:16px;height:297px;background:linear-gradient(90deg,#e6e6e6,#f0f0f0 30%,#f0f0f0)"></div>
<svg class="a" style="left:1290px;top:476px" width="11" height="7"><path d="M1.5 5.5h8L5.5 1.5z" fill="#404040"/></svg>
<svg class="a" style="left:1290px;top:755px" width="11" height="7"><path d="M1.5 1.5h8L5.5 5.5z" fill="#404040"/></svg>
<div class="a" style="left:1288px;top:490px;width:14px;height:46px;border:1px solid #959595;border-radius:2px;background:linear-gradient(90deg,#f2f2f2,#ebebeb 45%,#d9d9d9 55%,#dcdcdc)"></div>
<svg class="a" style="left:1290px;top:507px" width="10" height="10"><path d="M1 1.5h7M1 4.5h7M1 7.5h7" stroke="#555" stroke-width="1.2"/></svg>
<div class="a" style="left:894px;top:471px;width:392px;height:297px;overflow:hidden">
<div class="t fx" style="left:1px;top:2px">SIMPLE</div>
<div class="t fx" style="left:69px;top:2px">= T</div>
<div class="t fx" style="left:1px;top:15px">BITPIX</div>
<div class="t fx" style="left:69px;top:15px">= 16 /8 unsigned int, 16 &amp; 32 int, -32 &amp; -64 real</div>
<div class="t fx" style="left:1px;top:28px">NAXIS</div>
<div class="t fx" style="left:69px;top:28px">= 2 /number of axes</div>
<div class="t fx" style="left:1px;top:41px">NAXIS1</div>
<div class="t fx" style="left:69px;top:41px">= 4096 /fastest changing axis</div>
<div class="t fx" style="left:1px;top:54px">NAXIS2</div>
<div class="t fx" style="left:69px;top:54px">= 4096 /next to fastest changing axis</div>
<div class="t fx" style="left:1px;top:67px">BSCALE</div>
<div class="t fx" style="left:69px;top:67px">= 1.0000000000000000 /physical = BZERO + BSCALE*array_value</div>
<div class="t fx" style="left:1px;top:80px">BZERO</div>
<div class="t fx" style="left:69px;top:80px">= 32768.000000000000 /physical = BZERO + BSCALE*array_value</div>
<div class="t fx" style="left:1px;top:93px">DATE-OBS</div>
<div class="t fx" style="left:69px;top:93px">= '2013-12-02T12:22:36' / [ISO 8601] UTC date/time of exposure start</div>
<div class="t fx" style="left:1px;top:106px">EXPTIME</div>
<div class="t fx" style="left:69px;top:106px">= 3.60000000000E+003 / [sec] Duration of exposure</div>
<div class="t fx" style="left:1px;top:119px">EXPOSURE</div>
<div class="t fx" style="left:69px;top:119px">= 3.60000000000E+003 / [sec] Duration of exposure</div>
<div class="t fx" style="left:1px;top:132px">SET-TEMP</div>
<div class="t fx" style="left:69px;top:132px">= -30.000000000000000 /CCD temperature setpoint in C</div>
<div class="t fx" style="left:1px;top:145px">CCD-TEMP</div>
<div class="t fx" style="left:69px;top:145px">= -30.000000000000000 /CCD temperature at start of exposure in C</div>
<div class="t fx" style="left:1px;top:158px">XPIXSZ</div>
<div class="t fx" style="left:69px;top:158px">= 9.0000000000000000 /Pixel Width in microns (after binning)</div>
<div class="t fx" style="left:1px;top:171px">YPIXSZ</div>
<div class="t fx" style="left:69px;top:171px">= 9.0000000000000000 /Pixel Height in microns (after binning)</div>
<div class="t fx" style="left:1px;top:184px">XBINNING</div>
<div class="t fx" style="left:69px;top:184px">= 1 / Binning level along the X-axis</div>
<div class="t fx" style="left:1px;top:197px">YBINNING</div>
<div class="t fx" style="left:69px;top:197px">= 1 / Binning level along the Y-axis</div>
<div class="t fx" style="left:1px;top:210px">XORGSUBF</div>
<div class="t fx" style="left:69px;top:210px">= 0 /Subframe X position in binned pixels</div>
<div class="t fx" style="left:1px;top:223px">YORGSUBF</div>
<div class="t fx" style="left:69px;top:223px">= 0 /Subframe Y position in binned pixels</div>
<div class="t fx" style="left:1px;top:236px">READOUTM</div>
<div class="t fx" style="left:69px;top:236px">= '1 MHz (RBI Flood)' / Readout mode of image</div>
<div class="t fx" style="left:1px;top:249px">FILTER</div>
<div class="t fx" style="left:69px;top:249px">= 'L</div>
<div class="t fx" style="left:1px;top:262px">IMAGETYP</div>
<div class="t fx" style="left:69px;top:262px">= 'Light Frame' /</div>
<div class="t fx" style="left:1px;top:275px">SITELAT</div>
<div class="t fx" style="left:69px;top:275px">= '00 00 00' /</div>
<div class="t fx" style="left:122px;top:249px">'</div>
<div class="t fx" style="left:142px;top:249px">/ Filter name</div>
<div class="t fx" style="left:167px;top:262px">Type of image</div>
<div class="t fx" style="left:162px;top:275px">Latitude of the imaging location</div>
</div>
<div class="a" style="left:1244px;top:802px;width:75px;height:23px;border:1px solid #696969;background:#f0f0f0;box-shadow:inset 1px 1px #fff,inset -1px -1px #696969,inset -2px -2px #a0a0a0"></div>
<div class="a" style="left:867px;top:834px;width:465px;height:2px;background:linear-gradient(#c8e8f8,#40d0f0)"></div>
<div class="a" style="left:1330px;top:428px;width:2px;height:408px;background:linear-gradient(90deg,#c8e8f8,#60d4f0)"></div>
<div class="t" style="left:1267px;top:807px;font-size:12px;color:#000;transform:scaleX(.9);transform-origin:0 0">Close</div>
</body></html>
